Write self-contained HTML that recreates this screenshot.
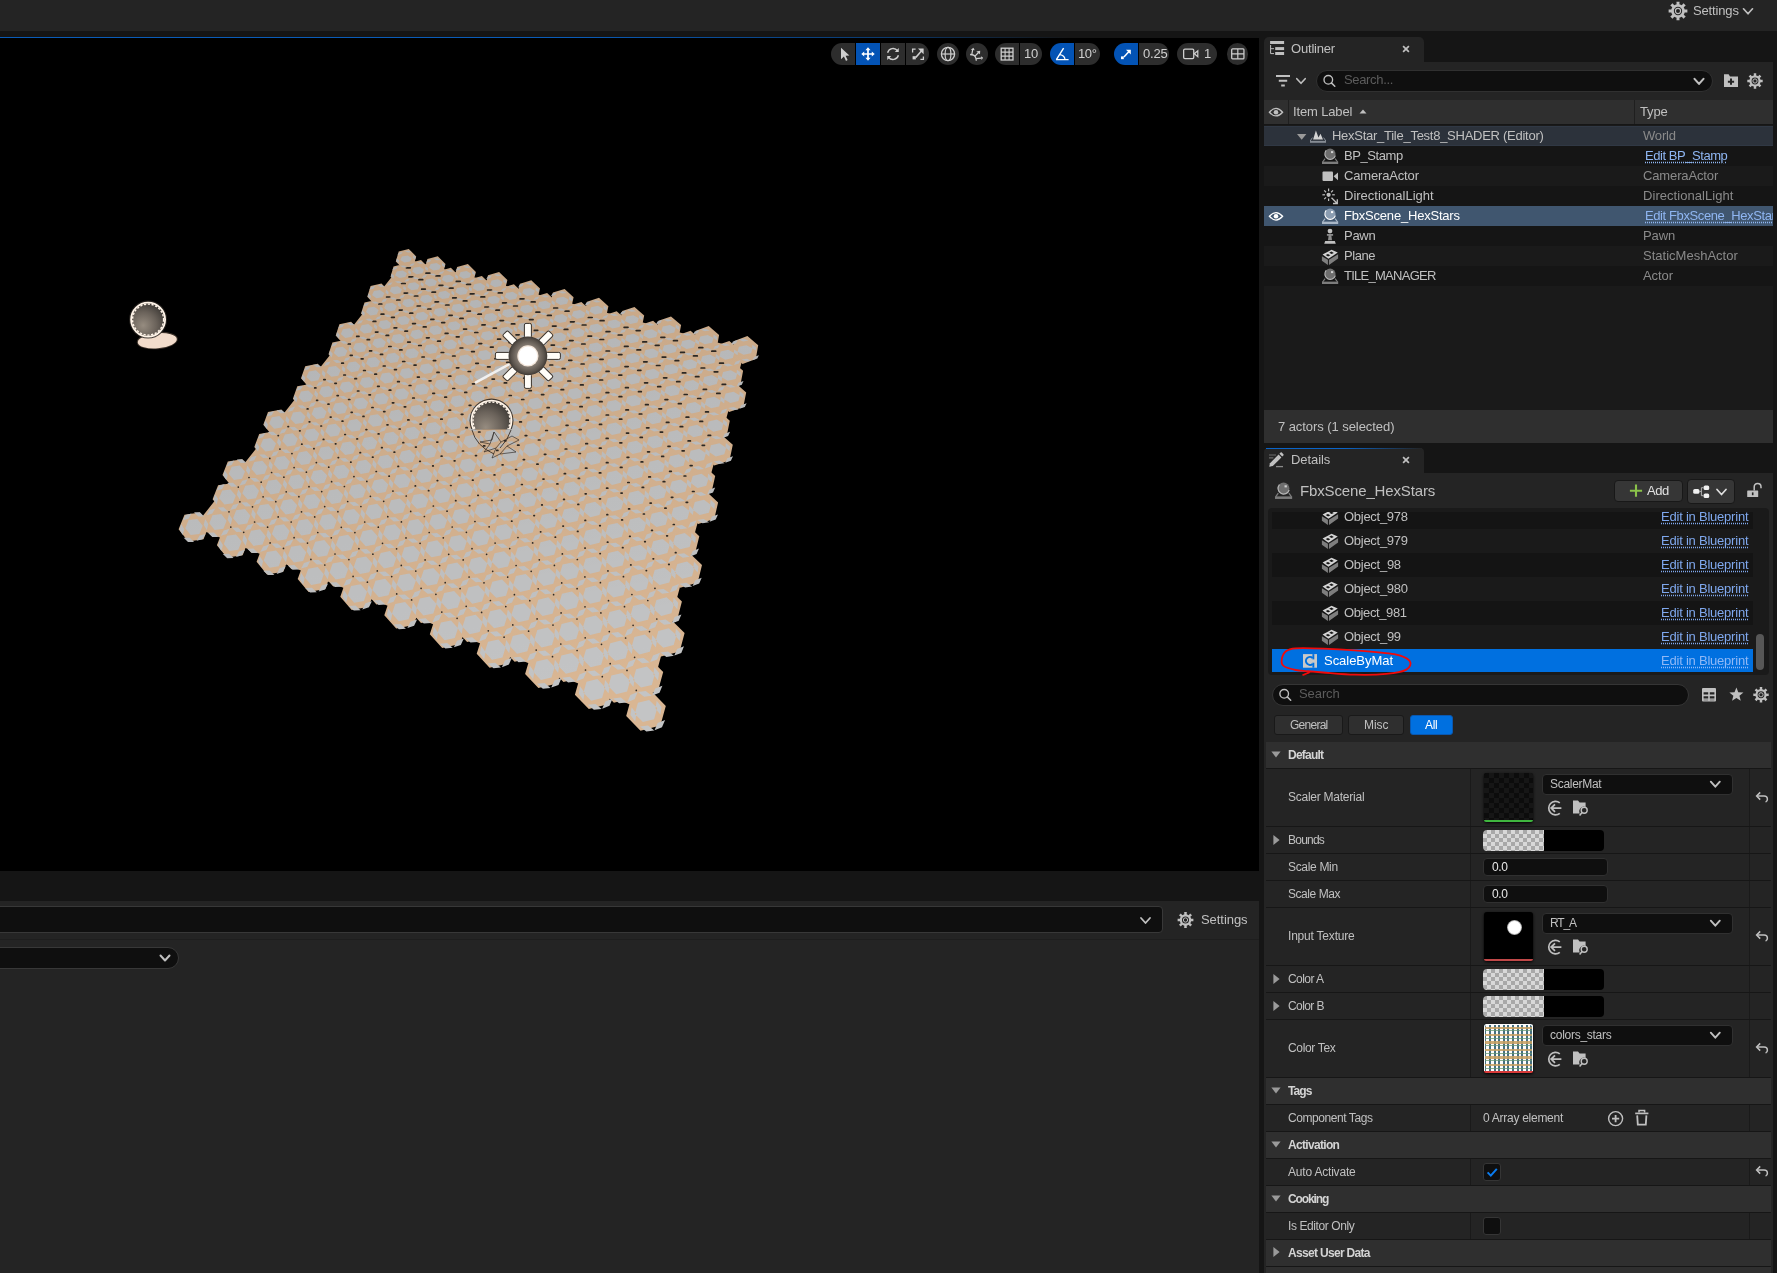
<!DOCTYPE html>
<html><head><meta charset="utf-8"><title>UE</title>
<style>
html,body{margin:0;padding:0;background:#151515;}
body{width:1777px;height:1273px;overflow:hidden;font-family:"Liberation Sans",sans-serif;}
#root{position:relative;width:1777px;height:1273px;overflow:hidden;background:#151515;}
#root div,#root span.t,#root svg{position:absolute;}
#root div{box-sizing:border-box;}
span.t{white-space:pre;will-change:transform;}
.lnk{text-decoration:underline dotted;text-underline-offset:2px;}

</style></head>
<body>
<div id="root">
<div style="left:0px;top:0px;width:1777px;height:31px;background:#242424;"></div>
<div style="left:0px;top:37px;width:1259px;height:1px;background:linear-gradient(90deg,#0a5cb8 0%,#0a5cb8 45%,#0a3a70 70%,#151515 85%);"></div>
<div style="left:0px;top:38px;width:1259px;height:833px;background:#000;"></div>
<div style="left:0px;top:901px;width:1259px;height:372px;background:#242424;"></div>
<div style="left:0px;top:939px;width:1259px;height:1px;background:#1e1e1e;"></div>
<svg style="left:1660px;top:0px;" width="110" height="31" viewBox="0 0 110 31"><path d="M15.38,4.68 L16.60,4.30 L16.44,1.63 L19.56,1.63 L19.40,4.30 L20.62,4.68 L21.74,5.28 L23.52,3.27 L25.73,5.48 L23.72,7.26 L24.32,8.38 L24.70,9.60 L27.37,9.44 L27.37,12.56 L24.70,12.40 L24.32,13.62 L23.72,14.74 L25.73,16.52 L23.52,18.73 L21.74,16.72 L20.62,17.32 L19.40,17.70 L19.56,20.37 L16.44,20.37 L16.60,17.70 L15.38,17.32 L14.26,16.72 L12.48,18.73 L10.27,16.52 L12.28,14.74 L11.68,13.62 L11.30,12.40 L8.63,12.56 L8.63,9.44 L11.30,9.60 L11.68,8.38 L12.28,7.26 L10.27,5.48 L12.48,3.27 L14.26,5.28Z M13.82,11.00 a4.18,4.18 0 1,0 8.36,0 a4.18,4.18 0 1,0 -8.36,0Z" fill="#c0c0c0" fill-rule="evenodd"/><circle cx="18" cy="11" r="2.57" fill="none" stroke="#c0c0c0" stroke-width="1.14"/><path d="M83.5,8.8 L88,13.8 L92.5,8.8" fill="none" stroke="#c0c0c0" stroke-width="1.7" stroke-linecap="round" stroke-linejoin="round"/></svg>
<span class="t" style="left:1692.6px;top:3.0px;font-size:13px;line-height:16px;color:#c0c0c0;letter-spacing:-0.148px;">Settings</span>
<div style="left:0;top:38px;width:1259px;height:833px;overflow:hidden;"><svg style="left:0;top:-38px;" width="1259" height="871" viewBox="0 0 1259 871"><path d="M194,527L232.7,542.8L272.8,559.1L314.4,576L357.4,593.5L401.9,611.6L447.8,630.3L495.2,649.6L544,669.5L594.3,690L646,711L658.2,666.6L669.9,624L681,583.3L691.7,544.4L701.8,507.4L711.5,472.2L720.6,438.9L729.3,407.4L737.4,377.8L745,350L706.2,339.6L668.5,329.5L631.9,319.6L596.4,310.1L561.9,300.9L528.6,291.9L496.3,283.2L465.1,274.9L435,266.8L406,259L389.7,279.6L372.3,301.6L353.8,325L334.2,349.7L313.6,375.8L291.8,403.3L269,432.2L245.1,462.4L220.1,494Z" fill="#d9b693"/><path d="M209.4,524.8l-5.9,14.4-15.3,2.2-9.6,-12.2 5.9,-14.4 15.3,-2.2zM233.3,519.7l-5.7,14.4-15.3,2.3-9.7,-12.2 5.7,-14.4 15.4,-2.3zM248.5,540.3l-5.8,14.9-15.8,2.4-10,-12.4 5.8,-14.9 15.8,-2.4zM242.3,494.7l-5.5,14-14.8,2.2-9.4,-11.7 5.5,-14 14.8,-2.3zM272.6,535.1l-5.7,14.9-15.8,2.5-10.1,-12.4 5.7,-14.9 15.8,-2.5zM289.1,556.4l-5.8,15.4-16.3,2.7-10.4,-12.7 5.8,-15.4 16.2,-2.7zM251.2,470.6l-5.2,13.5-14.4,2.3-9.1,-11.4 5.3,-13.5 14.3,-2.3zM313.3,551l-5.6,15.5-16.2,2.8-10.6,-12.6 5.7,-15.5 16.2,-2.8zM331.1,573l-5.8,16-16.7,3-10.9,-13 5.8,-15.9 16.7,-3zM273.8,465.5l-5.1,13.6-14.4,2.4-9.2,-11.3 5.2,-13.6 14.3,-2.3zM355.5,567.5l-5.6,16-16.7,3.1-11,-12.9 5.6,-15.9 16.7,-3.1zM374.6,590.3l-5.8,16.4-17.1,3.3-11.4,-13.2 5.7,-16.5 17.2,-3.2zM282.1,442.4l-5,13.2-13.9,2.3-8.9,-10.8 4.9,-13.2 13.9,-2.4zM399.1,584.6l-5.6,16.5-17.1,3.4-11.5,-13.1 5.6,-16.5 17.1,-3.4zM419.5,608.1l-5.7,17-17.6,3.5-11.9,-13.4 5.7,-17 17.6,-3.6zM290.2,420.1l-4.8,12.8-13.4,2.3-8.7,-10.5 4.7,-12.8 13.4,-2.3zM444.1,602.3l-5.6,17-17.5,3.7-11.9,-13.3 5.5,-17.1 17.6,-3.7zM465.9,626.5l-5.7,17.5-18,3.9-12.4,-13.7 5.7,-17.5 18,-3.9zM311.4,415.3l-4.6,12.8-13.4,2.4-8.8,-10.4 4.6,-12.8 13.4,-2.4zM490.6,620.5l-5.6,17.6-17.9,4-12.5,-13.6 5.6,-17.6 17.9,-4zM513.7,645.4l-5.6,18.1-18.5,4.2-12.9,-13.9 5.7,-18.1 18.4,-4.2zM318.8,393.9l-4.4,12.5-12.9,2.4-8.6,-10.1 4.4,-12.4 13,-2.4zM538.5,639.3l-5.5,18.1-18.4,4.3-13,-13.8 5.5,-18.1 18.4,-4.3zM563,665l-5.6,18.6-19,4.5-13.3,-14.1 5.6,-18.7 18.9,-4.4zM326.1,373.5l-4.2,12-12.5,2.4-8.4,-9.7 4.2,-12 12.6,-2.4zM587.8,658.7l-5.5,18.6-18.8,4.6-13.4,-14 5.4,-18.6 18.9,-4.6zM613.7,685.1l-5.6,19.2-19.3,4.8-13.9,-14.3 5.5,-19.2 19.4,-4.8zM346.1,368.9l-4.1,12-12.5,2.5-8.4,-9.6 4.1,-12.1 12.5,-2.4zM638.5,678.6l-5.3,19.2-19.3,4.9-14,-14.2 5.4,-19.2 19.3,-4.9zM665.8,705.9l-5.4,19.7-19.9,5.1-14.3,-14.6 5.4,-19.7 19.9,-5.1zM352.7,349.3l-3.9,11.8-12.1,2.4-8.2,-9.2 3.9,-11.8 12.1,-2.4zM663.2,672.1l-5.3,19.1-19.2,5.1-14,-14.1 5.3,-19.2 19.2,-5.1zM359.1,330.6l-3.7,11.4-11.7,2.5-8,-9 3.7,-11.3 11.7,-2.5zM660.8,639.4l-5.1,18.7-18.6,4.9-13.6,-13.6 5,-18.7 18.6,-4.9zM377.9,326.3l-3.6,11.4-11.7,2.5-8.1,-8.8 3.7,-11.4 11.6,-2.5zM684.6,632.9l-4.9,18.6-18.6,5.1-13.6,-13.5 4.8,-18.6 18.6,-5.1zM383.6,308.6l-3.4,11-11.3,2.5-7.9,-8.5 3.5,-11 11.3,-2.6zM681.9,601.6l-4.7,18.1-18,5-13.3,-13.1 4.7,-18.1 18,-5zM389.1,291.6l-3.3,10.7-10.9,2.6-7.6,-8.2 3.3,-10.8 10.9,-2.5zM679.4,571.4l-4.4,17.6-17.4,4.9-13,-12.6 4.4,-17.6 17.5,-4.9zM406.8,287.6l-3.2,10.7-10.9,2.7-7.7,-8.2 3.2,-10.7 10.9,-2.6zM702,565.1l-4.3,17.5-17.4,5.1-13,-12.5 4.3,-17.6 17.3,-5zM411.6,271.6l-3,10.4-10.6,2.6-7.5,-7.8 3,-10.4 10.6,-2.6zM699.3,536.2l-4.2,17-16.8,5-12.7,-12.1 4.1,-17 16.8,-5zM416.2,256.4l-2.9,10.1-10.1,2.6-7.4,-7.5 2.9,-10.1 10.1,-2.6zM428.6,267.8l-2.9,10.4-10.5,2.7-7.6,-7.7 2.9,-10.5 10.5,-2.7zM696.7,508.4l-3.9,16.6-16.3,4.9-12.4,-11.7 3.9,-16.6 16.3,-4.8zM445.5,264l-2.8,10.5-10.5,2.8-7.7,-7.7 2.9,-10.5 10.4,-2.8zM458.8,275.7l-2.8,10.9-10.9,2.9-7.9,-7.9 2.9,-10.9 10.8,-2.9zM718.1,502.4l-3.8,16.6-16.2,5-12.5,-11.6 3.8,-16.6 16.2,-5zM475.9,271.9l-2.8,10.8-10.8,3-8,-7.8 2.8,-10.9 10.8,-3zM490.2,284l-2.9,11.2-11.1,3.1-8.3,-8.1 2.9,-11.1 11.1,-3.2zM715.2,475.9l-3.6,16.1-15.7,4.9-12.1,-11.1 3.6,-16.1 15.7,-4.9zM507.4,280l-2.8,11.2-11,3.3-8.4,-8 2.8,-11.2 11.1,-3.3zM522.6,292.5l-2.8,11.6-11.5,3.4-8.6,-8.3 2.8,-11.5 11.4,-3.4zM712.6,450.5l-3.4,15.7-15.3,4.8-11.8,-10.8 3.4,-15.6 15.3,-4.8zM540,288.5l-2.7,11.5-11.4,3.5-8.7,-8.1 2.7,-11.6 11.4,-3.5zM556.1,301.4l-2.8,11.9-11.7,3.6-9,-8.4 2.8,-11.9 11.7,-3.6zM732.8,444.8l-3.3,15.7-15.2,4.9-11.8,-10.6 3.3,-15.7 15.1,-4.9zM573.6,297.2l-2.6,11.9-11.7,3.7-9.1,-8.3 2.7,-11.9 11.7,-3.7zM590.7,310.5l-2.7,12.3-12.1,3.8-9.3,-8.5 2.7,-12.3 12.1,-3.8zM729.8,420.7l-3.1,15.2-14.7,4.9-11.5,-10.3 3.1,-15.2 14.7,-4.8zM608.4,306.2l-2.6,12.3-12,3.9-9.4,-8.4 2.6,-12.3 12,-3.9zM626.4,319.9l-2.7,12.7-12.4,4.1-9.6,-8.7 2.6,-12.7 12.4,-4zM727,397.7l-2.9,14.7-14.3,4.9-11.2,-10 2.9,-14.7 14.2,-4.8zM644.2,315.5l-2.6,12.7-12.3,4.2-9.7,-8.6 2.6,-12.7 12.3,-4.2zM663.2,329.7l-2.7,13.1-12.6,4.2-10.1,-8.8 2.7,-13.1 12.6,-4.3zM746.2,392.4l-2.9,14.7-14.1,4.9-11.3,-9.8 2.8,-14.7 14.2,-4.9zM681.1,325.1l-2.5,13.1-12.6,4.4-10.1,-8.8 2.5,-13.1 12.6,-4.3zM701,339.7l-2.5,13.5-13,4.5-10.4,-9 2.6,-13.5 12.9,-4.5zM743.1,370.7l-2.7,14.3-13.7,4.8-11.1,-9.5 2.7,-14.3 13.7,-4.8zM719.1,335l-2.4,13.5-13,4.6-10.4,-8.9 2.5,-13.5 12.9,-4.6zM740,350l-2.5,13.9-13.3,4.7-10.7,-9.1 2.5,-13.9 13.3,-4.7zM758.2,345.2l-2.4,13.8-13.2,4.9-10.8,-9.1 2.4,-13.8 13.2,-4.9z" fill="#d9b693"/><path d="M230.8,527.1h0M229,511.8h0M243.7,532.3h0M239.9,501.8h0M238.3,487.1h0M254.6,522h0M252.5,506.8h0M270.1,542.9h0M267.6,527.2h0M283.5,548.4h0M249,477.5h0M263.1,496.8h0M261.2,482.2h0M278.2,516.9h0M275.8,501.7h0M294.1,537.7h0M291.2,522h0M310.9,559.4h0M307.5,543.1h0M324.8,565h0M271.6,472.5h0M269.8,458.4h0M286.2,491.8h0M283.9,477.2h0M301.5,511.8h0M298.9,496.7h0M317.8,532.5h0M314.7,516.9h0M335,554h0M331.3,537.8h0M353.1,576.4h0M348.9,559.6h0M367.4,582.2h0M279.9,449.1h0.1M278.1,435.6h0.3M294.1,467.6h0M291.9,453.6h0.1M309,486.7h0M306.4,472.2h0M324.7,506.6h0M321.7,491.6h0M341.3,527.3h0M337.9,511.7h0M358.9,548.7h0M354.9,532.6h0M377.3,570.9h0M372.9,554.2h0M396.7,593.9h0M391.7,576.6h0M411.6,599.9h0M288,426.6h0.5M301.7,444.2h0.3M299.6,430.8h0.5M316.3,462.6h0.1M313.8,448.7h0.3M331.6,481.7h0M328.7,467.2h0.1M347.7,501.5h0M344.4,486.5h0M364.7,522h0M360.9,506.5h0M382.5,543.3h0M378.3,527.2h0M401.3,565.4h0M396.6,548.8h0M421.1,588.3h0M415.8,571.1h0M441.8,612.1h0M435.9,594.3h0M457.1,618.3h0M309.2,421.8h0.6M307.2,408.9h0.8M323.3,439.4h0.5M320.9,426h0.6M338.2,457.6h0.3M335.4,443.8h0.5M353.9,476.6h0.1M350.7,462.2h0.3M370.4,496.3h0M366.8,481.4h0.1M387.8,516.7h0M383.7,501.3h0M406,537.9h0M401.4,521.9h0M425.1,559.9h0M420.1,543.3h0M445.2,582.7h0M439.6,565.5h0M466.2,606.3h0M460.1,588.6h0M488.3,630.8h0M481.6,612.4h0M504.1,637.2h0M316.6,400.3h1M314.7,387.9h1.2M330.3,417.1h0.8M328,404.2h1M344.8,434.5h0.6M342.1,421.2h0.8M360,452.7h0.5M356.9,438.9h0.6M376.1,471.5h0.3M372.5,457.2h0.5M392.9,491.1h0.1M389,476.2h0.3M410.7,511.4h0M406.2,496h0.1M429.2,532.5h0M424.4,516.5h0M448.7,554.3h0M443.3,537.8h0M469.1,577h0M463.2,559.9h0M490.4,600.5h0M484,582.8h0M512.8,624.9h0M505.8,606.6h0M536.2,650.1h0M528.6,631.2h0M552.5,656.7h0M323.8,379.6h1.4M337.1,395.6h1.2M334.9,383.3h1.4M351.2,412.3h1M348.6,399.5h1.2M366,429.6h0.8M363,416.4h1M381.6,447.7h0.6M378.2,433.9h0.8M398,466.4h0.5M394.1,452.2h0.6M415.2,485.9h0.3M410.9,471.1h0.5M433.3,506h0.1M428.5,490.7h0.3M452.2,527h0M447,511.2h0.1M472,548.7h0M466.4,532.3h0M492.7,571.3h0M486.6,554.3h0M514.4,594.7h0M507.7,577.1h0M537.1,618.9h0M529.8,600.7h0M560.8,644h0M553,625.1h0M585.5,670h0M577.1,650.5h0M602.3,676.7h0M343.8,375h1.6M341.7,363.2h1.7M357.5,391h1.4M354.9,378.7h1.6M371.9,407.5h1.2M369,394.8h1.4M387,424.8h1M383.7,411.6h1.2M402.9,442.7h0.8M399.2,429h1M419.7,461.3h0.6M415.5,447.1h0.8M437.2,480.6h0.5M432.7,465.9h0.6M455.6,500.7h0.3M450.6,485.5h0.5M474.9,521.5h0.1M469.4,505.7h0.3M495.1,543.1h0M489.1,526.8h0.1M516.1,565.5h0M509.7,548.6h0M538.2,588.8h0M531.2,571.3h0M561.1,612.9h0M553.6,594.7h0M585.2,637.8h0M577,619h0M610.2,663.7h0M601.5,644.3h0M636.3,690.4h0M627,670.4h0M350.3,355.3h1.9M348.2,344h2.1M363.6,370.5h1.7M361.2,358.8h1.9M377.6,386.3h1.6M374.8,374.2h1.7M392.4,402.8h1.4M389.2,390.2h1.6M407.8,419.9h1.2M404.3,406.8h1.4M424.1,437.7h1M420.1,424.1h1.2M441.2,456.2h0.8M436.8,442.1h1M459.1,475.4h0.6M454.2,460.8h0.8M477.8,495.3h0.5M472.5,480.2h0.6M497.4,516h0.3M491.6,500.3h0.5M517.9,537.5h0.1M511.6,521.2h0.3M539.3,559.8h0M532.6,542.9h0.1M561.7,582.9h0M554.4,565.4h0M585,606.8h0M577.1,588.7h0M609.3,631.6h0M600.9,612.9h0M634.6,657.3h0M625.6,638h0M356.7,336.4h2.3M369.6,350.9h2.1M367.2,339.7h2.3M383.3,366h1.9M380.5,354.4h2.1M397.6,381.7h1.7M394.5,369.6h1.9M412.7,398h1.6M409.2,385.5h1.7M428.5,415h1.4M424.6,402h1.6M445.1,432.7h1.2M440.8,419.2h1.4M462.5,451h1M457.8,437h1.2M480.7,470.1h0.8M475.5,455.6h1M499.7,489.9h0.6M494.1,474.9h0.8M519.7,510.5h0.5M513.6,494.9h0.6M540.5,531.8h0.3M533.9,515.6h0.5M562.3,553.9h0.1M555.2,537.2h0.3M584.9,576.9h0M577.3,559.5h0.1M608.5,600.7h0M600.4,582.7h0M633.1,625.3h0M624.5,606.7h0M649.5,631.6h0M375.5,332.1h2.5M373.1,321.4h2.7M388.8,346.5h2.3M386.1,335.4h2.5M402.7,361.5h2.1M399.7,349.9h2.3M417.4,377.1h1.9M414,365.1h2.1M432.8,393.3h1.7M429.1,380.8h1.9M449,410.1h1.6M444.8,397.2h1.7M465.9,427.7h1.4M461.3,414.3h1.6M483.6,445.9h1.2M478.6,432h1.4M502.1,464.8h1M496.7,450.4h1.2M521.5,484.5h0.8M515.6,469.5h1M541.7,504.9h0.6M535.4,489.4h0.8M562.9,526.1h0.5M556,510h0.6M584.9,548.1h0.3M577.5,531.4h0.5M607.9,570.9h0.1M600,553.6h0.3M631.9,594.5h0M623.4,576.7h0.1M656.8,619h0M647.8,600.5h0M381.1,314.2h2.8M378.8,304h3M394.1,327.9h2.7M391.5,317.3h2.8M407.7,342.1h2.5M404.8,331.1h2.7M422,357h2.3M418.7,345.5h2.5M437,372.4h2.1M433.4,360.6h2.3M452.8,388.5h1.9M448.7,376.2h2.1M469.2,405.3h1.7M464.8,392.4h1.9M486.5,422.7h1.6M481.6,409.4h1.7M504.5,440.8h1.4M499.2,426.9h1.6M523.3,459.6h1.2M517.6,445.2h1.4M543,479.1h1M536.9,464.2h1.2M563.6,499.4h0.8M556.9,483.9h1M585,520.4h0.6M577.9,504.4h0.8M607.4,542.2h0.5M599.7,525.7h0.6M630.7,564.9h0.3M622.5,547.7h0.5M654.9,588.3h0.1M646.2,570.6h0.3M386.6,297h3.2M399.3,310.1h3M396.7,300h3.2M412.6,323.6h2.8M409.7,313.2h3M426.5,337.8h2.7M423.3,326.9h2.8M441.2,352.5h2.5M437.6,341.2h2.7M456.5,367.8h2.3M452.6,356h2.5M472.5,383.8h2.1M468.2,371.5h2.3M489.3,400.4h1.9M484.6,387.7h2.1M506.9,417.7h1.7M501.8,404.4h1.9M525.2,435.6h1.6M519.7,421.9h1.7M544.4,454.3h1.4M538.4,440h1.6M564.3,473.7h1.2M557.9,458.9h1.4M585.2,493.8h1M578.3,478.4h1.2M606.9,514.7h0.8M599.5,498.8h1M629.6,536.3h0.6M621.7,519.9h0.8M653.1,558.8h0.5M644.7,541.7h0.6M668.7,564.4h0.5M404.2,293.1h3.4M401.6,283.5h3.6M417.2,306h3.2M414.4,296h3.4M430.9,319.4h3M427.7,309h3.2M445.2,333.4h2.8M441.7,322.6h3M460.1,348h2.7M456.3,336.8h2.8M475.8,363.3h2.5M471.6,351.6h2.7M492.1,379.1h2.3M487.6,366.9h2.5M509.2,395.5h2.1M504.3,382.9h2.3M527.1,412.7h1.9M521.7,399.5h2.1M545.7,430.5h1.7M540,416.8h1.9M565.2,449h1.6M559,434.8h1.7M585.5,468.2h1.4M578.8,453.5h1.6M606.6,488.2h1.2M599.4,472.9h1.4M628.6,508.9h1M621,493.1h1.2M651.6,530.4h0.8M643.4,514h1M675.4,552.7h0.6M666.7,535.8h0.8M409,276.9h3.8M406.4,267.8h3.9M421.7,289.2h3.6M418.9,279.7h3.8M435.1,301.9h3.4M431.9,292.1h3.6M449,315.3h3.2M445.6,305h3.4M463.6,329.1h3M459.9,318.4h3.2M478.9,343.6h2.8M474.8,332.5h3M494.9,358.7h2.7M490.4,347.1h2.8M511.6,374.4h2.5M506.7,362.3h2.7M529,390.7h2.3M523.7,378.1h2.5M547.1,407.7h2.1M541.5,394.6h2.3M566.1,425.3h1.9M560,411.8h2.1M585.8,443.7h1.7M579.3,429.6h1.9M606.4,462.7h1.6M599.4,448.2h1.7M627.8,482.5h1.4M620.4,467.4h1.6M650.1,503.1h1.2M642.2,487.4h1.4M673.3,524.5h1M664.9,508.2h1.2M426,273.2h3.9M439.1,285.3h3.8M436,275.9h3.9M452.7,297.9h3.6M449.3,288.1h3.8M467,311.1h3.4M463.3,300.9h3.6M482,324.9h3.2M477.9,314.2h3.4M497.6,339.2h3M493.2,328.1h3.2M513.8,354.1h2.8M509.1,342.6h3M530.8,369.7h2.7M525.7,357.7h2.8M548.5,385.8h2.5M543,373.4h2.7M567,402.7h2.3M561.1,389.7h2.5M586.2,420.2h2.1M579.9,406.7h2.3M606.2,438.4h1.9M599.5,424.4h2.1M627.1,457.3h1.7M619.9,442.8h1.9M648.8,476.9h1.6M641.1,461.9h1.7M671.4,497.3h1.4M663.2,481.7h1.6M686.2,502.3h1.4M456.3,281.4h3.9M470.3,293.9h3.8M466.6,284.3h3.9M484.9,307h3.6M480.9,296.9h3.8M500.1,320.6h3.4M495.8,310.1h3.6M516,334.8h3.2M511.4,323.9h3.4M532.6,349.6h3M527.6,338.2h3.2M549.9,365h2.8M544.5,353.1h3M567.9,381h2.7M562.2,368.7h2.8M586.6,397.7h2.5M580.5,384.9h2.7M606.2,415h2.3M599.6,401.7h2.5M626.5,433.1h2.1M619.5,419.2h2.3M647.6,451.8h1.9M640.2,437.4h2.1M669.6,471.3h1.7M661.7,456.4h1.9M692.5,491.5h1.6M684.1,476h1.7M487.6,290h3.9M502.6,302.9h3.8M498.3,292.9h3.9M518.1,316.4h3.6M513.6,306h3.8M534.3,330.4h3.4M529.5,319.6h3.6M551.2,345.1h3.2M546,333.8h3.4M568.8,360.3h3M563.2,348.6h3.2M587.1,376.2h2.8M581.1,364h3M606.1,392.7h2.7M599.8,380h2.8M625.9,409.9h2.5M619.1,396.7h2.7M646.6,427.8h2.3M639.3,414h2.5M668,446.3h2.1M660.3,432.1h2.3M690.2,465.6h1.9M682.1,450.8h2.1M520.1,298.9h3.9M536,312.2h3.8M531.2,301.9h3.9M552.5,326.1h3.6M547.4,315.4h3.8M569.7,340.6h3.4M564.2,329.4h3.6M587.5,355.7h3.2M581.7,344h3.4M606.1,371.4h3M599.9,359.3h3.2M625.5,387.7h2.8M618.8,375.1h3M645.5,404.7h2.7M638.5,391.7h2.8M666.4,422.4h2.5M658.9,408.8h2.7M688.1,440.9h2.3M680.2,426.7h2.5M702.2,445.3h2.3M553.7,308h3.9M570.5,321.8h3.8M565.1,311.2h3.9M588,336.1h3.6M582.2,325h3.8M606.1,351h3.4M600,339.5h3.6M625,366.6h3.2M618.5,354.6h3.4M644.6,382.8h3M637.7,370.3h3.2M665,399.6h2.8M657.7,386.7h3M686.1,417.2h2.7M678.4,403.7h2.8M708.1,435.4h2.5M699.9,421.4h2.7M588.3,317.5h3.9M606.1,331.7h3.8M600.1,320.7h3.9M624.5,346.4h3.6M618.2,335h3.8M643.7,361.8h3.4M637,349.9h3.6M663.6,377.8h3.2M656.5,365.5h3.4M684.2,394.5h3M676.7,381.7h3.2M705.6,411.9h2.8M697.7,398.5h3M624.1,327.3h3.9M642.8,341.9h3.8M636.2,330.6h3.9M662.2,357.1h3.6M655.3,345.3h3.8M682.4,372.9h3.4M675.1,360.7h3.6M703.3,389.4h3.2M695.5,376.7h3.4M716.8,393.4h3.2M660.9,337.3h3.9M680.6,352.4h3.8M673.5,340.7h3.9M701.1,368h3.6M693.5,355.9h3.8M722.2,384.4h3.4M714.2,371.8h3.6M698.9,347.7h3.9M719.6,363.2h3.8M711.8,351.2h3.9" stroke="#2e2a26" stroke-width="1.7" stroke-linecap="round" fill="none"/><path d="M202.7,525.8l-3.3,8.1-8.7,1.2-5.4,-6.9 3.3,-8.1 8.7,-1.2zM226.6,520.7l-3.2,8-8.7,1.3-5.4,-6.8 3.2,-8 8.7,-1.3zM241.6,541.4l-3.3,8.4-8.9,1.3-5.6,-7 3.3,-8.4 8.9,-1.3zM235.8,495.7l-3,7.6-8.4,1.2-5.3,-6.3 3.1,-7.6 8.4,-1.2zM250.3,515.6l-3.1,7.9-8.6,1.3-5.5,-6.6 3.1,-7.9 8.7,-1.3zM265.7,536.2l-3.2,8.3-8.9,1.4-5.7,-6.9 3.2,-8.3 8.9,-1.4zM282,557.6l-3.3,8.7-9.1,1.5-5.9,-7.2 3.2,-8.7 9.2,-1.5zM245,471.6l-3,7.2-8.1,1.2-5.1,-6 2.9,-7.2 8.1,-1.2zM259,490.7l-3,7.5-8.4,1.2-5.3,-6.2 3,-7.5 8.4,-1.3zM273.9,510.5l-3.1,7.8-8.6,1.4-5.6,-6.5 3.1,-7.9 8.6,-1.3zM289.6,531l-3.1,8.2-8.9,1.5-5.7,-6.8 3.1,-8.2 8.9,-1.5zM306.2,552.3l-3.1,8.6-9.2,1.5-5.9,-7 3.2,-8.6 9.1,-1.6zM323.8,574.3l-3.2,9-9.4,1.7-6.2,-7.3 3.3,-9 9.4,-1.7zM267.5,466.7l-2.8,7.1-8.1,1.2-5.2,-5.9 2.9,-7.1 8.1,-1.2zM281.9,485.6l-2.9,7.4-8.3,1.4-5.4,-6.1 2.9,-7.5 8.4,-1.3zM297.2,505.3l-3,7.8-8.6,1.4-5.6,-6.4 3,-7.7 8.6,-1.4zM313.3,525.7l-3.1,8.2-8.8,1.5-5.8,-6.6 3.1,-8.2 8.8,-1.5zM330.3,546.9l-3.1,8.5-9.1,1.6-6,-6.8 3.1,-8.5 9.1,-1.7zM348.2,568.9l-3.2,8.9-9.3,1.7-6.2,-7.1 3.1,-8.9 9.4,-1.8zM367.1,591.7l-3.2,9.3-9.7,1.8-6.4,-7.4 3.2,-9.3 9.7,-1.8zM276,443.5l-2.8,6.7-7.8,1.2-5.1,-5.5 2.8,-6.7 7.8,-1.2zM289.9,461.7l-2.8,7-8.1,1.3-5.2,-5.8 2.8,-7 8.1,-1.2zM304.7,480.6l-2.9,7.3-8.3,1.4-5.4,-6 2.8,-7.3 8.4,-1.4zM320.3,500.2l-3,7.6-8.5,1.5-5.7,-6.2 3,-7.7 8.6,-1.5zM336.8,520.5l-3,8-8.9,1.6-5.8,-6.5 3,-8 8.8,-1.6zM354.1,541.6l-3,8.4-9.1,1.6-6.1,-6.7 3.1,-8.4 9.1,-1.7zM372.4,563.4l-3.1,8.8-9.4,1.8-6.2,-7 3.1,-8.8 9.3,-1.8zM391.6,586.1l-3.1,9.2-9.7,1.9-6.4,-7.3 3.1,-9.2 9.7,-1.9zM411.8,609.6l-3.2,9.6-9.9,2-6.7,-7.6 3.2,-9.5 9.9,-2zM284.3,421.3l-2.7,6.3-7.5,1.1-4.9,-5.1 2.6,-6.3 7.6,-1.2zM297.8,438.7l-2.7,6.6-7.8,1.2-5.1,-5.4 2.7,-6.6 7.8,-1.2zM312.1,456.7l-2.8,7-8,1.3-5.3,-5.6 2.8,-7 8,-1.3zM327.2,475.5l-2.8,7.3-8.3,1.4-5.5,-5.9 2.8,-7.2 8.3,-1.4zM343.2,495l-2.9,7.6-8.5,1.5-5.7,-6.1 2.9,-7.6 8.5,-1.5zM360,515.2l-2.9,8-8.8,1.6-5.9,-6.4 2.9,-7.9 8.8,-1.6zM377.7,536.2l-3,8.3-9,1.7-6.1,-6.6 3,-8.3 9,-1.7zM396.3,558l-3,8.6-9.3,1.9-6.3,-6.9 3,-8.7 9.3,-1.8zM415.9,580.5l-3.1,9.1-9.6,1.9-6.5,-7.1 3.1,-9.1 9.6,-1.9zM436.5,603.9l-3.2,9.5-9.9,2-6.7,-7.4 3.1,-9.5 9.9,-2zM458,628.2l-3.2,9.8-10.2,2.2-6.9,-7.7 3.2,-9.9 10.1,-2.2zM305.6,416.5l-2.6,6.2-7.6,1.2-4.9,-5 2.5,-6.3 7.6,-1.1zM319.4,433.8l-2.6,6.5-7.8,1.3-5.1,-5.3 2.6,-6.5 7.8,-1.3zM334.1,451.8l-2.7,6.8-8,1.4-5.4,-5.5 2.7,-6.9 8.1,-1.3zM349.6,470.4l-2.8,7.2-8.3,1.4-5.5,-5.7 2.8,-7.1 8.2,-1.5zM365.9,489.8l-2.8,7.5-8.6,1.5-5.7,-5.9 2.8,-7.5 8.5,-1.5zM383,509.9l-2.8,7.9-8.8,1.6-5.9,-6.2 2.8,-7.8 8.8,-1.7zM401.1,530.8l-2.9,8.2-9.1,1.7-6.1,-6.4 2.9,-8.2 9.1,-1.8zM420.1,552.4l-3,8.6-9.3,1.9-6.3,-6.7 2.9,-8.6 9.3,-1.9zM440,574.9l-3,9-9.6,1.9-6.6,-7 3,-8.9 9.6,-2zM460.9,598.2l-3.1,9.3-9.9,2.1-6.7,-7.3 3,-9.3 9.9,-2.1zM482.7,622.3l-3.1,9.8-10.1,2.2-7,-7.6 3.1,-9.7 10.1,-2.3zM505.6,647.3l-3.1,10.2-10.5,2.3-7.2,-7.8 3.2,-10.2 10.4,-2.4zM313.2,395.2l-2.5,5.9-7.3,1.1-4.8,-4.7 2.4,-5.9 7.4,-1.1zM326.6,411.7l-2.5,6.2-7.5,1.2-5,-4.9 2.5,-6.2 7.5,-1.2zM340.9,428.9l-2.6,6.5-7.8,1.3-5.2,-5.2 2.6,-6.4 7.8,-1.3zM355.9,446.8l-2.7,6.7-8,1.4-5.3,-5.3 2.6,-6.8 8,-1.4zM371.7,465.3l-2.7,7.1-8.2,1.5-5.6,-5.6 2.7,-7.1 8.2,-1.4zM388.3,484.6l-2.7,7.4-8.5,1.6-5.8,-5.8 2.8,-7.4 8.5,-1.6zM405.9,504.6l-2.8,7.8-8.8,1.6-6,-6 2.8,-7.8 8.8,-1.7zM424.2,525.4l-2.8,8.1-9,1.8-6.2,-6.4 2.9,-8.1 9,-1.8zM443.6,546.9l-2.9,8.5-9.3,1.9-6.4,-6.6 2.9,-8.5 9.3,-1.9zM463.8,569.2l-2.9,8.9-9.6,2-6.6,-6.9 3,-8.8 9.5,-2zM485,592.4l-3,9.2-9.8,2.1-6.8,-7.1 3,-9.2 9.8,-2.1zM507.2,616.4l-3,9.6-10.1,2.3-7.1,-7.4 3.1,-9.7 10.1,-2.2zM530.4,641.2l-3.1,10.1-10.3,2.4-7.3,-7.7 3.1,-10.1 10.3,-2.4zM554.7,667l-3.2,10.5-10.6,2.5-7.5,-8 3.1,-10.5 10.7,-2.5zM320.6,374.8l-2.3,5.5-7.1,1.1-4.7,-4.5 2.4,-5.5 7,-1.1zM333.7,390.6l-2.4,5.7-7.3,1.2-4.9,-4.6 2.5,-5.8 7.2,-1.2zM347.5,407l-2.4,6.1-7.6,1.2-5,-4.8 2.5,-6.1 7.5,-1.2zM362.1,424.1l-2.5,6.3-7.8,1.4-5.2,-5.1 2.5,-6.3 7.8,-1.4zM377.5,441.8l-2.6,6.7-8,1.4-5.4,-5.2 2.6,-6.7 7.9,-1.4zM393.6,460.3l-2.6,6.9-8.2,1.6-5.6,-5.5 2.6,-7 8.2,-1.5zM410.6,479.4l-2.7,7.3-8.4,1.6-5.8,-5.7 2.6,-7.3 8.5,-1.6zM428.5,499.3l-2.8,7.6-8.7,1.8-6,-6 2.7,-7.6 8.7,-1.7zM447.2,519.9l-2.8,8-9,1.8-6.2,-6.1 2.8,-8 9,-1.9zM466.8,541.3l-2.8,8.4-9.2,1.9-6.5,-6.4 2.8,-8.4 9.3,-1.9zM487.4,563.5l-2.9,8.8-9.5,2-6.6,-6.7 2.8,-8.7 9.5,-2.1zM508.9,586.5l-2.9,9.2-9.8,2.1-6.8,-6.9 2.9,-9.1 9.8,-2.2zM531.4,610.4l-2.9,9.5-10.1,2.3-7.1,-7.2 3,-9.5 10,-2.3zM555,635.1l-3,10-10.4,2.4-7.3,-7.5 3,-10 10.4,-2.4zM579.6,660.7l-3.1,10.4-10.6,2.6-7.6,-7.8 3.1,-10.4 10.6,-2.6zM605.2,687.2l-3.1,10.9-10.9,2.7-7.8,-8.1 3.1,-10.9 10.9,-2.7zM340.6,370.2l-2.3,5.5-7,1.1-4.8,-4.3 2.3,-5.5 7.1,-1.1zM354.1,385.9l-2.4,5.7-7.3,1.2-4.9,-4.5 2.4,-5.7 7.3,-1.2zM368.2,402.2l-2.4,6-7.5,1.3-5.1,-4.7 2.4,-6 7.5,-1.3zM383.2,419.2l-2.5,6.3-7.7,1.3-5.3,-4.9 2.4,-6.3 7.8,-1.3zM398.9,436.8l-2.5,6.6-8,1.5-5.5,-5.2 2.5,-6.5 8,-1.5zM415.4,455.2l-2.6,6.8-8.2,1.6-5.7,-5.4 2.6,-6.8 8.2,-1.6zM432.7,474.2l-2.6,7.2-8.5,1.6-5.8,-5.5 2.6,-7.2 8.4,-1.7zM450.9,493.9l-2.7,7.6-8.7,1.7-6,-5.8 2.6,-7.5 8.7,-1.8zM469.9,514.5l-2.7,7.9-8.9,1.8-6.3,-6 2.7,-7.9 8.9,-1.9zM489.9,535.7l-2.8,8.3-9.2,2-6.5,-6.3 2.8,-8.3 9.2,-2zM510.8,557.8l-2.8,8.6-9.5,2.1-6.7,-6.5 2.8,-8.7 9.5,-2zM532.6,580.7l-2.8,9-9.8,2.2-6.9,-6.8 2.8,-9 9.8,-2.2zM555.4,604.4l-2.9,9.4-10,2.3-7.1,-7 2.9,-9.4 10,-2.4zM579.3,629l-3,9.8-10.3,2.5-7.3,-7.4 2.9,-9.8 10.3,-2.5zM604.2,654.4l-3,10.3-10.6,2.6-7.6,-7.7 3,-10.2 10.6,-2.6zM630.1,680.8l-3,10.7-10.9,2.7-7.8,-7.9 3,-10.7 10.9,-2.7zM657.2,708.1l-3.1,11.1-11.2,2.9-8.1,-8.2 3.1,-11.1 11.2,-2.9zM347.4,350.7l-2.2,5.1-6.8,1.1-4.6,-4 2.2,-5.1 6.8,-1.1zM360.5,365.7l-2.3,5.4-7,1.1-4.8,-4.2 2.3,-5.4 7,-1.1zM374.3,381.3l-2.3,5.6-7.3,1.2-5,-4.4 2.3,-5.6 7.3,-1.2zM388.8,397.5l-2.4,5.9-7.5,1.3-5.1,-4.6 2.3,-5.9 7.5,-1.3zM404,414.3l-2.4,6.2-7.7,1.4-5.3,-4.8 2.4,-6.2 7.7,-1.4zM420.1,431.8l-2.5,6.5-7.9,1.5-5.5,-5 2.4,-6.5 7.9,-1.5zM436.9,450.1l-2.5,6.7-8.2,1.6-5.7,-5.2 2.5,-6.8 8.2,-1.6zM454.5,469l-2.5,7.1-8.4,1.7-5.9,-5.5 2.5,-7.1 8.4,-1.7zM473,488.6l-2.5,7.4-8.7,1.8-6.1,-5.7 2.6,-7.4 8.6,-1.8zM492.4,509l-2.6,7.8-8.9,1.8-6.3,-5.9 2.6,-7.8 8.9,-1.8zM512.7,530.1l-2.7,8.2-9.2,2-6.5,-6.2 2.7,-8.1 9.2,-2zM533.9,552l-2.7,8.6-9.5,2.1-6.7,-6.4 2.7,-8.5 9.5,-2.2zM556.1,574.8l-2.8,8.9-9.7,2.2-7,-6.6 2.8,-8.9 9.7,-2.3zM579.2,598.4l-2.8,9.2-10,2.4-7.2,-6.9 2.8,-9.3 10,-2.3zM603.3,622.8l-2.8,9.7-10.3,2.5-7.4,-7.2 2.9,-9.7 10.2,-2.5zM628.5,648.1l-2.9,10.1-10.5,2.6-7.7,-7.4 2.9,-10.1 10.6,-2.7zM654.8,674.3l-3,10.6-10.8,2.7-7.9,-7.7 3,-10.6 10.8,-2.7zM354,332.1l-2.1,4.7-6.6,1.1-4.5,-3.8 2.1,-4.8 6.6,-1zM366.7,346.3l-2.1,5.1-6.8,1.1-4.7,-4 2.2,-5 6.8,-1.1zM380.1,361.2l-2.1,5.3-7.1,1.1-4.8,-4.1 2.2,-5.2 7,-1.2zM394.3,376.7l-2.3,5.5-7.2,1.3-5,-4.3 2.2,-5.6 7.3,-1.2zM409.1,392.7l-2.3,5.9-7.4,1.3-5.2,-4.5 2.3,-5.8 7.4,-1.3zM424.7,409.5l-2.3,6.1-7.7,1.4-5.4,-4.7 2.3,-6.1 7.7,-1.4zM441.1,426.9l-2.4,6.4-7.9,1.5-5.6,-4.9 2.4,-6.4 7.9,-1.5zM458.2,444.9l-2.4,6.7-8.2,1.6-5.7,-5 2.4,-6.8 8.2,-1.6zM476.2,463.7l-2.5,7-8.4,1.7-5.9,-5.3 2.4,-7 8.4,-1.7zM495,483.2l-2.5,7.4-8.6,1.8-6.2,-5.6 2.5,-7.3 8.7,-1.8zM514.7,503.5l-2.5,7.6-8.9,2-6.4,-5.8 2.6,-7.7 8.9,-1.9zM535.3,524.5l-2.6,8-9.2,2-6.5,-6 2.6,-8 9.1,-2zM556.8,546.3l-2.6,8.4-9.4,2.1-6.8,-6.3 2.6,-8.3 9.4,-2.2zM579.3,568.9l-2.7,8.7-9.7,2.3-7,-6.5 2.7,-8.8 9.7,-2.2zM602.7,592.3l-2.7,9.1-10,2.4-7.2,-6.7 2.7,-9.2 10,-2.4zM627.1,616.6l-2.7,9.5-10.3,2.6-7.4,-7.1 2.8,-9.5 10.2,-2.6zM652.6,641.7l-2.8,10-10.5,2.7-7.7,-7.3 2.8,-10 10.5,-2.7zM372.8,327.8l-2,4.7-6.6,1.1-4.6,-3.7 2.1,-4.7 6.6,-1.1zM385.9,341.9l-2.1,5-6.8,1.1-4.7,-3.8 2.1,-4.9 6.8,-1.2zM399.6,356.7l-2.1,5.2-7,1.2-4.9,-4 2.2,-5.2 7,-1.2zM414.1,372l-2.2,5.5-7.2,1.3-5.1,-4.2 2.2,-5.5 7.2,-1.2zM429.3,388l-2.3,5.7-7.4,1.4-5.2,-4.4 2.2,-5.7 7.4,-1.4zM445.2,404.6l-2.3,6-7.6,1.5-5.5,-4.6 2.3,-6 7.7,-1.5zM461.9,421.9l-2.3,6.3-7.9,1.5-5.6,-4.7 2.3,-6.4 7.9,-1.5zM479.3,439.8l-2.3,6.6-8.1,1.7-5.8,-5 2.3,-6.6 8.2,-1.7zM497.6,458.5l-2.4,6.9-8.3,1.7-6,-5.2 2.4,-6.9 8.4,-1.7zM516.8,477.8l-2.5,7.3-8.6,1.8-6.2,-5.4 2.5,-7.2 8.6,-1.9zM536.8,497.9l-2.5,7.6-8.9,2-6.4,-5.7 2.5,-7.6 8.9,-1.9zM557.7,518.8l-2.6,7.9-9.1,2.1-6.6,-5.9 2.6,-7.9 9.1,-2.1zM579.5,540.5l-2.6,8.2-9.4,2.2-6.8,-6.1 2.6,-8.3 9.4,-2.2zM602.2,562.9l-2.6,8.6-9.6,2.3-7,-6.3 2.6,-8.7 9.6,-2.3zM626,586.2l-2.7,9-9.9,2.4-7.2,-6.6 2.6,-9 9.9,-2.4zM650.7,610.3l-2.7,9.4-10.2,2.6-7.4,-6.9 2.7,-9.4 10.1,-2.6zM676.5,635.3l-2.8,9.8-10.4,2.7-7.7,-7.1 2.7,-9.8 10.5,-2.7zM378.7,310.1l-2,4.4-6.3,1-4.4,-3.4 1.9,-4.4 6.4,-1zM391.4,323.6l-1.9,4.6-6.6,1.1-4.6,-3.6 2,-4.6 6.6,-1.1zM404.9,337.6l-2.1,4.9-6.7,1.1-4.8,-3.7 2,-4.9 6.8,-1.1zM418.9,352.2l-2,5.1-7,1.3-4.9,-3.9 2,-5.2 7,-1.2zM433.7,367.4l-2.1,5.4-7.2,1.3-5.1,-4.1 2.1,-5.3 7.2,-1.3zM449.2,383.3l-2.1,5.6-7.4,1.4-5.3,-4.2 2.1,-5.7 7.5,-1.4zM465.5,399.8l-2.2,5.9-7.7,1.5-5.4,-4.5 2.2,-5.9 7.6,-1.5zM482.5,416.9l-2.3,6.2-7.8,1.6-5.7,-4.7 2.3,-6.2 7.8,-1.6zM500.3,434.7l-2.3,6.5-8.1,1.7-5.8,-4.9 2.2,-6.5 8.2,-1.7zM518.9,453.2l-2.3,6.8-8.4,1.8-6,-5.1 2.3,-6.8 8.4,-1.8zM538.3,472.4l-2.3,7.2-8.6,1.8-6.2,-5.2 2.3,-7.2 8.6,-1.8zM558.6,492.4l-2.4,7.5-8.8,1.9-6.4,-5.5 2.4,-7.4 8.8,-2zM579.8,513.1l-2.4,7.8-9.1,2.1-6.6,-5.7 2.4,-7.8 9.1,-2.1zM601.9,534.6l-2.4,8.2-9.4,2.2-6.8,-6 2.5,-8.2 9.3,-2.2zM625,556.9l-2.5,8.5-9.6,2.4-7.1,-6.3 2.5,-8.5 9.6,-2.3zM649,580l-2.6,8.9-9.8,2.5-7.3,-6.5 2.6,-8.9 9.8,-2.4zM674,604l-2.6,9.3-10.1,2.6-7.5,-6.7 2.6,-9.3 10.1,-2.6zM384.4,293.2l-1.9,4.1-6.1,1-4.3,-3.2 1.8,-4.1 6.1,-1zM396.8,306l-1.9,4.3-6.3,1.1-4.5,-3.3 1.9,-4.4 6.4,-1zM409.9,319.3l-1.9,4.6-6.5,1.1-4.7,-3.5 2,-4.5 6.5,-1.1zM423.7,333.3l-2,4.8-6.7,1.1-4.8,-3.6 1.9,-4.8 6.8,-1.2zM438.1,347.8l-2,5-7,1.3-4.9,-3.8 2,-5.1 6.9,-1.2zM453.2,362.9l-2,5.3-7.2,1.3-5.2,-4 2.1,-5.3 7.2,-1.3zM469,378.6l-2.1,5.5-7.4,1.4-5.3,-4.1 2.1,-5.6 7.4,-1.4zM485.6,394.9l-2.1,5.8-7.7,1.5-5.4,-4.3 2.1,-5.8 7.6,-1.5zM502.9,411.9l-2.2,6.1-7.8,1.6-5.7,-4.5 2.2,-6.1 7.8,-1.6zM521,429.6l-2.2,6.4-8.1,1.7-5.8,-4.8 2.2,-6.4 8.1,-1.7zM539.9,447.9l-2.2,6.8-8.3,1.7-6.1,-4.9 2.3,-6.7 8.3,-1.8zM559.7,467l-2.3,7.1-8.6,1.8-6.2,-5.1 2.3,-7 8.5,-1.9zM580.3,486.8l-2.3,7.4-8.8,2-6.5,-5.4 2.3,-7.3 8.8,-2zM601.8,507.4l-2.4,7.7-9,2.1-6.7,-5.6 2.4,-7.7 9,-2.1zM624.2,528.8l-2.4,8-9.3,2.2-6.9,-5.8 2.4,-8.1 9.3,-2.2zM647.5,550.9l-2.4,8.4-9.6,2.3-7.1,-6 2.5,-8.4 9.5,-2.4zM671.8,573.9l-2.5,8.7-9.8,2.5-7.3,-6.3 2.5,-8.8 9.8,-2.5zM402,289.2l-1.8,4.1-6.1,1-4.4,-3.1 1.8,-4.1 6.2,-0.9zM414.8,301.9l-1.8,4.3-6.3,1-4.5,-3.2 1.8,-4.2 6.3,-1.1zM428.3,315.2l-1.9,4.4-6.5,1.2-4.7,-3.4 1.9,-4.5 6.5,-1.1zM442.3,328.9l-1.9,4.8-6.7,1.2-4.8,-3.6 1.9,-4.7 6.7,-1.2zM457.1,343.3l-2,5-6.9,1.3-5,-3.7 1.9,-5 7,-1.3zM472.5,358.3l-2,5.2-7.1,1.4-5.2,-3.9 2,-5.2 7.1,-1.4zM488.6,373.9l-2,5.4-7.4,1.5-5.3,-4.1 2,-5.5 7.4,-1.4zM505.5,390.1l-2,5.7-7.6,1.5-5.6,-4.2 2.1,-5.7 7.6,-1.6zM523.2,406.9l-2.2,6.1-7.8,1.6-5.7,-4.5 2.1,-6 7.8,-1.6zM541.6,424.5l-2.2,6.3-8,1.7-5.9,-4.6 2.1,-6.4 8.1,-1.7zM560.8,442.7l-2.2,6.6-8.3,1.8-6.1,-4.8 2.2,-6.6 8.3,-1.8zM580.8,461.6l-2.2,6.9-8.5,1.9-6.3,-5 2.2,-6.9 8.5,-1.9zM601.7,481.3l-2.2,7.2-8.8,2-6.5,-5.2 2.3,-7.3 8.7,-2zM623.5,501.7l-2.3,7.6-9,2.1-6.7,-5.5 2.3,-7.6 9,-2.1zM646.2,522.9l-2.3,7.9-9.3,2.2-6.9,-5.7 2.3,-7.9 9.3,-2.2zM669.8,544.8l-2.4,8.3-9.5,2.4-7.1,-5.9 2.4,-8.3 9.5,-2.4zM694.4,567.6l-2.4,8.7-9.8,2.5-7.4,-6.2 2.5,-8.6 9.8,-2.5zM407,273.3l-1.7,3.8-5.9,0.9-4.3,-2.8 1.7,-3.8 6,-1zM419.5,285.3l-1.7,4-6.1,1-4.4,-3 1.7,-4 6.1,-1zM432.7,297.9l-1.8,4.2-6.3,1.1-4.6,-3.2 1.8,-4.2 6.3,-1zM446.4,311l-1.8,4.4-6.5,1.2-4.7,-3.3 1.8,-4.4 6.5,-1.2zM460.8,324.7l-1.8,4.6-6.7,1.2-4.9,-3.4 1.8,-4.7 6.8,-1.2zM475.9,338.9l-1.9,4.9-6.9,1.3-5.1,-3.6 1.9,-4.9 6.9,-1.3zM491.6,353.7l-1.9,5.2-7.1,1.3-5.2,-3.7 1.9,-5.2 7.1,-1.3zM508.1,369.2l-2,5.4-7.3,1.4-5.4,-3.9 2,-5.4 7.3,-1.5zM525.3,385.2l-2,5.7-7.6,1.5-5.6,-4.1 2,-5.7 7.6,-1.5zM543.2,402l-2,5.9-7.8,1.6-5.8,-4.3 2.1,-5.9 7.8,-1.7zM561.9,419.3l-2.1,6.3-8,1.7-5.9,-4.5 2.1,-6.2 8,-1.8zM581.4,437.4l-2.1,6.5-8.2,1.8-6.2,-4.7 2.2,-6.5 8.2,-1.8zM601.8,456.2l-2.2,6.8-8.5,1.9-6.3,-4.9 2.2,-6.8 8.5,-1.9zM623,475.7l-2.2,7.1-8.8,2.1-6.5,-5.2 2.2,-7.1 8.7,-2zM645,495.9l-2.2,7.5-9,2.1-6.7,-5.3 2.2,-7.4 9,-2.2zM668,517l-2.3,7.8-9.2,2.2-6.9,-5.5 2.2,-7.8 9.3,-2.3zM691.9,538.8l-2.3,8.1-9.5,2.4-7.2,-5.8 2.4,-8.1 9.4,-2.4zM411.7,258.1l-1.6,3.5-5.7,0.9-4.1,-2.6 1.6,-3.5 5.7,-0.9zM424,269.5l-1.6,3.7-5.9,1-4.3,-2.8 1.6,-3.7 5.9,-0.9zM436.9,281.4l-1.7,4-6.1,1-4.4,-2.9 1.7,-3.9 6.1,-1.1zM450.4,293.9l-1.8,4.1-6.3,1.1-4.5,-3 1.7,-4.2 6.3,-1.1zM464.4,306.9l-1.7,4.3-6.5,1.2-4.8,-3.2 1.8,-4.4 6.5,-1.1zM479.2,320.4l-1.8,4.6-6.7,1.2-4.9,-3.3 1.8,-4.6 6.7,-1.2zM494.5,334.5l-1.8,4.8-6.9,1.3-5.1,-3.5 1.9,-4.8 6.9,-1.3zM510.6,349.2l-1.9,5.1-7.1,1.3-5.2,-3.6 1.8,-5.1 7.1,-1.4zM527.4,364.5l-1.9,5.3-7.4,1.5-5.4,-3.9 1.9,-5.3 7.3,-1.4zM544.8,380.4l-1.9,5.6-7.5,1.5-5.6,-4 1.9,-5.5 7.5,-1.6zM563.1,397l-2,5.8-7.8,1.7-5.7,-4.2 1.9,-5.9 7.8,-1.6zM582.1,414.2l-2,6.1-8,1.8-6,-4.4 2,-6.1 8,-1.8zM601.9,432.1l-2.1,6.5-8.2,1.8-6.1,-4.6 2,-6.4 8.2,-1.8zM622.5,450.8l-2.1,6.7-8.4,1.9-6.4,-4.8 2.1,-6.7 8.5,-1.9zM644,470.1l-2.1,7-8.7,2.1-6.6,-5 2.1,-7 8.7,-2.1zM666.4,490.2l-2.2,7.3-8.9,2.2-6.8,-5.2 2.1,-7.3 9,-2.2zM689.6,511l-2.2,7.7-9.2,2.3-7,-5.4 2.2,-7.7 9.2,-2.3zM440.9,265.8l-1.6,3.7-5.9,0.9-4.3,-2.6 1.6,-3.7 5.9,-1zM454.1,277.6l-1.6,3.9-6.1,1-4.5,-2.8 1.7,-3.9 6,-1zM467.9,289.9l-1.7,4.1-6.2,1.1-4.7,-3 1.7,-4 6.3,-1.1zM482.3,302.8l-1.7,4.2-6.5,1.2-4.8,-3.1 1.7,-4.3 6.5,-1.1zM497.3,316.2l-1.7,4.5-6.7,1.2-4.9,-3.2 1.7,-4.5 6.7,-1.3zM513,330.1l-1.7,4.8-6.9,1.3-5.1,-3.4 1.7,-4.8 6.9,-1.3zM529.4,344.7l-1.8,5-7.1,1.4-5.3,-3.6 1.8,-5 7.1,-1.4zM546.5,359.8l-1.9,5.3-7.3,1.4-5.4,-3.7 1.8,-5.2 7.3,-1.5zM564.2,375.6l-1.8,5.5-7.5,1.6-5.7,-4 1.9,-5.4 7.5,-1.6zM582.8,392l-1.9,5.8-7.8,1.6-5.8,-4.1 1.9,-5.7 7.8,-1.7zM602.1,409.1l-2,6-7.9,1.8-6,-4.3 1.9,-6 8,-1.8zM622.2,426.9l-2,6.3-8.2,1.8-6.2,-4.4 2,-6.3 8.2,-1.9zM643.1,445.3l-2,6.6-8.5,2-6.4,-4.7 2.1,-6.6 8.4,-1.9zM664.8,464.5l-2,6.9-8.7,2.1-6.6,-4.9 2.1,-6.9 8.6,-2zM687.5,484.4l-2.1,7.3-8.9,2.1-6.8,-5 2.1,-7.3 8.9,-2.1zM711,505.1l-2.1,7.6-9.2,2.3-7,-5.3 2.1,-7.6 9.2,-2.3zM471.2,273.8l-1.6,3.8-6,1.1-4.6,-2.8 1.6,-3.8 6.1,-1zM485.3,286l-1.6,4-6.3,1.1-4.6,-2.9 1.6,-4 6.2,-1.1zM500,298.7l-1.6,4.2-6.5,1.2-4.8,-3 1.6,-4.2 6.5,-1.2zM515.4,312l-1.7,4.4-6.7,1.2-5,-3.1 1.7,-4.4 6.7,-1.3zM531.4,325.8l-1.8,4.6-6.8,1.4-5.2,-3.3 1.7,-4.7 6.9,-1.3zM548,340.2l-1.7,4.9-7.1,1.4-5.3,-3.5 1.7,-4.9 7.1,-1.4zM565.4,355.2l-1.8,5.1-7.3,1.5-5.5,-3.6 1.8,-5.1 7.3,-1.5zM583.5,370.8l-1.8,5.4-7.5,1.6-5.7,-3.8 1.8,-5.4 7.5,-1.6zM602.3,387.1l-1.9,5.6-7.7,1.7-5.8,-4 1.8,-5.6 7.7,-1.7zM621.9,404l-1.9,5.9-7.9,1.8-6.1,-4.2 1.9,-5.9 7.9,-1.7zM642.3,421.6l-2,6.2-8.1,1.9-6.2,-4.4 1.9,-6.2 8.1,-1.8zM663.4,439.9l-1.9,6.5-8.4,2-6.4,-4.6 1.9,-6.5 8.4,-1.9zM685.5,458.9l-2,6.8-8.6,2.1-6.7,-4.8 2,-6.8 8.6,-2zM708.4,478.7l-2.1,7.1-8.8,2.1-6.8,-4.9 2,-7.1 8.8,-2.2zM502.6,282.1l-1.6,3.9-6.2,1.2-4.7,-2.8 1.5,-3.9 6.3,-1.2zM517.6,294.7l-1.6,4.1-6.4,1.2-4.9,-2.9 1.6,-4.1 6.4,-1.2zM533.2,307.8l-1.6,4.3-6.6,1.3-5,-3.1 1.6,-4.3 6.6,-1.3zM549.5,321.5l-1.6,4.5-6.9,1.4-5.1,-3.2 1.6,-4.6 6.8,-1.3zM566.5,335.7l-1.7,4.8-7,1.5-5.4,-3.4 1.7,-4.8 7,-1.4zM584.2,350.6l-1.8,5-7.2,1.5-5.5,-3.5 1.7,-5 7.2,-1.5zM602.5,366.1l-1.7,5.2-7.5,1.6-5.7,-3.7 1.8,-5.3 7.4,-1.5zM621.6,382.2l-1.8,5.5-7.6,1.7-5.9,-3.9 1.8,-5.5 7.6,-1.7zM641.5,398.9l-1.8,5.8-7.9,1.8-6.1,-4 1.8,-5.9 7.9,-1.7zM662.2,416.4l-1.9,6-8.1,1.9-6.3,-4.2 1.9,-6.1 8.1,-1.9zM683.6,434.5l-1.9,6.4-8.3,1.9-6.5,-4.4 1.9,-6.4 8.4,-1.9zM705.9,453.3l-1.9,6.7-8.6,2.1-6.6,-4.6 1.9,-6.7 8.6,-2.1zM535,290.7l-1.5,4-6.4,1.3-4.9,-2.9 1.5,-4 6.4,-1.2zM551,303.7l-1.6,4.2-6.6,1.3-5.1,-3 1.6,-4.2 6.6,-1.3zM567.5,317.2l-1.5,4.5-6.9,1.3-5.2,-3.1 1.6,-4.5 6.8,-1.3zM584.8,331.3l-1.6,4.7-7,1.4-5.4,-3.2 1.6,-4.7 7,-1.5zM602.8,346l-1.7,4.9-7.2,1.6-5.6,-3.5 1.7,-4.9 7.2,-1.5zM621.4,361.3l-1.7,5.2-7.4,1.6-5.7,-3.6 1.6,-5.2 7.5,-1.6zM640.8,377.3l-1.7,5.4-7.7,1.7-5.9,-3.8 1.7,-5.4 7.7,-1.7zM661,393.8l-1.8,5.8-7.9,1.7-6.1,-3.9 1.8,-5.7 7.8,-1.8zM681.9,411.1l-1.8,6-8.1,1.9-6.3,-4.1 1.8,-6 8.1,-1.9zM703.6,429.1l-1.8,6.2-8.3,2-6.5,-4.3 1.8,-6.3 8.3,-1.9zM726.2,447.7l-1.9,6.6-8.5,2.1-6.7,-4.5 1.8,-6.6 8.6,-2.1zM568.5,299.6l-1.5,4.2-6.6,1.2-5,-2.9 1.5,-4.1 6.5,-1.3zM585.4,313l-1.5,4.3-6.8,1.4-5.3,-3 1.6,-4.4 6.8,-1.4zM603,326.9l-1.6,4.6-7,1.5-5.4,-3.2 1.6,-4.7 6.9,-1.4zM621.2,341.4l-1.6,4.9-7.2,1.5-5.6,-3.3 1.6,-4.9 7.2,-1.5zM640.1,356.6l-1.6,5.1-7.4,1.6-5.8,-3.5 1.7,-5.1 7.4,-1.6zM659.8,372.4l-1.7,5.3-7.6,1.7-5.9,-3.7 1.6,-5.3 7.7,-1.7zM680.2,388.8l-1.7,5.6-7.8,1.8-6.1,-3.8 1.7,-5.7 7.8,-1.7zM701.4,405.9l-1.7,5.8-8,1.9-6.4,-4 1.8,-5.9 8,-1.8zM723.4,423.6l-1.7,6.2-8.3,2-6.5,-4.2 1.7,-6.2 8.3,-1.9zM603.1,308.7l-1.4,4.4-6.8,1.3-5.3,-2.9 1.5,-4.3 6.8,-1.4zM621,322.5l-1.5,4.6-7,1.4-5.4,-3.1 1.5,-4.5 6.9,-1.5zM639.5,336.9l-1.5,4.8-7.2,1.5-5.6,-3.2 1.5,-4.8 7.2,-1.5zM658.7,351.9l-1.6,5-7.3,1.6-5.8,-3.4 1.5,-5 7.4,-1.6zM678.7,367.5l-1.6,5.2-7.6,1.7-6,-3.5 1.6,-5.3 7.6,-1.7zM699.3,383.7l-1.6,5.5-7.8,1.8-6.2,-3.7 1.7,-5.5 7.8,-1.8zM720.8,400.6l-1.7,5.8-8,1.9-6.3,-3.9 1.6,-5.8 8,-1.8zM638.8,318.2l-1.4,4.4-6.9,1.5-5.5,-3 1.4,-4.5 7,-1.4zM657.6,332.4l-1.4,4.7-7.2,1.5-5.6,-3.1 1.4,-4.7 7.2,-1.5zM677.1,347.2l-1.5,4.9-7.3,1.6-5.9,-3.3 1.6,-4.9 7.3,-1.6zM697.3,362.6l-1.5,5.2-7.6,1.7-6,-3.5 1.6,-5.1 7.5,-1.7zM718.3,378.7l-1.6,5.4-7.7,1.8-6.2,-3.6 1.5,-5.4 7.8,-1.8zM740,395.4l-1.6,5.7-8,1.9-6.4,-3.8 1.6,-5.6 8,-1.9zM675.6,327.9l-1.4,4.6-7.1,1.5-5.7,-3 1.4,-4.6 7.1,-1.5zM695.4,342.6l-1.5,4.8-7.3,1.6-5.8,-3.2 1.4,-4.8 7.3,-1.6zM715.9,357.8l-1.5,5.1-7.5,1.7-6.1,-3.4 1.5,-5 7.5,-1.7zM737.1,373.7l-1.5,5.3-7.8,1.8-6.2,-3.5 1.5,-5.3 7.7,-1.8zM713.5,338l-1.4,4.7-7.3,1.6-5.9,-3.1 1.4,-4.7 7.3,-1.6zM734.2,353.1l-1.4,4.9-7.5,1.7-6,-3.3 1.4,-4.9 7.5,-1.7zM752.5,348.3l-1.4,4.9-7.5,1.6-6.1,-3.1 1.4,-4.9 7.5,-1.6zM206.8,529.9l1.5,-5.8-3.1,-5.1-1.5,5.8zM182.7,535l1.6,-5.8-3.1,-5.2-1.6,5.8zM196.6,540.8l5.9,-1.6 3,-5.3-5.9,1.6zM182.8,520.2l5.8,-1.5 2.9,-5.2-5.8,1.5zM183.7,537.8l4.3,4.3 6.1,-0.1-4.3,-4.3zM194,512.3l4.2,4.2 5.9,-0.1-4.2,-4.2zM230.7,524.8l1.5,-5.7-3.2,-5-1.4,5.7zM220.8,535.7l5.9,-1.6 2.9,-5.3-5.9,1.6zM206.6,515.2l5.7,-1.6 2.9,-5.1-5.7,1.6zM207.9,532.7l4.4,4.3 6.1,-0.1-4.4,-4.3zM217.7,507.4l4.2,4 5.9,-0.1-4.2,-4.1zM245.7,545.8l1.5,-6-3.3,-5.2-1.5,6zM221.4,551l1.5,-6-3.2,-5.3-1.5,6zM235.9,557.1l6,-1.8 3,-5.5-6,1.7zM222.8,553.9l4.5,4.4 6.3,-0.2-4.6,-4.4zM232,527.7l4.4,4.2 6.1,-0.2-4.4,-4.2zM239.9,499.5l1.4,-5.4-3,-4.7-1.5,5.4zM216.6,504.6l1.5,-5.5-3.1,-4.8-1.4,5.4zM230.2,510.1l5.7,-1.5 2.8,-5.1-5.7,1.6zM216.5,490.4l5.6,-1.5 2.7,-4.8-5.5,1.5zM227.3,482.9l4.1,3.8 5.7,-0.1-4.1,-3.8zM254.4,519.6l1.4,-5.6-3.2,-4.9-1.4,5.6zM244.8,530.6l5.8,-1.6 2.9,-5.3-5.8,1.6zM241.1,502.4l4.3,4 5.9,-0.2-4.3,-4zM269.7,540.5l1.5,-5.9-3.3,-5.1-1.5,5.9zM260.2,551.9l6.1,-1.8 2.9,-5.5-6,1.8zM247.2,548.8l4.5,4.3 6.3,-0.2-4.5,-4.3zM255.8,522.7l4.4,4.1 6.1,-0.3-4.4,-4.1zM286,562.2l1.4,-6.2-3.4,-5.3-1.4,6.2zM261.5,567.5l1.6,-6.2-3.4,-5.4-1.5,6.2zM276.6,573.9l6.2,-1.8 3,-5.8-6.2,1.9zM263.3,570.7l4.7,4.4 6.4,-0.2-4.7,-4.5zM271.4,543.6l4.5,4.3 6.3,-0.3-4.6,-4.2zM249,475.1l1.4,-5.1-3,-4.4-1.4,5.1zM226.3,480.1l1.4,-5.2-3,-4.5-1.4,5.2zM239.5,485.4l5.6,-1.5 2.7,-4.7-5.5,1.5zM226.3,466.5l5.3,-1.4 2.7,-4.6-5.4,1.4zM236.8,459.4l3.9,3.5 5.6,-0.1-4,-3.6zM263,494.4l1.4,-5.3-3.1,-4.6-1.4,5.3zM253.6,505.1l5.7,-1.6 2.8,-5-5.7,1.6zM250.1,478.1l4.2,3.7 5.7,-0.2-4.1,-3.7zM277.9,514.5l1.3,-5.6-3.2,-4.8-1.4,5.5zM268.6,525.5l5.8,-1.7 2.8,-5.2-5.8,1.7zM264.3,497.5l4.3,3.8 5.9,-0.2-4.3,-3.9zM293.6,535.3l1.4,-5.9-3.4,-5-1.4,5.8zM284.4,546.7l6,-1.8 2.9,-5.5-6.1,1.8zM279.4,517.6l4.4,4 6.1,-0.3-4.4,-4zM310.2,556.9l1.4,-6.1-3.5,-5.3-1.4,6.1zM301.1,568.6l6.2,-1.9 2.9,-5.7-6.2,1.9zM287.8,565.4l4.8,4.4 6.4,-0.3-4.7,-4.4zM295.3,538.5l4.6,4.2 6.3,-0.3-4.6,-4.2zM327.7,579.2l1.5,-6.3-3.6,-5.5-1.5,6.4zM303.2,584.7l1.4,-6.4-3.5,-5.6-1.5,6.4zM318.7,591.4l6.4,-2 3,-6-6.4,2zM305.2,588l4.9,4.6 6.7,-0.4-4.9,-4.5zM312.2,560.2l4.7,4.3 6.5,-0.3-4.8,-4.4zM271.5,470.1l1.3,-5-3,-4.4-1.3,5.1zM262.4,480.4l5.4,-1.5 2.7,-4.7-5.5,1.5zM248.7,461.6l5.4,-1.4 2.6,-4.5-5.4,1.4zM259,454.6l4.1,3.4 5.5,-0.2-4,-3.4zM285.9,489.3l1.3,-5.2-3.1,-4.6-1.3,5.3zM276.8,500l5.7,-1.6 2.7,-4.9-5.7,1.6zM272.8,473.2l4.2,3.6 5.7,-0.3-4.2,-3.6zM301.1,509.3l1.4,-5.5-3.3,-4.8-1.3,5.6zM292.1,520.3l5.8,-1.7 2.8,-5.1-5.8,1.7zM287.4,492.5l4.3,3.7 5.9,-0.2-4.3,-3.8zM317.2,530l1.4,-5.8-3.4,-4.9-1.4,5.8zM308.3,541.4l6,-1.8 2.8,-5.4-6,1.8zM302.8,512.5l4.5,3.9 6.1,-0.3-4.5,-3.9zM334.2,551.5l1.4,-6-3.5,-5.2-1.4,6zM325.4,563.3l6.1,-1.9 2.9,-5.7-6.1,1.9zM319.1,533.3l4.6,4.1 6.3,-0.4-4.6,-4zM352.1,573.8l1.4,-6.3-3.7,-5.4-1.3,6.3zM343.4,586l6.3,-2.1 3,-5.9-6.4,2zM330,582.6l4.9,4.5 6.6,-0.3-4.9,-4.5zM336.3,554.9l4.8,4.2 6.4,-0.4-4.7,-4.2zM370.9,596.9l1.4,-6.6-3.7,-5.6-1.4,6.6zM346.2,602.4l1.5,-6.6-3.8,-5.6-1.4,6.6zM362.3,609.4l6.6,-2.1 3,-6.1-6.5,2.1zM348.7,606l5.1,4.6 6.8,-0.4-5.1,-4.7zM354.4,577.3l5,4.4 6.6,-0.5-4.9,-4.4zM280,446.7l1.2,-4.7-2.9,-4.1-1.3,4.7zM258,451.6l1.3,-4.8-2.9,-4.2-1.3,4.8zM271,456.7l5.3,-1.4 2.5,-4.5-5.3,1.5zM257.8,438.7l5.1,-1.4 2.5,-4.2-5.1,1.3zM267.8,431.9l3.9,3.3 5.4,-0.2-3.9,-3.3zM293.9,465.1l1.2,-4.9-3,-4.3-1.3,5zM285,475.5l5.4,-1.6 2.7,-4.6-5.5,1.5zM281.2,449.7l4,3.4 5.5,-0.2-4,-3.4zM308.6,484.3l1.3,-5.2-3.2,-4.5-1.2,5.2zM299.8,494.9l5.6,-1.6 2.7,-4.9-5.6,1.6zM295.3,468.2l4.2,3.6 5.7,-0.3-4.2,-3.5zM324.2,504.1l1.3,-5.4-3.3,-4.7-1.3,5.4zM315.4,515.2l5.8,-1.8 2.8,-5.1-5.8,1.7zM310.2,487.5l4.4,3.6 5.8,-0.3-4.3,-3.7zM340.6,524.7l1.3,-5.7-3.4,-4.8-1.3,5.7zM332,536.1l5.9,-1.8 2.8,-5.4-5.9,1.9zM326,507.4l4.5,3.8 6.1,-0.3-4.5,-3.8zM358,546.1l1.3,-6-3.6,-5-1.3,5.9zM349.4,557.9l6.2,-1.9 2.8,-5.6-6.1,1.9zM342.7,528.1l4.6,4 6.3,-0.4-4.7,-4zM376.2,568.2l1.4,-6.2-3.7,-5.2-1.3,6.2zM367.8,580.5l6.3,-2.1 2.9,-5.8-6.3,2zM360.2,549.6l4.8,4.1 6.5,-0.4-4.8,-4.2zM395.4,591.2l1.4,-6.5-3.9,-5.4-1.3,6.4zM387.1,603.9l6.5,-2.2 3,-6.1-6.5,2.1zM373.5,600.5l5.1,4.5 6.9,-0.4-5.1,-4.6zM378.7,571.9l5,4.3 6.6,-0.5-5,-4.3zM415.6,615l1.3,-6.7-3.9,-5.7-1.4,6.8zM390.8,620.7l1.4,-6.8-3.9,-5.7-1.5,6.8zM407.4,628.1l6.7,-2.3 3,-6.3-6.7,2.2zM393.6,624.5l5.3,4.7 7,-0.5-5.3,-4.7zM398.1,594.9l5.2,4.5 6.8,-0.5-5.1,-4.5zM288.2,424.2l1.2,-4.5-2.9,-3.8-1.1,4.5zM266.8,429l1.2,-4.5-2.8,-3.9-1.2,4.5zM279.5,433.9l5.1,-1.4 2.5,-4.2-5.2,1.4zM266.7,416.6l5,-1.3 2.4,-4-5,1.3zM276.5,410.2l3.8,3 5.1,-0.2-3.8,-3zM301.7,441.8l1.2,-4.7-2.9,-4-1.2,4.7zM293,451.8l5.3,-1.4 2.5,-4.4-5.3,1.4zM289.4,427.2l3.9,3.2 5.4,-0.2-4,-3.2zM316,460.1l1.2,-4.9-3.1,-4.2-1.2,4.9zM307.4,470.5l5.4,-1.6 2.6,-4.6-5.4,1.6zM303.1,444.9l4,3.3 5.6,-0.2-4.1,-3.4zM331.1,479.1l1.2,-5.1-3.2,-4.4-1.2,5.2zM322.6,489.9l5.6,-1.7 2.6,-4.8-5.6,1.6zM317.5,463.3l4.3,3.5 5.7,-0.3-4.3,-3.5zM347.1,498.9l1.2,-5.4-3.3,-4.5-1.3,5.3zM338.6,510l5.8,-1.8 2.6,-5.1-5.7,1.8zM332.8,482.4l4.4,3.6 5.9,-0.3-4.4,-3.6zM363.9,519.4l1.2,-5.6-3.5,-4.8-1.2,5.6zM355.5,530.8l5.9,-1.8 2.8,-5.3-6,1.8zM349,502.3l4.5,3.7 6.1,-0.4-4.6,-3.7zM381.5,540.6l1.3,-5.8-3.6,-5-1.2,5.9zM373.2,552.5l6.2,-2 2.8,-5.5-6.1,1.9zM366,522.9l4.7,3.9 6.2,-0.5-4.7,-3.9zM400.1,562.7l1.3,-6.2-3.7,-5.1-1.3,6.1zM392,574.9l6.3,-2 2.8,-5.8-6.3,2zM383.9,544.2l4.8,4.1 6.5,-0.5-4.9,-4zM419.7,585.5l1.2,-6.4-3.8,-5.3-1.3,6.4zM411.6,598.2l6.5,-2.1 2.9,-6.1-6.4,2.2zM402.7,566.4l5,4.2 6.6,-0.5-5,-4.2zM440.2,609.3l1.3,-6.7-4,-5.6-1.3,6.7zM432.3,622.4l6.6,-2.3 3,-6.4-6.6,2.3zM418.5,618.9l5.3,4.6 7.1,-0.6-5.3,-4.6zM422.5,589.4l5.2,4.4 6.8,-0.6-5.2,-4.4zM461.7,633.8l1.3,-7-4.2,-5.8-1.3,7zM436.7,639.7l1.4,-7-4.1,-5.9-1.3,7zM453.9,647.3l6.9,-2.4 3,-6.5-6.8,2.4zM439.9,643.7l5.5,4.8 7.3,-0.7-5.5,-4.7zM443.2,613.2l5.4,4.5 7,-0.6-5.4,-4.5zM309.5,419.4l1.1,-4.4-2.9,-3.8-1.1,4.4zM301,429.1l5.1,-1.4 2.4,-4.2-5.1,1.4zM287.8,411.9l5,-1.3 2.3,-4-4.9,1.3zM297.4,405.5l3.9,3 5.2,-0.2-3.9,-3zM323.3,436.9l1.2,-4.6-3,-3.9-1.2,4.6zM314.9,446.9l5.3,-1.5 2.4,-4.3-5.2,1.5zM310.7,422.5l4,3.1 5.4,-0.3-4,-3.1zM338,455.1l1.1,-4.8-3.1,-4.1-1.2,4.8zM329.6,465.5l5.4,-1.6 2.6,-4.6-5.5,1.6zM324.8,440.1l4.1,3.2 5.5,-0.3-4.1,-3.2zM353.4,474l1.2,-5-3.2,-4.3-1.2,5zM345.1,484.7l5.6,-1.6 2.6,-4.8-5.6,1.7zM339.6,458.4l4.3,3.4 5.7,-0.4-4.3,-3.3zM369.7,493.7l1.2,-5.3-3.4,-4.5-1.2,5.3zM361.5,504.7l5.7,-1.7 2.7,-5-5.8,1.7zM355.3,477.4l4.4,3.5 5.8,-0.4-4.4,-3.5zM386.8,514l1.3,-5.5-3.5,-4.7-1.2,5.6zM378.7,525.5l6,-1.9 2.7,-5.2-6,1.9zM371.8,497.1l4.5,3.7 6.1,-0.4-4.6,-3.7zM404.9,535.2l1.2,-5.8-3.6,-4.9-1.2,5.8zM396.9,547l6.1,-1.9 2.7,-5.5-6.1,2zM389.1,517.6l4.7,3.8 6.2,-0.4-4.7,-3.8zM423.8,557.1l1.2,-6.1-3.7,-5-1.2,6.1zM415.9,569.4l6.3,-2.1 2.8,-5.7-6.3,2zM407.4,538.9l4.8,3.9 6.4,-0.5-4.8,-3.9zM443.7,579.8l1.2,-6.3-3.9,-5.2-1.2,6.3zM435.9,592.5l6.5,-2.1 2.8,-6-6.4,2.1zM426.5,560.9l5,4.1 6.6,-0.5-5,-4.1zM464.5,603.4l1.3,-6.6-4.1,-5.4-1.2,6.6zM456.9,616.6l6.6,-2.3 3,-6.3-6.7,2.3zM446.6,583.8l5.2,4.3 6.8,-0.7-5.2,-4.2zM486.3,627.9l1.3,-6.9-4.2,-5.7-1.2,6.9zM478.9,641.4l6.8,-2.4 3,-6.5-6.8,2.4zM465,637.9l5.5,4.7 7.2,-0.7-5.5,-4.7zM467.7,607.5l5.4,4.4 7,-0.6-5.4,-4.5zM509.2,653.2l1.2,-7.2-4.2,-5.9-1.3,7.2zM484.2,659.2l1.3,-7.2-4.3,-6-1.3,7.2zM501.9,667.2l7,-2.6 3,-6.8-7,2.6zM487.8,663.5l5.7,4.8 7.4,-0.7-5.7,-4.8zM489.8,632l5.5,4.6 7.2,-0.7-5.5,-4.6zM317,397.9l1.1,-4.2-2.8,-3.5-1.1,4.1zM296.4,402.6l1.1,-4.2-2.8,-3.6-1.1,4.2zM308.8,407.2l4.9,-1.3 2.3,-4-4.9,1.4zM296,390.8l4.8,-1.3 2.3,-3.7-4.8,1.2zM305.4,384.7l3.7,2.8 5,-0.2-3.7,-2.8zM330.5,414.6l1.1,-4.3-2.9,-3.7-1.1,4.3zM322.3,424.3l5.1,-1.4 2.3,-4.1-5.1,1.4zM318.3,400.9l3.8,2.9 5.2,-0.3-3.9,-2.9zM344.7,432l1.1,-4.5-3,-3.9-1.1,4.6zM336.5,442l5.3,-1.5 2.4,-4.3-5.2,1.5zM331.9,417.8l4,3 5.3,-0.3-4,-3.1zM359.7,450.1l1.1,-4.8-3.1,-4-1.1,4.8zM351.6,460.5l5.4,-1.6 2.5,-4.5-5.4,1.5zM346.3,435.3l4.1,3.1 5.5,-0.3-4.1,-3.2zM375.5,468.9l1.1,-5-3.2,-4.2-1.2,5zM367.5,479.6l5.6,-1.7 2.5,-4.7-5.6,1.7zM361.5,453.5l4.3,3.3 5.6,-0.4-4.2,-3.3zM392.1,488.4l1.2,-5.2-3.4,-4.4-1.2,5.2zM384.2,499.5l5.7,-1.8 2.6,-4.9-5.7,1.8zM377.5,472.4l4.4,3.4 5.9,-0.4-4.5,-3.5zM409.6,508.7l1.2,-5.5-3.5,-4.6-1.2,5.5zM401.8,520.2l5.9,-1.9 2.6,-5.2-5.9,1.9zM394.3,492l4.6,3.5 6,-0.4-4.5,-3.6zM428,529.7l1.2,-5.7-3.7,-4.8-1.2,5.7zM420.3,541.6l6,-2 2.7,-5.4-6,1.9zM412,512.4l4.7,3.7 6.3,-0.5-4.8,-3.8zM447.3,551.5l1.1,-6-3.7,-4.9-1.2,5.9zM439.6,563.8l6.3,-2.1 2.8,-5.7-6.3,2.1zM430.6,533.5l4.9,3.8 6.4,-0.5-4.9,-3.9zM467.5,574.1l1.1,-6.2-3.9,-5.2-1.2,6.3zM460,586.8l6.4,-2.2 2.8,-5.9-6.4,2.2zM450.1,555.4l5,4 6.6,-0.6-5,-4zM488.6,597.6l1.2,-6.6-4,-5.3-1.2,6.5zM481.3,610.7l6.6,-2.3 2.9,-6.2-6.6,2.3zM470.5,578.1l5.2,4.2 6.8,-0.6-5.2,-4.2zM510.8,621.9l1.2,-6.8-4.2,-5.6-1.2,6.8zM503.6,635.5l6.8,-2.5 2.9,-6.5-6.8,2.5zM491.9,601.7l5.4,4.3 7,-0.7-5.4,-4.3zM533.9,647l1.2,-7.1-4.3,-5.8-1.2,7.1zM526.9,661.1l7,-2.6 3,-6.7-7,2.5zM512.9,657.5l5.7,4.7 7.4,-0.7-5.7,-4.8zM514.3,626.1l5.6,4.5 7.2,-0.7-5.6,-4.5zM558.1,673.1l1.3,-7.4-4.5,-6-1.2,7.4zM533.1,679.3l1.2,-7.4-4.4,-6.1-1.3,7.4zM551.3,687.6l7.2,-2.7 3,-7-7.1,2.7zM537,683.8l5.9,4.9 7.6,-0.8-5.8,-4.9zM537.8,651.5l5.7,4.6 7.4,-0.8-5.8,-4.7zM324.5,377.2l1,-3.9-2.8,-3.3-1,3.9zM304.3,381.8l1.1,-4-2.7,-3.4-1.1,4zM316.4,386.2l4.8,-1.3 2.2,-3.7-4.8,1.3zM304,370.5l4.6,-1.2 2.2,-3.5-4.6,1.2zM313.1,364.7l3.6,2.6 4.9,-0.2-3.6,-2.6zM337.6,393.2l1,-4.1-2.9,-3.5-1,4.1zM329.5,402.5l5,-1.3 2.2,-3.9-4.9,1.3zM325.6,380.2l3.8,2.7 5,-0.3-3.7,-2.7zM351.4,409.8l1,-4.3-3,-3.6-1,4.3zM343.4,419.5l5.1,-1.5 2.3,-4-5.1,1.4zM338.9,396.3l3.9,2.8 5.2,-0.3-3.9,-2.8zM365.9,427.1l1.1,-4.5-3.1,-3.8-1.1,4.5zM358,437.1l5.2,-1.5 2.4,-4.3-5.2,1.6zM352.9,413l4,3 5.3,-0.4-4,-2.9zM381.3,445.1l1,-4.7-3.2,-4-1,4.7zM373.4,455.4l5.4,-1.6 2.4,-4.4-5.3,1.6zM367.6,430.4l4.2,3.1 5.5,-0.4-4.2,-3zM397.4,463.8l1.1,-5-3.3,-4.1-1.1,4.9zM389.6,474.5l5.6,-1.7 2.5,-4.7-5.6,1.7zM383.2,448.5l4.3,3.2 5.6,-0.4-4.3,-3.2zM414.4,483.1l1.1,-5.1-3.5,-4.3-1.1,5.2zM406.7,494.3l5.7,-1.8 2.6,-4.9-5.8,1.8zM399.5,467.3l4.4,3.3 5.9,-0.4-4.5,-3.4zM432.2,503.3l1.1,-5.4-3.6,-4.5-1.1,5.4zM424.6,514.8l5.9,-1.9 2.6,-5.1-5.9,1.9zM416.7,486.8l4.6,3.5 6,-0.5-4.6,-3.5zM450.9,524.2l1.1,-5.7-3.7,-4.6-1.1,5.6zM443.4,536.1l6.1,-2 2.6,-5.4-6,2zM434.7,507.1l4.8,3.6 6.2,-0.6-4.8,-3.6zM470.5,545.8l1.1,-5.8-3.8,-4.9-1.1,5.9zM463.1,558.2l6.3,-2.1 2.7,-5.6-6.2,2.1zM453.6,528.1l4.9,3.7 6.4,-0.6-4.9,-3.7zM491,568.3l1.1,-6.1-3.9,-5.1-1.1,6.2zM483.8,581.1l6.4,-2.2 2.8,-5.9-6.4,2.2zM473.4,549.9l5.1,3.9 6.6,-0.7-5.1,-3.9zM512.5,591.6l1.1,-6.4-4,-5.2-1.2,6.4zM505.4,604.8l6.6,-2.3 2.8,-6.1-6.5,2.3zM494.2,572.5l5.2,4 6.8,-0.6-5.2,-4.1zM535,615.8l1.1,-6.7-4.2,-5.5-1.2,6.7zM528.1,629.4l6.7,-2.4 2.9,-6.4-6.7,2.4zM515.9,595.9l5.4,4.2 7,-0.7-5.4,-4.2zM558.4,640.8l1.2,-6.9-4.4,-5.7-1.1,7zM551.7,654.9l6.9,-2.5 3,-6.7-6.9,2.6zM538.6,620.2l5.6,4.4 7.2,-0.8-5.6,-4.4zM583,666.8l1.1,-7.3-4.5,-5.9-1.2,7.3zM576.4,681.3l7.1,-2.7 3,-6.9-7.1,2.7zM562.2,677.7l5.9,4.8 7.6,-0.9-5.9,-4.8zM562.4,645.4l5.7,4.5 7.4,-0.8-5.8,-4.6zM608.5,693.6l1.2,-7.6-4.6,-6.1-1.2,7.6zM583.4,700.1l1.2,-7.7-4.6,-6.2-1.2,7.6zM602.2,708.7l7.3,-2.9 3.1,-7.2-7.3,2.8zM587.8,704.8l6.1,5 7.8,-0.9-6.1,-5zM587.2,671.4l5.9,4.8 7.6,-0.9-6,-4.8zM344.4,372.6l1,-3.8-2.8,-3.2-0.9,3.8zM336.6,381.6l4.8,-1.3 2.2,-3.6-4.8,1.3zM323.9,366l4.6,-1.2 2.1,-3.4-4.6,1.2zM332.9,360.3l3.6,2.6 4.9,-0.3-3.7,-2.5zM357.9,388.5l1,-4-2.9,-3.4-1,4zM350.1,397.8l4.9,-1.3 2.3,-3.9-5,1.4zM345.7,375.7l3.8,2.6 5,-0.3-3.7,-2.6zM372,405l1,-4.2-3,-3.5-1,4.2zM364.3,414.7l5.1,-1.5 2.3,-4-5.1,1.5zM359.3,391.7l4,2.7 5.1,-0.3-3.9,-2.8zM386.9,422.2l1.1,-4.4-3.2,-3.7-1,4.4zM379.3,432.2l5.2,-1.5 2.3,-4.2-5.2,1.5zM373.7,408.3l4,2.9 5.4,-0.4-4.1,-2.9zM402.6,440.1l1.1,-4.7-3.3,-3.8-1,4.6zM395,450.4l5.4,-1.6 2.4,-4.4-5.4,1.6zM388.8,425.6l4.2,3 5.5,-0.4-4.2,-3zM419.1,458.6l1,-4.9-3.3,-4-1,4.9zM411.6,469.3l5.5,-1.7 2.5,-4.6-5.6,1.7zM404.6,443.6l4.4,3.1 5.6,-0.5-4.3,-3.1zM436.4,477.9l1.1,-5.1-3.5,-4.2-1.1,5.1zM429,489l5.7,-1.8 2.5,-4.9-5.7,1.8zM421.3,462.2l4.5,3.3 5.8,-0.5-4.5,-3.3zM454.6,497.9l1,-5.3-3.6,-4.4-1,5.3zM447.2,509.4l5.9,-1.9 2.5,-5.1-5.8,1.9zM438.8,481.6l4.6,3.4 6.1,-0.5-4.7,-3.4zM473.6,518.6l1,-5.5-3.7,-4.6-1,5.6zM466.4,530.6l6,-2 2.6,-5.3-6,2zM457.2,501.7l4.8,3.6 6.1,-0.6-4.7,-3.5zM493.5,540.2l1.1,-5.8-3.9,-4.8-1.1,5.8zM486.4,552.5l6.2,-2.1 2.7,-5.5-6.2,2.1zM476.4,522.6l4.9,3.7 6.4,-0.6-4.9,-3.7zM514.3,562.5l1.1,-6-4,-5-1,6.1zM507.4,575.3l6.4,-2.2 2.7,-5.8-6.4,2.2zM496.6,544.3l5.1,3.8 6.5,-0.7-5.1,-3.8zM536.1,585.7l1.1,-6.3-4.1,-5.2-1.1,6.4zM529.3,598.9l6.6,-2.3 2.8,-6.1-6.6,2.3zM517.6,566.8l5.3,3.9 6.7,-0.7-5.2,-4zM558.9,609.7l1.1,-6.6-4.2,-5.3-1.1,6.6zM552.3,623.4l6.7,-2.5 2.9,-6.3-6.8,2.5zM539.7,590.1l5.4,4.1 6.9,-0.8-5.4,-4.1zM582.7,634.6l1.1,-6.9-4.4,-5.6-1.1,6.9zM576.2,648.7l6.9,-2.6 3,-6.6-7,2.6zM562.7,614.2l5.6,4.3 7.1,-0.8-5.6,-4.3zM607.5,660.4l1.1,-7.2-4.5,-5.8-1.1,7.2zM601.2,675l7.1,-2.7 3,-6.9-7.1,2.7zM586.7,639.2l5.8,4.5 7.4,-0.9-5.8,-4.4zM633.4,687.1l1.1,-7.5-4.7,-6-1.1,7.5zM627.3,702.2l7.3,-2.9 3,-7.2-7.2,2.9zM613,698.4l6.1,4.9 7.8,-0.9-6.1,-4.9zM611.8,665.2l6,4.6 7.5,-1-5.9,-4.6zM660.4,714.7l1.1,-7.8-4.8,-6.2-1.2,7.8zM635.2,721.4l1.2,-7.9-4.8,-6.3-1.2,7.8zM654.5,730.3l7.5,-3 3.1,-7.4-7.5,3zM640,726.4l6.3,5 8,-1-6.3,-5zM638,692l6.1,4.8 7.8,-1-6.2,-4.8zM351.2,352.9l0.9,-3.6-2.7,-3-0.9,3.6zM331.7,357.4l1,-3.7-2.7,-3.1-1,3.7zM343.6,361.6l4.6,-1.3 2.1,-3.4-4.6,1.2zM331.2,346.7l4.4,-1.1 2.1,-3.3-4.5,1.1zM339.9,341.3l3.5,2.4 4.7,-0.3-3.5,-2.4zM364.3,368.1l0.9,-3.8-2.8,-3.2-1,3.8zM356.7,377l4.7,-1.3 2.2,-3.5-4.8,1.2zM352.4,356l3.7,2.4 4.9,-0.3-3.7,-2.5zM378,383.8l1,-3.9-3,-3.3-0.9,3.9zM370.5,393.1l4.9,-1.3 2.2,-3.8-4.9,1.4zM365.7,371.2l3.8,2.6 5,-0.4-3.8,-2.5zM392.5,400.2l1,-4.1-3.1,-3.5-0.9,4.2zM385.1,409.9l5,-1.5 2.2,-3.9-5,1.4zM379.6,387.1l4,2.7 5.1,-0.4-3.9,-2.7zM407.8,417.3l0.9,-4.4-3.1,-3.6-1,4.4zM400.4,427.3l5.2,-1.5 2.3,-4.2-5.2,1.5zM394.3,403.6l4.1,2.8 5.3,-0.4-4.1,-2.8zM423.8,435l1,-4.5-3.3,-3.8-1,4.6zM416.5,445.4l5.3,-1.6 2.4,-4.4-5.4,1.6zM409.7,420.8l4.2,2.9 5.5,-0.5-4.2,-2.9zM440.6,453.4l1,-4.7-3.4,-4-1,4.8zM433.3,464.2l5.6,-1.7 2.4,-4.6-5.6,1.7zM425.9,438.6l4.4,3 5.6,-0.4-4.3,-3.1zM458.2,472.6l1,-5-3.5,-4.1-1,5zM451.1,483.7l5.6,-1.8 2.5,-4.8-5.7,1.8zM442.9,457.1l4.5,3.2 5.8,-0.5-4.5,-3.2zM476.7,492.5l1,-5.3-3.6,-4.3-1,5.3zM469.6,504l5.9,-1.9 2.5,-5-5.8,1.9zM460.7,476.4l4.7,3.3 6,-0.6-4.7,-3.3zM496,513.1l1.1,-5.5-3.8,-4.5-1,5.5zM489.1,525l6,-2 2.6,-5.2-6,2zM479.4,496.4l4.8,3.4 6.2,-0.6-4.8,-3.4zM516.3,534.5l1,-5.7-3.9,-4.7-1,5.7zM509.5,546.8l6.1,-2.1 2.7,-5.5-6.2,2.2zM499,517.1l5,3.6 6.3,-0.6-5,-3.6zM537.4,556.7l1.1,-6-4,-4.8-1.1,6zM530.8,569.5l6.3,-2.3 2.7,-5.7-6.4,2.2zM519.5,538.7l5.1,3.7 6.5,-0.7-5.1,-3.7zM559.5,579.7l1.1,-6.2-4.2,-5.1-1,6.3zM553,592.9l6.5,-2.3 2.8,-6-6.5,2.4zM540.8,561l5.3,3.9 6.8,-0.8-5.3,-3.8zM582.6,603.6l1.1,-6.5-4.3,-5.3-1.1,6.5zM576.3,617.3l6.7,-2.5 2.8,-6.3-6.7,2.5zM563.2,584.2l5.4,4 7,-0.8-5.5,-4zM606.7,628.3l1.1,-6.8-4.5,-5.4-1,6.8zM600.5,642.5l6.9,-2.6 2.9,-6.5-6.9,2.5zM586.5,608.2l5.6,4.2 7.2,-0.9-5.7,-4.2zM631.8,654l1.1,-7.1-4.6,-5.7-1,7.1zM625.8,668.6l7.1,-2.8 2.9,-6.8-7.1,2.8zM610.9,633.1l5.8,4.3 7.3,-0.9-5.8,-4.4zM658,680.5l1.1,-7.4-4.7,-5.9-1.1,7.4zM652.2,695.6l7.3,-2.9 2.9,-7-7.2,2.8zM636.2,658.8l6,4.5 7.5,-0.9-5.9,-4.5zM357.7,334.1l0.9,-3.4-2.7,-2.8-0.8,3.3zM338.8,338.4l0.9,-3.5-2.6,-2.8-0.9,3.4zM350.3,342.4l4.5,-1.2 2,-3.2-4.5,1.2zM338.2,328.2l4.4,-1.1 1.9,-3-4.3,1.1zM346.7,323.1l3.5,2.2 4.5,-0.3-3.4,-2.2zM370.5,348.5l0.8,-3.5-2.7,-3-0.9,3.5zM363.1,357.1l4.6,-1.2 2.1,-3.4-4.6,1.2zM359,337l3.5,2.3 4.7,-0.3-3.5,-2.3zM383.9,363.5l0.9,-3.7-2.9,-3.1-0.9,3.7zM376.6,372.5l4.7,-1.3 2.1,-3.6-4.7,1.3zM371.9,351.6l3.7,2.4 4.8,-0.4-3.7,-2.4zM398,379.2l0.9,-3.9-3,-3.3-0.9,3.9zM390.7,388.5l4.9,-1.4 2.2,-3.7-4.9,1.3zM385.4,366.7l3.9,2.5 5,-0.3-3.9,-2.5zM412.8,395.5l0.9,-4.1-3,-3.4-0.9,4.1zM405.6,405.1l5,-1.5 2.2,-3.9-5,1.5zM399.7,382.5l4,2.6 5.1,-0.4-3.9,-2.6zM428.4,412.4l0.9,-4.3-3.2,-3.5-0.9,4.3zM421.3,422.4l5.1,-1.6 2.3,-4.1-5.2,1.6zM414.7,398.9l4.1,2.7 5.3,-0.4-4.1,-2.8zM444.8,430l0.9,-4.5-3.3,-3.7-0.9,4.5zM437.7,440.3l5.3,-1.6 2.3,-4.3-5.3,1.6zM430.5,415.9l4.2,2.9 5.5,-0.5-4.3,-2.9zM461.9,448.3l0.9,-4.7-3.4,-3.9-0.9,4.7zM454.9,459l5.5,-1.7 2.3,-4.5-5.4,1.7zM447,433.6l4.4,3 5.6,-0.5-4.4,-3zM479.8,467.3l1,-4.9-3.5,-4.1-1,5zM472.9,478.4l5.7,-1.8 2.4,-4.7-5.6,1.8zM464.3,452l4.6,3.1 5.8,-0.5-4.6,-3.1zM498.6,487l1,-5.1-3.7,-4.2-0.9,5.1zM491.8,498.5l5.8,-1.9 2.5,-4.9-5.8,1.9zM482.5,471.2l4.7,3.2 5.9,-0.6-4.6,-3.2zM518.3,507.5l1,-5.4-3.8,-4.4-1,5.4zM511.6,519.4l6,-2 2.5,-5.2-6,2.1zM501.5,491l4.8,3.4 6.2,-0.6-4.9,-3.4zM538.8,528.8l1,-5.7-3.9,-4.5-1,5.6zM532.3,541.1l6.1,-2.1 2.6,-5.4-6.1,2.1zM521.4,511.7l4.9,3.4 6.4,-0.6-5,-3.5zM560.3,550.8l1,-5.9-4.1,-4.7-0.9,5.9zM553.9,563.6l6.3,-2.2 2.6,-5.7-6.3,2.3zM542.1,533l5.2,3.7 6.5,-0.8-5.1,-3.6zM582.7,573.7l1,-6.1-4.2,-5-1,6.2zM576.5,586.9l6.4,-2.3 2.7,-5.9-6.5,2.3zM563.8,555.2l5.3,3.8 6.7,-0.8-5.3,-3.7zM606.1,597.4l1,-6.4-4.3,-5.1-1,6.4zM600,611.1l6.7,-2.5 2.7,-6.1-6.6,2.4zM586.5,578.3l5.4,3.9 7,-0.9-5.5,-3.9zM630.5,622l1,-6.7-4.5,-5.3-1,6.7zM624.6,636.2l6.8,-2.6 2.8,-6.5-6.8,2.6zM610.1,602.1l5.6,4.1 7.1,-0.9-5.6,-4.1zM655.9,647.5l1,-7-4.6,-5.6-1,7zM650.2,662.1l7,-2.7 2.9,-6.7-7.1,2.7zM634.7,626.8l5.9,4.3 7.3,-1-5.9,-4.2zM376.5,329.8l0.8,-3.3-2.7,-2.8-0.8,3.3zM369.4,338.1l4.4,-1.2 2,-3.2-4.5,1.2zM356.9,324l4.3,-1.1 1.9,-3-4.3,1.1zM365.3,319l3.5,2.1 4.5,-0.3-3.5,-2.2zM389.6,344.1l0.8,-3.5-2.8,-2.9-0.8,3.5zM382.5,352.7l4.6,-1.2 2,-3.4-4.6,1.3zM377.9,332.8l3.6,2.2 4.6,-0.3-3.6,-2.2zM403.3,359l0.9,-3.7-2.9,-3-0.9,3.7zM396.3,367.9l4.7,-1.3 2,-3.5-4.7,1.3zM391.1,347.2l3.7,2.4 4.9,-0.4-3.8,-2.3zM417.8,374.5l0.8,-3.8-3,-3.2-0.8,3.9zM410.8,383.8l4.8,-1.4 2.1,-3.7-4.8,1.4zM405,362.3l3.9,2.4 5,-0.4-3.9,-2.4zM433,390.7l0.8,-4.1-3.1,-3.3-0.9,4.1zM426,400.3l5,-1.5 2.2,-3.8-5.1,1.4zM419.6,377.9l4,2.5 5.2,-0.4-4,-2.5zM448.9,407.5l0.8,-4.2-3.2,-3.5-0.9,4.2zM442,417.5l5.1,-1.6 2.2,-4-5.1,1.5zM435,394.2l4.1,2.6 5.3,-0.5-4.1,-2.6zM465.5,425l0.9,-4.5-3.3,-3.6-0.9,4.5zM458.7,435.3l5.3,-1.6 2.3,-4.3-5.3,1.6zM451,411.1l4.3,2.7 5.5,-0.5-4.3,-2.7zM483,443.1l0.9,-4.6-3.5,-3.8-0.9,4.6zM476.2,453.8l5.5,-1.7 2.3,-4.5-5.4,1.8zM467.9,428.7l4.4,2.9 5.6,-0.6-4.4,-2.9zM501.3,462l0.9,-4.9-3.6,-3.9-0.9,4.8zM494.6,473.1l5.6,-1.8 2.4,-4.7-5.6,1.8zM485.5,446.9l4.6,3.1 5.8,-0.6-4.6,-3zM520.4,481.6l0.9,-5.1-3.7,-4.1-0.9,5.1zM513.8,493.1l5.8,-1.9 2.4,-4.9-5.8,1.9zM504,465.9l4.7,3.2 6,-0.7-4.7,-3.1zM540.3,501.9l1,-5.3-3.9,-4.3-0.9,5.3zM533.9,513.8l6,-2 2.4,-5.1-5.9,2zM523.3,485.7l4.9,3.2 6.1,-0.6-4.8,-3.3zM561.2,523l0.9,-5.5-3.9,-4.5-1,5.6zM554.9,535.4l6.1,-2.2 2.5,-5.3-6.1,2.1zM543.5,506.1l5,3.4 6.3,-0.7-5,-3.4zM583,544.9l0.9,-5.8-4.1,-4.6-0.9,5.8zM576.8,557.7l6.3,-2.2 2.6,-5.6-6.3,2.2zM564.6,527.4l5.1,3.5 6.6,-0.7-5.2,-3.6zM605.7,567.7l0.9,-6.1-4.2,-4.8-0.9,6zM599.7,580.9l6.4,-2.4 2.7,-5.8-6.5,2.4zM586.6,549.4l5.3,3.7 6.7,-0.8-5.3,-3.7zM629.3,591.2l1,-6.3-4.4,-5-0.9,6.3zM623.5,604.9l6.6,-2.5 2.7,-6.1-6.6,2.5zM609.5,572.3l5.5,3.8 6.9,-0.8-5.5,-3.9zM654,615.6l1,-6.6-4.5,-5.2-1,6.6zM648.4,629.8l6.8,-2.6 2.7,-6.4-6.8,2.6zM633.5,596l5.6,4 7.1,-0.9-5.7,-4zM679.7,640.9l1,-6.8-4.7,-5.5-0.9,6.9zM674.3,655.6l7,-2.7 2.7,-6.7-6.9,2.8zM660.4,652.5l6,4.4 7.5,-1.1-6,-4.4zM658.4,620.6l5.8,4.1 7.3,-1-5.8,-4.1zM382.3,311.9l0.8,-3.1-2.6,-2.6-0.8,3.1zM364.1,316l0.8,-3.1-2.6,-2.7-0.8,3.2zM375.4,319.8l4.3,-1.1 1.9,-2.9-4.3,1.1zM363.3,306.5l4.1,-1.1 1.9,-2.8-4.2,1zM371.4,301.7l3.4,2 4.4,-0.4-3.4,-1.9zM395.1,325.5l0.8,-3.3-2.7,-2.6-0.8,3.2zM388.2,333.8l4.4,-1.2 2,-3.1-4.4,1.1zM383.7,314.9l3.5,2 4.5,-0.3-3.5,-2.1zM408.5,339.7l0.8,-3.4-2.8,-2.8-0.8,3.4zM401.7,348.3l4.5,-1.3 2,-3.2-4.6,1.2zM396.6,328.6l3.6,2.2 4.7,-0.4-3.6,-2.2zM422.6,354.5l0.8,-3.6-2.9,-3-0.8,3.7zM415.8,363.4l4.7,-1.3 2,-3.5-4.7,1.3zM410.2,342.9l3.7,2.3 4.8,-0.4-3.7,-2.3zM437.4,369.9l0.8,-3.8-3,-3.1-0.8,3.8zM430.6,379.1l4.9,-1.4 2,-3.6-4.8,1.4zM424.4,357.8l3.9,2.4 5,-0.5-3.9,-2.3zM452.9,385.9l0.8,-4-3.1,-3.2-0.8,4zM446.2,395.5l5,-1.5 2.1,-3.8-5,1.5zM439.4,373.3l4,2.5 5.1,-0.5-4,-2.5zM469.1,402.6l0.9,-4.2-3.3,-3.3-0.8,4.1zM462.5,412.5l5.1,-1.5 2.2,-4-5.2,1.5zM455,389.4l4.2,2.6 5.3,-0.5-4.2,-2.6zM486.1,419.9l0.9,-4.3-3.4,-3.6-0.8,4.4zM479.5,430.2l5.3,-1.6 2.2,-4.2-5.2,1.6zM471.4,406.2l4.3,2.7 5.5,-0.5-4.3,-2.7zM503.9,437.9l0.8,-4.5-3.4,-3.7-0.9,4.6zM497.4,448.6l5.4,-1.7 2.3,-4.4-5.4,1.7zM488.6,423.7l4.4,2.8 5.6,-0.6-4.4,-2.8zM522.5,456.7l0.8,-4.8-3.6,-3.9-0.8,4.8zM516.1,467.8l5.6,-1.9 2.3,-4.6-5.6,1.9zM506.6,441.8l4.5,3 5.8,-0.6-4.6,-3zM541.9,476.1l0.9,-5-3.8,-4-0.8,5zM535.6,487.6l5.8,-1.9 2.3,-4.8-5.7,1.9zM525.3,460.7l4.8,3 5.9,-0.6-4.7,-3.1zM562.2,496.3l0.8,-5.2-3.8,-4.2-0.9,5.2zM556,508.2l5.9,-2 2.4,-5.1-5.9,2.1zM545,480.3l4.8,3.1 6.2,-0.6-4.9,-3.2zM583.3,517.3l0.9,-5.5-4,-4.4-0.9,5.5zM577.3,529.6l6.1,-2.1 2.4,-5.3-6,2.1zM565.4,500.6l5.1,3.3 6.3,-0.7-5,-3.4zM605.4,539l0.9,-5.7-4.1,-4.5-0.9,5.7zM599.5,551.8l6.2,-2.3 2.6,-5.5-6.3,2.3zM586.8,521.7l5.2,3.4 6.5,-0.7-5.2,-3.5zM628.4,561.6l0.9,-6-4.3,-4.7-0.9,6zM622.7,574.8l6.4,-2.4 2.6,-5.7-6.5,2.4zM609.1,543.6l5.4,3.6 6.6,-0.9-5.3,-3.6zM652.4,585l0.8,-6.3-4.3,-4.9-0.9,6.3zM646.8,598.7l6.6,-2.5 2.6,-6-6.6,2.5zM632.4,566.3l5.5,3.7 6.8,-0.9-5.5,-3.7zM677.3,609.2l0.9,-6.5-4.5,-5.1-0.9,6.5zM671.9,623.4l6.8,-2.6 2.7,-6.3-6.8,2.6zM656.6,589.8l5.6,3.9 7.1,-0.9-5.7,-3.9zM388,294.8l0.7,-2.9-2.6,-2.4-0.7,2.9zM370.2,298.8l0.8,-2.9-2.6,-2.5-0.7,3zM381.3,302.4l4.1,-1 1.8,-2.8-4.1,1zM369.4,289.7l4,-1 1.8,-2.6-4,1zM377.3,285.2l3.3,1.8 4.2,-0.3-3.3,-1.8zM400.5,307.8l0.7,-3.1-2.7,-2.5-0.7,3.1zM393.8,315.7l4.3,-1.1 1.8,-3-4.3,1.2zM389.3,297.7l3.4,1.9 4.4,-0.3-3.4,-1.9zM413.6,321.3l0.7,-3.2-2.7,-2.7-0.8,3.3zM406.9,329.5l4.4,-1.2 1.9,-3.1-4.4,1.2zM401.9,310.8l3.6,2 4.5,-0.4-3.5,-2zM427.3,335.3l0.8,-3.3-2.9,-2.8-0.7,3.4zM420.7,343.9l4.5,-1.3 2,-3.2-4.6,1.2zM415.2,324.4l3.6,2.1 4.7,-0.4-3.6,-2.1zM441.7,350l0.8,-3.5-2.9,-2.9-0.8,3.5zM435.2,358.9l4.6,-1.3 2,-3.5-4.7,1.4zM429.1,338.6l3.8,2.2 4.8,-0.4-3.8,-2.2zM456.9,365.3l0.7,-3.8-3,-3-0.8,3.8zM450.3,374.5l4.8,-1.4 2.1,-3.6-4.9,1.4zM443.7,353.3l3.9,2.3 4.9,-0.4-3.9,-2.3zM472.7,381.2l0.7,-4-3.1,-3.1-0.8,3.9zM466.2,390.7l5,-1.5 2,-3.7-4.9,1.5zM458.9,368.7l4.1,2.4 5.1,-0.4-4.1,-2.5zM489.2,397.7l0.8,-4.1-3.3,-3.3-0.8,4.1zM482.8,407.6l5.1,-1.5 2.1,-4-5.1,1.6zM474.9,384.7l4.2,2.5 5.3,-0.5-4.2,-2.5zM506.5,414.9l0.8,-4.3-3.4,-3.4-0.8,4.2zM500.2,425.2l5.2,-1.7 2.2,-4.1-5.2,1.7zM491.6,401.4l4.3,2.6 5.5,-0.5-4.3,-2.7zM524.6,432.8l0.8,-4.5-3.5,-3.6-0.8,4.5zM518.4,443.4l5.4,-1.7 2.2,-4.3-5.4,1.7zM509.1,418.7l4.5,2.7 5.6,-0.5-4.5,-2.8zM543.5,451.3l0.8,-4.7-3.6,-3.7-0.8,4.7zM537.4,462.4l5.5,-1.8 2.3,-4.6-5.6,1.9zM527.4,436.7l4.6,2.9 5.7,-0.7-4.5,-2.8zM563.2,470.6l0.8,-4.9-3.7,-3.9-0.8,4.9zM557.2,482.1l5.7,-1.9 2.3,-4.8-5.7,2zM546.5,455.4l4.7,3 5.9,-0.7-4.7,-3zM583.8,490.7l0.8,-5.2-3.9,-4.1-0.8,5.2zM577.9,502.6l5.9,-2.1 2.3,-4.9-5.9,2zM566.4,474.8l4.9,3.2 6.1,-0.8-4.9,-3.1zM605.2,511.5l0.9,-5.4-4,-4.3-0.9,5.4zM599.5,523.8l6,-2.1 2.4,-5.2-6,2.1zM587.2,495l5,3.3 6.3,-0.8-5,-3.2zM627.6,533.1l0.8,-5.7-4.1,-4.4-0.8,5.6zM622,545.8l6.2,-2.2 2.5,-5.4-6.3,2.2zM608.8,516l5.2,3.3 6.5,-0.8-5.2,-3.3zM650.9,555.5l0.8,-5.9-4.2,-4.6-0.9,5.9zM645.4,568.7l6.4,-2.4 2.5,-5.6-6.4,2.3zM631.4,537.7l5.4,3.5 6.6,-0.9-5.3,-3.5zM675.1,578.7l0.9,-6.1-4.4,-4.8-0.9,6.1zM669.8,592.4l6.6,-2.5 2.6,-5.9-6.6,2.5zM655,560.3l5.5,3.6 6.8,-0.9-5.5,-3.7zM405.6,290.8l0.7,-2.8-2.6,-2.3-0.7,2.8zM399.2,298.4l4.1,-1 1.8,-2.8-4.2,1.1zM386.9,285.8l4,-1 1.8,-2.6-4,1zM394.7,281.4l3.3,1.8 4.3,-0.4-3.3,-1.7zM418.4,303.7l0.7,-3-2.7,-2.5-0.7,3zM412,311.6l4.3,-1.2 1.8,-2.9-4.3,1.2zM407.1,293.8l3.4,1.9 4.4,-0.4-3.4,-1.9zM431.9,317.1l0.7,-3.2-2.8,-2.6-0.7,3.2zM425.5,325.2l4.3,-1.1 1.9,-3.1-4.4,1.2zM420,306.7l3.6,2 4.5,-0.4-3.6,-2zM446,331l0.7,-3.3-2.9,-2.7-0.7,3.3zM439.6,339.5l4.5,-1.2 1.9,-3.2-4.5,1.2zM433.6,320.2l3.7,2.1 4.6,-0.4-3.6,-2.1zM460.7,345.5l0.7,-3.5-3,-2.8-0.7,3.5zM454.4,354.4l4.6,-1.4 2,-3.3-4.7,1.3zM447.8,334.3l3.8,2.1 4.8,-0.4-3.8,-2.2zM476.1,360.7l0.8,-3.7-3.1,-2.9-0.8,3.6zM469.8,369.8l4.8,-1.4 2,-3.5-4.8,1.4zM462.7,348.9l4,2.2 4.9,-0.4-3.9,-2.3zM492.3,376.4l0.7,-3.8-3.2,-3.1-0.7,3.8zM486,386l5,-1.5 2,-3.7-4.9,1.4zM478.3,364.2l4.1,2.3 5.1,-0.5-4.1,-2.3zM509.1,392.8l0.8,-4-3.3,-3.2-0.8,4zM503,402.7l5,-1.6 2.1,-3.8-5.1,1.5zM494.6,380l4.2,2.5 5.3,-0.6-4.2,-2.4zM526.7,409.8l0.8,-4.2-3.4,-3.3-0.8,4.2zM520.6,420.1l5.3,-1.6 2.1,-4.1-5.2,1.7zM511.6,396.5l4.4,2.6 5.4,-0.6-4.3,-2.5zM545.1,427.6l0.8,-4.4-3.6,-3.6-0.7,4.5zM539.1,438.2l5.4,-1.7 2.2,-4.3-5.4,1.8zM529.4,413.7l4.5,2.7 5.6,-0.6-4.5,-2.7zM564.3,446l0.8,-4.6-3.7,-3.7-0.7,4.6zM558.4,457.1l5.6,-1.9 2.2,-4.4-5.6,1.8zM548,431.6l4.6,2.8 5.8,-0.7-4.6,-2.8zM584.3,465.1l0.8,-4.8-3.8,-3.8-0.7,4.8zM578.5,476.6l5.7,-1.9 2.3,-4.7-5.7,1.9zM567.4,450.1l4.8,2.9 5.9,-0.7-4.8,-2.9zM605.2,485l0.8,-5-3.9,-4-0.8,5zM599.5,496.9l5.9,-2 2.3,-4.9-5.8,2zM587.6,469.4l4.9,3 6.1,-0.7-4.9,-3zM626.9,505.7l0.8,-5.3-4,-4.2-0.8,5.3zM621.4,518l6,-2.2 2.4,-5.1-6,2.2zM608.7,489.5l5.1,3.1 6.2,-0.8-5,-3.1zM649.6,527.1l0.8,-5.5-4.2,-4.4-0.8,5.6zM644.2,539.9l6.2,-2.3 2.4,-5.3-6.2,2.2zM630.7,510.2l5.2,3.3 6.4,-0.8-5.2,-3.3zM673.2,549.3l0.7,-5.7-4.3,-4.6-0.7,5.8zM667.9,562.5l6.4,-2.3 2.5,-5.6-6.4,2.3zM653.5,531.8l5.4,3.4 6.6,-0.9-5.3,-3.4zM697.7,572.4l0.8,-6-4.5,-4.7-0.8,6zM692.6,586.1l6.6,-2.5 2.5,-5.9-6.5,2.5zM679.4,583.7l5.7,3.7 7.1,-1-5.7,-3.7zM677.3,554.2l5.6,3.5 6.8,-0.9-5.6,-3.5zM410.5,274.7l0.7,-2.6-2.5,-2.2-0.7,2.7zM393.4,278.5l0.7,-2.7-2.5,-2.2-0.7,2.7zM404.3,282l4,-1 1.7,-2.6-4,1zM392.4,270l3.8,-0.9 1.6,-2.4-3.8,0.9zM399.9,265.8l3.2,1.7 4.1,-0.3-3.2,-1.7zM423.1,286.9l0.7,-2.8-2.7,-2.2-0.6,2.8zM416.9,294.5l4.1,-1.1 1.7,-2.7-4.1,1.1zM412,277.6l3.3,1.7 4.3,-0.3-3.4,-1.7zM436.3,299.6l0.6,-2.9-2.7,-2.4-0.7,3zM430,307.5l4.3,-1.2 1.8,-2.8-4.3,1.1zM424.7,289.9l3.4,1.8 4.4,-0.4-3.4,-1.8zM450,312.9l0.7,-3.1-2.8,-2.5-0.7,3.1zM443.8,321l4.4,-1.2 1.8,-3-4.4,1.2zM438,302.7l3.5,1.9 4.5,-0.4-3.5,-1.9zM464.4,326.7l0.7,-3.3-2.9,-2.6-0.7,3.3zM458.3,335.2l4.5,-1.3 1.8,-3.1-4.5,1.2zM451.9,316.1l3.7,1.9 4.6,-0.4-3.7,-2zM479.5,341.1l0.7,-3.5-3.1,-2.7-0.6,3.4zM473.4,349.9l4.6,-1.3 1.9,-3.4-4.6,1.4zM466.4,330l3.8,2.1 4.8,-0.5-3.8,-2.1zM495.2,356.1l0.7,-3.6-3.1,-2.9-0.7,3.6zM489.2,365.2l4.7,-1.4 2,-3.5-4.8,1.4zM481.6,344.5l4,2.2 4.9,-0.5-3.9,-2.2zM511.7,371.7l0.7,-3.8-3.3,-3-0.7,3.8zM505.7,381.2l4.9,-1.5 2,-3.7-4.9,1.5zM497.5,359.6l4.1,2.3 5.1,-0.5-4.1,-2.3zM528.8,387.9l0.7,-3.9-3.3,-3.2-0.7,4zM522.9,397.8l5.1,-1.6 2,-3.8-5,1.6zM514.1,375.3l4.3,2.4 5.2,-0.5-4.2,-2.4zM546.8,404.8l0.7,-4.1-3.5,-3.3-0.7,4.1zM540.9,415.1l5.2,-1.7 2.1,-4-5.2,1.7zM531.5,391.7l4.3,2.5 5.4,-0.6-4.3,-2.5zM565.5,422.4l0.7,-4.4-3.6,-3.4-0.7,4.4zM559.7,433l5.4,-1.7 2.1,-4.2-5.4,1.7zM549.6,408.7l4.5,2.6 5.5,-0.6-4.4,-2.6zM584.9,440.7l0.8,-4.6-3.7,-3.6-0.7,4.6zM579.3,451.7l5.5,-1.8 2.2,-4.4-5.5,1.8zM568.5,426.5l4.6,2.7 5.7,-0.7-4.6,-2.7zM605.3,459.6l0.7,-4.7-3.8,-3.7-0.8,4.7zM599.7,471.1l5.7,-1.9 2.2,-4.7-5.7,2zM588.1,444.9l4.8,2.8 5.9,-0.7-4.8,-2.9zM626.4,479.4l0.7,-5-3.9,-3.9-0.7,5zM621,491.2l5.8,-2 2.3,-4.8-5.8,2zM608.6,464l5,2.9 6.1,-0.7-5,-3zM648.4,499.9l0.8,-5.3-4.1,-4-0.7,5.2zM643.2,512.1l5.9,-2.1 2.4,-5-6,2.1zM630,483.9l5.1,3 6.2,-0.8-5,-3.1zM671.4,521.1l0.7,-5.4-4.2,-4.3-0.7,5.5zM666.2,533.9l6.2,-2.3 2.4,-5.3-6.2,2.3zM652.3,504.5l5.2,3.2 6.4,-0.9-5.2,-3.2zM695.2,543.2l0.7,-5.7-4.3,-4.4-0.7,5.7zM690.2,556.4l6.4,-2.4 2.4,-5.5-6.3,2.4zM675.4,525.9l5.4,3.3 6.6,-0.9-5.4,-3.3zM415.2,259.5l0.6,-2.5-2.4,-2-0.6,2.5zM398.6,263.1l0.6,-2.5-2.4,-2.1-0.7,2.5zM409.3,266.3l3.8,-0.9 1.6,-2.4-3.8,1zM397.5,255l3.7,-0.9 1.6,-2.2-3.7,0.9zM404.8,251.1l3.2,1.5 3.9,-0.3-3.1,-1.5zM427.6,271l0.6,-2.6-2.6,-2.1-0.6,2.6zM421.6,278.2l3.9,-1 1.7,-2.6-4,1.1zM416.7,262.2l3.2,1.6 4.1,-0.3-3.2,-1.6zM440.4,283l0.7,-2.7-2.7,-2.2-0.6,2.7zM434.5,290.5l4.1,-1.1 1.6,-2.6-4.1,1.1zM429.1,273.9l3.4,1.6 4.2,-0.3-3.3,-1.7zM453.9,295.6l0.6,-2.9-2.7,-2.3-0.6,2.9zM447.9,303.4l4.3,-1.1 1.7,-2.8-4.2,1.1zM442.1,286l3.5,1.8 4.4,-0.4-3.5,-1.8zM468,308.7l0.6,-3-2.8,-2.5-0.6,3.1zM462.1,316.8l4.3,-1.2 1.8,-2.9-4.4,1.2zM455.8,298.7l3.5,1.8 4.6,-0.4-3.6,-1.8zM482.7,322.4l0.7,-3.2-3,-2.6-0.6,3.2zM476.8,330.8l4.5,-1.2 1.8,-3.1-4.5,1.2zM470,311.9l3.7,2 4.6,-0.5-3.7,-1.9zM498.1,336.6l0.7,-3.3-3.1,-2.7-0.6,3.4zM492.2,345.4l4.7,-1.3 1.8,-3.3-4.6,1.4zM484.8,325.7l3.9,2 4.8,-0.4-3.9,-2zM514.2,351.5l0.6,-3.5-3.1,-2.8-0.7,3.5zM508.3,360.6l4.8,-1.4 1.9,-3.4-4.8,1.4zM500.4,340.1l3.9,2.1 5,-0.5-4,-2.1zM530.9,367l0.7,-3.8-3.3,-2.9-0.6,3.7zM525.2,376.4l4.9,-1.5 1.9,-3.6-4.9,1.5zM516.6,355.1l4.1,2.2 5.1,-0.6-4.1,-2.2zM548.4,383l0.7,-3.8-3.4,-3.1-0.7,3.9zM542.7,392.9l5,-1.6 2,-3.8-5,1.6zM533.5,370.7l4.2,2.3 5.3,-0.6-4.3,-2.3zM566.6,399.8l0.7,-4.1-3.5,-3.2-0.7,4.1zM561,410l5.2,-1.6 2,-4-5.2,1.7zM551.1,386.9l4.4,2.4 5.4,-0.6-4.4,-2.4zM585.6,417.2l0.7,-4.3-3.6,-3.3-0.7,4.3zM580.1,427.8l5.3,-1.7 2.1,-4.2-5.3,1.8zM569.5,403.8l4.5,2.5 5.6,-0.7-4.5,-2.5zM605.4,435.3l0.7,-4.4-3.8,-3.5-0.6,4.4zM600,446.3l5.5,-1.8 2.1,-4.3-5.5,1.8zM588.7,421.3l4.7,2.7 5.7,-0.7-4.7,-2.7zM626,454.1l0.7,-4.6-3.9,-3.7-0.7,4.7zM620.7,465.6l5.6,-2 2.2,-4.5-5.6,1.9zM608.7,439.6l4.8,2.7 5.9,-0.7-4.8,-2.8zM647.4,473.7l0.7,-4.9-4,-3.8-0.6,4.9zM642.2,485.5l5.8,-2 2.3,-4.7-5.8,2zM629.5,458.5l4.9,2.9 6.1,-0.8-5,-2.8zM669.7,494l0.7,-5.1-4.1,-4-0.7,5.2zM664.7,506.3l5.9,-2.1 2.3,-5-5.9,2.1zM651.1,478.3l5.1,2.9 6.3,-0.8-5.1,-3zM692.9,515.1l0.7,-5.4-4.2,-4.1-0.7,5.4zM688,527.8l6.2,-2.2 2.3,-5.2-6.1,2.2zM673.6,498.7l5.3,3.1 6.4,-0.9-5.3,-3.1zM444.4,267.3l0.6,-2.6-2.6,-2.1-0.6,2.6zM438.7,274.4l3.9,-1 1.6,-2.5-3.9,1zM426,262.7l3.9,-0.9 1.5,-2.4-3.8,0.9zM433.4,258.6l3.2,1.6 4.1,-0.3-3.2,-1.6zM457.6,279.2l0.6,-2.7-2.7,-2.2-0.5,2.7zM451.9,286.6l4.1,-1.1 1.6,-2.6-4.1,1.1zM446.1,270.2l3.4,1.6 4.2,-0.4-3.3,-1.6zM471.4,291.6l0.6,-2.8-2.8,-2.3-0.5,2.9zM465.7,299.4l4.2,-1.2 1.7,-2.7-4.2,1.1zM459.5,282.2l3.5,1.7 4.3,-0.4-3.5,-1.7zM485.9,304.6l0.5,-3-2.8,-2.4-0.6,3zM480.1,312.7l4.4,-1.2 1.7,-2.9-4.3,1.2zM473.4,294.7l3.6,1.8 4.5,-0.4-3.6,-1.8zM500.9,318.1l0.6,-3.1-3,-2.5-0.6,3.1zM495.2,326.5l4.5,-1.2 1.7,-3.1-4.4,1.3zM487.9,307.8l3.8,1.9 4.6,-0.5-3.7,-1.8zM516.6,332.2l0.6,-3.3-3.1,-2.6-0.6,3.3zM510.9,341l4.6,-1.4 1.8,-3.2-4.6,1.4zM503.1,321.5l3.9,2 4.8,-0.5-3.9,-2zM532.9,346.9l0.6,-3.4-3.1,-2.8-0.6,3.5zM527.3,356l4.8,-1.4 1.8,-3.4-4.7,1.4zM519,335.7l3.9,2.1 5,-0.6-4,-2zM550,362.2l0.6,-3.6-3.3,-2.8-0.6,3.6zM544.5,371.7l4.8,-1.5 1.9,-3.5-4.8,1.4zM535.5,350.6l4.1,2.1 5.1,-0.6-4.2,-2.1zM567.8,378.2l0.6,-3.8-3.4,-3-0.6,3.8zM562.3,388l5,-1.6 2,-3.7-5,1.6zM552.7,366l4.2,2.2 5.3,-0.6-4.3,-2.2zM586.3,394.8l0.6,-4-3.5,-3.1-0.6,4zM580.9,405l5.2,-1.7 2,-3.9-5.2,1.7zM570.6,382.1l4.4,2.3 5.4,-0.6-4.4,-2.4zM605.6,412l0.6,-4.2-3.6,-3.2-0.7,4.2zM600.3,422.6l5.3,-1.7 2,-4.1-5.3,1.7zM589.3,398.8l4.5,2.4 5.6,-0.6-4.5,-2.5zM625.6,430l0.7,-4.4-3.8,-3.4-0.6,4.4zM620.5,441l5.4,-1.9 2.1,-4.2-5.5,1.8zM608.8,416.2l4.6,2.6 5.8,-0.8-4.7,-2.5zM646.5,448.6l0.6,-4.6-3.8,-3.5-0.7,4.6zM641.4,460l5.7,-1.9 2.1,-4.5-5.6,2zM629,434.3l4.8,2.7 5.9,-0.8-4.8,-2.7zM668.2,468l0.7,-4.8-4,-3.7-0.7,4.8zM663.3,479.8l5.8,-2 2.1,-4.7-5.7,2.1zM650.1,453.1l5,2.8 6,-0.8-5,-2.8zM690.8,488.2l0.6,-5.1-4.1,-3.8-0.6,5zM686,500.4l5.9,-2.1 2.3,-4.9-6,2.1zM672,472.6l5.1,2.9 6.3,-0.8-5.2,-2.9zM714.3,509.1l0.6,-5.3-4.2,-4-0.7,5.2zM709.6,521.8l6.1,-2.3 2.3,-5.1-6.1,2.2zM697.1,520l5.4,3.2 6.6,-1-5.5,-3.2zM694.8,492.9l5.3,3 6.4,-0.9-5.3,-3zM474.7,275.4l0.5,-2.7-2.7,-2.1-0.5,2.7zM469.2,282.7l4,-1 1.6,-2.6-4,1.1zM455.6,270.7l4,-1 1.5,-2.5-3.9,1zM463,266.5l3.4,1.6 4.2,-0.4-3.4,-1.6zM488.8,287.7l0.6,-2.8-2.8,-2.2-0.6,2.8zM483.3,295.4l4.2,-1.2 1.6,-2.7-4.1,1.2zM476.6,278.4l3.6,1.7 4.3,-0.5-3.5,-1.6zM503.5,300.5l0.6,-2.9-2.9,-2.3-0.6,2.9zM498,308.5l4.4,-1.2 1.7,-2.8-4.4,1.2zM490.9,290.8l3.6,1.7 4.5,-0.4-3.6,-1.7zM518.9,313.9l0.5,-3.1-3,-2.4-0.5,3.1zM513.4,322.2l4.5,-1.2 1.7,-3-4.4,1.2zM505.7,303.8l3.8,1.8 4.6,-0.5-3.7,-1.8zM534.9,327.9l0.5,-3.3-3.1,-2.5-0.5,3.2zM529.5,336.5l4.5,-1.3 1.8,-3.2-4.6,1.4zM521.2,317.3l3.9,1.9 4.8,-0.5-3.9,-1.9zM551.6,342.4l0.5,-3.4-3.2,-2.6-0.6,3.4zM546.2,351.4l4.7,-1.4 1.8,-3.3-4.7,1.4zM537.4,331.4l4,2 4.9,-0.6-4,-2zM568.9,357.6l0.6,-3.6-3.3,-2.8-0.6,3.6zM563.6,367l4.9,-1.5 1.8,-3.5-4.8,1.5zM554.2,346.1l4.1,2 5.1,-0.5-4.1,-2.1zM587,373.3l0.5,-3.7-3.4,-2.9-0.6,3.7zM581.7,383.1l5,-1.6 1.9,-3.6-4.9,1.6zM571.7,361.3l4.3,2.2 5.2,-0.6-4.3,-2.2zM605.8,389.8l0.6,-4-3.6,-3-0.6,3.9zM600.6,399.9l5.2,-1.6 1.9,-3.9-5.1,1.7zM589.9,377.3l4.4,2.2 5.4,-0.6-4.4,-2.3zM625.3,406.9l0.6,-4.1-3.6,-3.2-0.6,4.1zM620.3,417.4l5.3,-1.7 2,-4-5.3,1.7zM608.9,393.8l4.6,2.4 5.5,-0.7-4.6,-2.4zM645.7,424.7l0.6,-4.4-3.8,-3.3-0.6,4.3zM640.7,435.6l5.5,-1.8 2,-4.2-5.4,1.8zM628.7,411.1l4.7,2.5 5.6,-0.8-4.6,-2.5zM666.8,443.1l0.6,-4.5-3.9,-3.4-0.5,4.5zM662,454.5l5.6,-1.9 2.1,-4.4-5.6,1.9zM649.2,429l4.8,2.6 5.9,-0.8-4.8,-2.6zM688.8,462.4l0.6,-4.8-4,-3.6-0.6,4.7zM684.1,474.1l5.8,-2 2.1,-4.6-5.7,2zM670.6,447.6l4.9,2.7 6.1,-0.8-5,-2.7zM711.7,482.3l0.6,-4.9-4.2,-3.8-0.6,4.9zM707.1,494.5l5.9,-2.1 2.2,-4.8-5.9,2.1zM692.7,467l5.2,2.8 6.2,-0.9-5.2,-2.8zM506.1,283.8l0.5,-2.8-2.9,-2.1-0.5,2.7zM500.8,291.4l4.1,-1.1 1.6,-2.7-4.1,1.1zM486.3,278.9l4.1,-1 1.5,-2.6-4,1.1zM493.7,274.6l3.5,1.7 4.4,-0.5-3.6,-1.6zM521.1,296.4l0.5,-2.8-2.9,-2.3-0.5,2.9zM515.8,304.4l4.3,-1.2 1.7,-2.8-4.3,1.2zM508.2,286.9l3.7,1.7 4.5,-0.5-3.7,-1.6zM536.7,309.7l0.6,-3-3.1,-2.4-0.5,3zM531.5,318l4.4,-1.3 1.7,-2.9-4.4,1.2zM523.4,299.7l3.8,1.8 4.6,-0.5-3.8,-1.7zM553,323.5l0.6,-3.2-3.2,-2.4-0.5,3.1zM547.8,332.1l4.6,-1.3 1.7,-3.1-4.5,1.3zM539.2,313.1l3.9,1.9 4.8,-0.6-3.9,-1.8zM570,337.9l0.5,-3.3-3.2,-2.6-0.5,3.3zM564.9,346.9l4.7,-1.4 1.7,-3.3-4.7,1.4zM555.6,327.1l4.1,1.9 4.9,-0.6-4.1,-1.9zM587.7,352.9l0.5,-3.5-3.4,-2.7-0.5,3.5zM582.6,362.2l4.8,-1.4 1.8,-3.5-4.8,1.5zM572.8,341.6l4.1,2 5.1,-0.6-4.2,-2zM606,368.5l0.5,-3.7-3.4,-2.8-0.5,3.7zM601,378.2l5,-1.5 1.8,-3.6-4.9,1.5zM590.6,356.7l4.2,2.1 5.3,-0.6-4.3,-2.1zM625.1,384.8l0.5,-3.9-3.5,-2.9-0.6,3.8zM620.2,394.9l5.1,-1.7 1.9,-3.7-5.1,1.6zM609.1,372.5l4.4,2.2 5.4,-0.7-4.5,-2.2zM644.9,401.7l0.6,-4-3.7,-3.1-0.5,4zM640.1,412.2l5.3,-1.7 1.9,-4-5.2,1.8zM628.3,388.9l4.6,2.3 5.5,-0.7-4.5,-2.3zM665.6,419.3l0.5,-4.2-3.8,-3.2-0.5,4.2zM660.9,430.2l5.4,-1.8 2,-4.1-5.4,1.8zM648.4,406l4.7,2.4 5.6,-0.8-4.7,-2.4zM687,437.6l0.5,-4.4-3.9,-3.4-0.5,4.5zM682.4,449l5.6,-2 2,-4.3-5.6,1.9zM669.2,423.7l4.8,2.5 5.9,-0.8-4.9,-2.5zM709.3,456.7l0.5,-4.7-4,-3.5-0.6,4.6zM704.8,468.4l5.7,-2 2.1,-4.5-5.7,2zM690.8,442.2l5,2.6 6,-0.8-5,-2.7zM538.5,292.4l0.5,-2.8-3,-2.2-0.5,2.9zM533.4,300.3l4.3,-1.2 1.6,-2.7-4.2,1.2zM518.1,287.5l4.1,-1.2 1.6,-2.6-4.2,1.1zM525.5,283.1l3.6,1.6 4.5,-0.5-3.7,-1.6zM554.5,305.5l0.4,-2.9-3,-2.3-0.5,2.9zM549.4,313.8l4.4,-1.3 1.7,-2.9-4.4,1.3zM540.9,295.8l3.8,1.6 4.6,-0.5-3.8,-1.7zM571,319.2l0.5,-3.1-3.1,-2.4-0.5,3.1zM566.1,327.8l4.5,-1.4 1.7,-3-4.5,1.3zM557,309l3.9,1.7 4.8,-0.5-3.9,-1.8zM588.3,333.4l0.5,-3.3-3.3,-2.5-0.5,3.3zM583.4,342.3l4.6,-1.4 1.8,-3.2-4.7,1.4zM573.8,322.8l4,1.8 4.9,-0.6-4.1,-1.8zM606.2,348.3l0.5,-3.5-3.3,-2.6-0.5,3.4zM601.4,357.6l4.8,-1.5 1.8,-3.4-4.8,1.5zM591.2,337.1l4.1,2 5.1,-0.6-4.2,-2zM624.9,363.7l0.5,-3.6-3.5,-2.7-0.5,3.6zM620.1,373.4l4.9,-1.6 1.9,-3.5-5,1.6zM609.3,352.1l4.3,2.1 5.1,-0.7-4.3,-2zM644.3,379.8l0.4,-3.8-3.6,-2.8-0.4,3.7zM639.6,389.9l5,-1.7 1.9,-3.7-5.1,1.7zM628.1,367.7l4.4,2.1 5.3,-0.6-4.4,-2.2zM664.4,396.6l0.5,-4-3.7,-3-0.5,4zM659.8,407l5.2,-1.7 1.9,-3.9-5.2,1.7zM647.6,384l4.6,2.2 5.5,-0.7-4.6,-2.3zM685.3,414l0.5,-4.1-3.9,-3.2-0.4,4.2zM680.8,424.9l5.4,-1.9 1.9,-4-5.4,1.8zM667.9,400.9l4.7,2.3 5.7,-0.8-4.7,-2.3zM707,432.2l0.5,-4.4-4,-3.3-0.5,4.4zM702.6,443.4l5.5,-1.9 2,-4.3-5.5,1.9zM689,418.4l4.9,2.5 5.8,-0.8-4.9,-2.5zM729.5,451l0.5,-4.6-4.1,-3.4-0.5,4.6zM725.3,462.7l5.6,-2 2.1,-4.5-5.7,2zM713.3,461.4l5.1,2.7 6.2,-0.9-5.2,-2.7zM710.9,436.7l5,2.6 6,-0.9-5,-2.5zM572,301.4l0.4,-2.9-3,-2.3-0.5,3zM567.2,309.6l4.4,-1.3 1.6,-2.8-4.4,1.2zM550.9,296.3l4.3,-1.2 1.6,-2.7-4.3,1.2zM558.3,291.8l3.8,1.7 4.6,-0.6-3.8,-1.6zM588.9,314.9l0.4,-3.1-3.2,-2.3-0.4,3.1zM584.1,323.4l4.6,-1.3 1.6,-3-4.5,1.3zM574.7,304.9l3.9,1.7 4.8,-0.6-4,-1.7zM606.4,329l0.5,-3.2-3.3,-2.5-0.4,3.2zM601.7,337.8l4.7,-1.4 1.7,-3.1-4.7,1.4zM591.7,318.5l4.1,1.8 4.9,-0.6-4.1,-1.8zM624.7,343.7l0.4,-3.4-3.4,-2.6-0.4,3.4zM620,352.9l4.8,-1.5 1.7,-3.3-4.7,1.5zM609.4,332.7l4.2,1.9 5,-0.6-4.2,-1.9zM643.6,358.9l0.4,-3.5-3.5,-2.7-0.4,3.6zM639,368.6l4.9,-1.6 1.8,-3.5-4.9,1.6zM627.8,347.5l4.3,2 5.2,-0.7-4.3,-1.9zM663.2,374.9l0.5,-3.7-3.6,-2.8-0.5,3.7zM658.8,384.9l5,-1.7 1.8,-3.6-5,1.6zM646.9,363l4.4,2 5.4,-0.7-4.5,-2zM683.6,391.5l0.5,-3.9-3.7,-3-0.5,3.9zM679.3,401.8l5.2,-1.7 1.8,-3.8-5.2,1.7zM666.7,379l4.6,2.2 5.5,-0.7-4.6,-2.2zM704.8,408.7l0.5,-4.1-3.9,-3-0.4,4zM700.5,419.5l5.4,-1.8 1.9,-4-5.4,1.8zM687.3,395.8l4.7,2.2 5.6,-0.8-4.7,-2.2zM726.8,426.7l0.4,-4.3-4,-3.2-0.4,4.3zM722.6,437.9l5.5,-1.9 2,-4.2-5.5,1.9zM708.6,413.2l4.9,2.3 5.8,-0.8-4.9,-2.4zM606.6,310.7l0.4,-3.1-3.2,-2.2-0.4,3zM602.1,319.1l4.5,-1.3 1.6,-3-4.5,1.4zM584.8,305.4l4.4,-1.2 1.6,-2.9-4.4,1.3zM592.2,300.8l4,1.7 4.7,-0.6-4,-1.7zM624.4,324.6l0.4,-3.2-3.3,-2.4-0.4,3.2zM619.9,333.4l4.7,-1.4 1.6,-3.1-4.6,1.4zM609.5,314.3l4.1,1.7 4.9,-0.6-4.1,-1.7zM642.9,339.1l0.4,-3.3-3.4,-2.5-0.4,3.3zM638.5,348.2l4.8,-1.4 1.7,-3.3-4.8,1.5zM627.5,328.3l4.2,1.8 5,-0.6-4.2,-1.8zM662.1,354.2l0.4,-3.5-3.5,-2.6-0.4,3.5zM657.8,363.7l4.9,-1.5 1.7,-3.4-4.9,1.5zM646.2,343l4.3,1.9 5.2,-0.7-4.4,-1.9zM682.1,369.9l0.4,-3.6-3.7,-2.7-0.4,3.6zM677.8,379.9l5,-1.7 1.8,-3.5-5,1.6zM665.5,358.2l4.5,2 5.3,-0.7-4.5,-2zM702.7,386.4l0.4,-3.9-3.7,-2.8-0.4,3.8zM698.6,396.7l5.1,-1.7 1.9,-3.8-5.2,1.7zM685.6,374.1l4.6,2.1 5.5,-0.7-4.6,-2.1zM724.2,403.4l0.4,-4-3.9,-3-0.4,4zM720.1,414.2l5.3,-1.8 1.9,-4-5.3,1.8zM706.5,390.7l4.7,2.2 5.6,-0.8-4.7,-2.2zM642.3,320.2l0.4,-3.1-3.4,-2.3-0.4,3.1zM638,328.9l4.6,-1.4 1.6,-3-4.6,1.4zM619.8,314.8l4.5,-1.3 1.6,-2.9-4.5,1.3zM627.2,310.1l4.1,1.7 4.9,-0.6-4.1,-1.8zM661.1,334.5l0.3,-3.2-3.4,-2.4-0.4,3.2zM656.9,343.6l4.7,-1.4 1.6,-3.2-4.7,1.4zM645.5,324l4.2,1.7 5,-0.6-4.2,-1.8zM680.5,349.5l0.4,-3.4-3.5,-2.6-0.4,3.4zM676.4,359l4.9,-1.6 1.7,-3.3-4.9,1.5zM664.4,338.4l4.4,1.9 5.1,-0.7-4.4,-1.8zM700.7,365l0.4,-3.5-3.7,-2.7-0.3,3.6zM696.7,374.9l5,-1.6 1.7,-3.5-5,1.6zM684,353.5l4.5,2 5.3,-0.7-4.5,-2zM721.7,381.3l0.3,-3.8-3.8,-2.8-0.3,3.8zM717.7,391.5l5.2,-1.7 1.7,-3.7-5.1,1.7zM704.4,369.3l4.6,2 5.5,-0.8-4.7,-2zM743.3,398.2l0.4,-4-3.9,-2.9-0.4,3.9zM739.5,408.8l5.3,-1.8 1.8,-3.8-5.3,1.8zM728.1,407.9l4.9,2.3 5.7,-0.8-4.9,-2.3zM725.5,385.6l4.8,2.2 5.5,-0.9-4.7,-2.1zM679.1,330l0.3,-3.2-3.5,-2.3-0.3,3.2zM675,339l4.8,-1.4 1.6,-3.1-4.7,1.4zM655.9,324.5l4.6,-1.4 1.6,-3-4.6,1.4zM663.3,319.6l4.2,1.8 5,-0.7-4.2,-1.7zM698.8,344.8l0.3,-3.3-3.6,-2.5-0.3,3.3zM694.9,354.2l4.8,-1.5 1.7,-3.3-4.9,1.5zM682.5,333.9l4.4,1.8 5.1,-0.7-4.4,-1.7zM719.2,360.2l0.4,-3.5-3.7,-2.6-0.3,3.5zM715.4,370l5,-1.6 1.7,-3.5-5,1.6zM702.4,348.9l4.5,1.8 5.3,-0.7-4.5,-1.9zM740.4,376.2l0.3,-3.7-3.8,-2.7-0.3,3.7zM736.7,386.4l5.1,-1.7 1.7,-3.6-5.1,1.7zM723,364.4l4.6,2 5.5,-0.8-4.7,-2zM716.9,340.2l0.3,-3.3-3.6,-2.5-0.3,3.3zM713.2,349.5l4.8,-1.6 1.6,-3.2-4.8,1.5zM693.1,334.5l4.7,-1.4 1.6,-3.1-4.7,1.4zM700.4,329.5l4.4,1.7 5.1,-0.7-4.4,-1.7zM737.6,355.3l0.3,-3.4-3.7,-2.5-0.3,3.4zM734,365.1l4.9,-1.6 1.7,-3.4-5,1.6zM720.6,344.2l4.5,1.8 5.3,-0.7-4.6,-1.8zM755.8,350.6l0.3,-3.4-3.8,-2.5-0.2,3.4zM752.4,360.2l4.9,-1.6 1.6,-3.3-4.9,1.6zM731.3,344.8l4.8,-1.5 1.6,-3.2-4.8,1.5zM741.5,359.6l4.6,1.9 5.4,-0.8-4.6,-1.9zM738.6,339.6l4.6,1.8 5.2,-0.8-4.5,-1.8z" fill="#c3c4c5"/></svg><div style="left:150px;top:200px;width:650px;height:500px;background:linear-gradient(170deg,rgba(0,0,0,.10) 0%,rgba(0,0,0,0) 85%);"></div></div>
<svg style="left:100px;top:280px;" width="120" height="90" viewBox="0 0 120 90"><ellipse cx="57.3" cy="60.6" rx="20.6" ry="8.6" fill="#3a3028" transform="rotate(-5 57.3 60.6)"/><ellipse cx="57.3" cy="60.8" rx="19.6" ry="7.6" fill="#f2dccb" transform="rotate(-5 57.3 60.8)"/><defs><radialGradient id="g48" cx="0.35" cy="0.68" r="0.75"><stop offset="0" stop-color="#968c80"/><stop offset="0.55" stop-color="#6a625a"/><stop offset="1" stop-color="#3c3834"/></radialGradient></defs><circle cx="48.1" cy="39.6" r="19.0" fill="#2a2622" opacity="0.85"/><circle cx="48.1" cy="39.6" r="16.2" fill="url(#g48)"/><circle cx="48.1" cy="39.6" r="17.0" fill="none" stroke="#fff4e8" stroke-width="1.8"/><circle cx="48.1" cy="39.6" r="15.499999999999998" fill="none" stroke="#fff4e8" stroke-width="1.4" stroke-dasharray="2.2 1.6"/></svg>
<svg style="left:450px;top:380px;" width="100" height="100" viewBox="0 0 100 100"><defs><radialGradient id="g41" cx="0.35" cy="0.68" r="0.75"><stop offset="0" stop-color="#968c80"/><stop offset="0.55" stop-color="#6a625a"/><stop offset="1" stop-color="#3c3834"/></radialGradient></defs><clipPath id="cg41"><rect x="17.1" y="16.200000000000003" width="48.8" height="33.0"/></clipPath><g clip-path="url(#cg41)"><circle cx="41.5" cy="40.6" r="22.0" fill="#2a2622" opacity="0.85"/><circle cx="41.5" cy="40.6" r="19.2" fill="url(#g41)"/><circle cx="41.5" cy="40.6" r="20.0" fill="none" stroke="#fff4e8" stroke-width="1.8"/><circle cx="41.5" cy="40.6" r="18.5" fill="none" stroke="#fff4e8" stroke-width="1.4" stroke-dasharray="2.2 1.6"/></g><path d="M22,50 Q26,66 44,74 M61,50 Q58,60 50,68" fill="none" stroke="#3a3028" stroke-width="0.9"/><path d="M44,52 L51,62 L62,56 L69,60 L57,66 L66,72 L50,74 L42,78 L46,68 L34,72 L40,64 L30,62 L42,60Z M44,52 L40,64 M51,62 L46,68 M57,66 L50,74" fill="none" stroke="#2a2420" stroke-width="0.8" opacity="0.8"/></svg>
<svg style="left:460px;top:300px;" width="140" height="110" viewBox="0 0 140 110"><defs><radialGradient id="sg" cx="0.5" cy="0.5" r="0.5"><stop offset="0.5" stop-color="#8a8076"/><stop offset="0.85" stop-color="#5a534c"/><stop offset="1" stop-color="#3e3934"/></radialGradient></defs><path d="M48.50000000000001,64.7 L15.900000000000006,82.3" stroke="#f4f4f4" stroke-width="2.6" stroke-linecap="round" opacity="0.95"/><rect x="64.4" y="23.4" width="7" height="14.5" rx="1.6" fill="#fffdf8" stroke="#3a332c" stroke-width="1" transform="rotate(0 67.9 55.9)"/><rect x="64.4" y="23.4" width="7" height="14.5" rx="1.6" fill="#fffdf8" stroke="#3a332c" stroke-width="1" transform="rotate(45 67.9 55.9)"/><rect x="64.4" y="23.4" width="7" height="14.5" rx="1.6" fill="#fffdf8" stroke="#3a332c" stroke-width="1" transform="rotate(90 67.9 55.9)"/><rect x="64.4" y="23.4" width="7" height="14.5" rx="1.6" fill="#fffdf8" stroke="#3a332c" stroke-width="1" transform="rotate(135 67.9 55.9)"/><rect x="64.4" y="23.4" width="7" height="14.5" rx="1.6" fill="#fffdf8" stroke="#3a332c" stroke-width="1" transform="rotate(180 67.9 55.9)"/><rect x="64.4" y="23.4" width="7" height="14.5" rx="1.6" fill="#fffdf8" stroke="#3a332c" stroke-width="1" transform="rotate(225 67.9 55.9)"/><rect x="64.4" y="23.4" width="7" height="14.5" rx="1.6" fill="#fffdf8" stroke="#3a332c" stroke-width="1" transform="rotate(270 67.9 55.9)"/><rect x="64.4" y="23.4" width="7" height="14.5" rx="1.6" fill="#fffdf8" stroke="#3a332c" stroke-width="1" transform="rotate(315 67.9 55.9)"/><circle cx="67.9" cy="55.9" r="19.4" fill="url(#sg)"/><circle cx="67.9" cy="55.9" r="10.6" fill="#f3e6da"/><circle cx="67.9" cy="55.9" r="9.4" fill="#ffffff"/></svg>
<div style="left:831px;top:43px;width:24px;height:22px;background:#2d2d2d;border-radius:11px 0 0 11px;"></div>
<div style="left:856px;top:43px;width:24px;height:22px;background:#0353b5;border-radius:0;"></div>
<div style="left:881px;top:43px;width:24px;height:22px;background:#2d2d2d;border-radius:0;"></div>
<div style="left:906px;top:43px;width:23px;height:22px;background:#2d2d2d;border-radius:0 11px 11px 0;"></div>
<div style="left:937px;top:43px;width:21.5px;height:22px;background:#2d2d2d;border-radius:11px;"></div>
<div style="left:966px;top:43px;width:21.5px;height:22px;background:#2d2d2d;border-radius:11px;"></div>
<div style="left:995px;top:43px;width:24px;height:22px;background:#2d2d2d;border-radius:11px 0 0 11px;"></div>
<div style="left:1020px;top:43px;width:22px;height:22px;background:#2d2d2d;border-radius:0 11px 11px 0;"></div>
<div style="left:1050px;top:43px;width:24px;height:22px;background:#0353b5;border-radius:11px 0 0 11px;"></div>
<div style="left:1075px;top:43px;width:25px;height:22px;background:#2d2d2d;border-radius:0 11px 11px 0;"></div>
<div style="left:1114px;top:43px;width:24px;height:22px;background:#0353b5;border-radius:11px 0 0 11px;"></div>
<div style="left:1139px;top:43px;width:30px;height:22px;background:#2d2d2d;border-radius:0 11px 11px 0;"></div>
<div style="left:1177px;top:43px;width:40px;height:22px;background:#2d2d2d;border-radius:11px;"></div>
<div style="left:1227px;top:43px;width:21px;height:22px;background:#2d2d2d;border-radius:11px;"></div>
<svg style="left:834px;top:44px;" width="20" height="20" viewBox="0 0 20 20"><path d="M7,3.8 L7,15.2 L9.9,12.4 L12,16.9 L13.6,16.1 L11.6,11.8 L15.4,11.6Z" fill="#d0d0d0"/></svg>
<svg style="left:858px;top:44px;" width="20" height="20" viewBox="0 0 20 20"><path transform="translate(10 10) scale(0.86) translate(-10 -10)" d="M10,2.2 L13,5.6 H11 V9 H14.4 V7 L17.8,10 L14.4,13 V11 H11 V14.4 H13 L10,17.8 L7,14.4 H9 V11 H5.6 V13 L2.2,10 L5.6,7 V9 H9 V5.6 H7Z" fill="#ffffff"/></svg>
<svg style="left:883px;top:44px;" width="20" height="20" viewBox="0 0 20 20"><g transform="translate(10 10) scale(0.9) translate(-10 -10)"><path d="M4,8.6 A6.2,6.2 0 0,1 15,6.4 M16,11.4 A6.2,6.2 0 0,1 5,13.6" fill="none" stroke="#d0d0d0" stroke-width="1.5"/><path d="M16.4,3.4 V7.8 H12Z M3.6,16.6 V12.2 H8Z" fill="#d0d0d0"/></g></svg>
<svg style="left:907.5px;top:44px;" width="20" height="20" viewBox="0 0 20 20"><path d="M7.8,13.6 L13.8,6.6" stroke="#d0d0d0" stroke-width="1.6"/><path d="M10,4.6 H15.6 V10.2Z" fill="#d0d0d0"/><rect x="4.6" y="12.2" width="3.2" height="3.2" fill="#d0d0d0"/><path d="M4.6,8.6 V5.2 H7.6 M12.4,15.4 H15.4 V12.4" fill="none" stroke="#d0d0d0" stroke-width="1.3"/></svg>
<svg style="left:938px;top:44px;" width="20" height="20" viewBox="0 0 20 20"><circle cx="10" cy="10" r="6.6" fill="none" stroke="#d0d0d0" stroke-width="1.3"/><ellipse cx="10" cy="10" rx="2.9" ry="6.6" fill="none" stroke="#d0d0d0" stroke-width="1.2"/><path d="M3.4,10 H16.6" stroke="#d0d0d0" stroke-width="1.2"/></svg>
<svg style="left:967px;top:44px;" width="20" height="20" viewBox="0 0 20 20"><path d="M3.1,10.5 Q7.4,11 8,12.4 Q9.2,14 9.3,16.7" fill="none" stroke="#d0d0d0" stroke-width="1.3"/><path d="M4.9,10.2 L5.7,5.4 M8,12.2 L12,8 M9.1,14.7 L14.3,14.2" fill="none" stroke="#d0d0d0" stroke-width="1.2"/><path d="M3.8,5.7 L6.4,3.7 L7.7,6.3Z M9.3,7.6 L13.2,6.8 L13,10.3Z M13.9,12.3 L16.1,13.8 L14.6,16Z" fill="#d0d0d0"/></svg>
<svg style="left:997px;top:44px;" width="20" height="20" viewBox="0 0 20 20"><rect x="4.2" y="4.2" width="11.8" height="11.8" fill="none" stroke="#d0d0d0" stroke-width="1.3"/><path d="M8.1,4.2 V16 M12.1,4.2 V16 M4.2,8.1 H16 M4.2,12.1 H16" stroke="#d0d0d0" stroke-width="1.1"/></svg>
<span class="t" style="left:1024.4px;top:46.0px;font-size:13px;line-height:16px;color:#d0d0d0;letter-spacing:-0.134px;">10</span>
<svg style="left:1052px;top:44px;" width="20" height="20" viewBox="0 0 20 20"><path d="M4.4,15.6 L11.6,4.2 M4,15.6 H16.6" fill="none" stroke="#ffffff" stroke-width="1.4"/><path d="M8,10.6 Q12.6,11.4 13,15.4" fill="none" stroke="#ffffff" stroke-width="1.2"/></svg>
<span class="t" style="left:1078.4px;top:46.0px;font-size:13px;line-height:16px;color:#d0d0d0;letter-spacing:-0.357px;">10°</span>
<svg style="left:1116px;top:44px;" width="20" height="20" viewBox="0 0 20 20"><g transform="translate(10 10) scale(0.86) translate(-10 -10)"><path d="M7.6,13.4 L14,6.6" stroke="#ffffff" stroke-width="1.8"/><path d="M10,5 H15.6 V10.6Z" fill="#ffffff"/><rect x="4.2" y="12.8" width="3.2" height="3.2" fill="#ffffff"/></g></svg>
<span class="t" style="left:1142.5px;top:46.0px;font-size:13px;line-height:16px;color:#d0d0d0;letter-spacing:-0.178px;">0.25</span>
<svg style="left:1181px;top:44px;" width="22" height="20" viewBox="0 0 22 20"><g transform="translate(10 10) scale(0.92) translate(-10 -10)"><rect x="2" y="4.6" width="11" height="10.4" rx="1.4" fill="none" stroke="#d0d0d0" stroke-width="1.4"/><path d="M13.6,9.8 L17.4,6.6 V13 Z" fill="none" stroke="#d0d0d0" stroke-width="1.3"/></g></svg>
<span class="t" style="left:1203.6px;top:46.0px;font-size:13px;line-height:16px;color:#d0d0d0;letter-spacing:-1.200px;">1</span>
<svg style="left:1228px;top:44px;" width="20" height="20" viewBox="0 0 20 20"><g transform="translate(10 10) scale(0.9) translate(-10 -10)"><rect x="3" y="4.4" width="13.6" height="11" rx="1" fill="none" stroke="#d0d0d0" stroke-width="1.4"/><path d="M9.8,4.4 V15.4 M3,9.9 H16.6" stroke="#d0d0d0" stroke-width="1.3"/></g></svg>
<div style="left:-10px;top:906px;width:1173px;height:27px;background:#0f0f0f;border:1px solid #383838;border-radius:4px;"></div>
<svg style="left:1135px;top:910px;" width="20" height="20" viewBox="0 0 20 20"><path d="M6.0,8.0 L10.5,13.0 L15.0,8.0" fill="none" stroke="#c0c0c0" stroke-width="1.8" stroke-linecap="round" stroke-linejoin="round"/></svg>
<svg style="left:1174px;top:908px;" width="24" height="24" viewBox="0 0 24 24"><path d="M9.30,6.68 L10.32,6.36 L10.19,4.11 L12.81,4.11 L12.68,6.36 L13.70,6.68 L14.65,7.18 L16.15,5.49 L18.01,7.35 L16.32,8.85 L16.82,9.80 L17.14,10.82 L19.39,10.69 L19.39,13.31 L17.14,13.18 L16.82,14.20 L16.32,15.15 L18.01,16.65 L16.15,18.51 L14.65,16.82 L13.70,17.32 L12.68,17.64 L12.81,19.89 L10.19,19.89 L10.32,17.64 L9.30,17.32 L8.35,16.82 L6.85,18.51 L4.99,16.65 L6.68,15.15 L6.18,14.20 L5.86,13.18 L3.61,13.31 L3.61,10.69 L5.86,10.82 L6.18,9.80 L6.68,8.85 L4.99,7.35 L6.85,5.49 L8.35,7.18Z M7.98,12.00 a3.52,3.52 0 1,0 7.04,0 a3.52,3.52 0 1,0 -7.04,0Z" fill="#c0c0c0" fill-rule="evenodd"/><circle cx="11.5" cy="12" r="2.16" fill="none" stroke="#c0c0c0" stroke-width="0.96"/></svg>
<span class="t" style="left:1201px;top:912.0px;font-size:13px;line-height:16px;color:#c0c0c0;letter-spacing:-0.061px;">Settings</span>
<div style="left:-20px;top:947px;width:199px;height:22px;background:#0f0f0f;border:1px solid #383838;border-radius:11px;"></div>
<svg style="left:155px;top:948px;" width="20" height="20" viewBox="0 0 20 20"><path d="M5.5,7.5 L10,12.5 L14.5,7.5" fill="none" stroke="#c0c0c0" stroke-width="2" stroke-linecap="round" stroke-linejoin="round"/></svg>
<div style="left:1264px;top:37px;width:160px;height:25px;background:#242424;border-radius:5px 5px 0 0;"></div>
<div style="left:1264px;top:62px;width:509px;height:38px;background:#242424;"></div>
<svg style="left:1268px;top:40px;" width="18" height="16" viewBox="0 0 18 16"><rect x="2.1" y="1" width="14" height="3" fill="#c0c0c0"/><rect x="7.2" y="7.1" width="8.9" height="3" fill="#c0c0c0"/><rect x="7.2" y="12" width="8.9" height="3" fill="#c0c0c0"/><path d="M2.6,5 V13.6 H6 M2.6,8.7 H6" fill="none" stroke="#c0c0c0" stroke-width="1"/></svg>
<span class="t" style="left:1291px;top:40.5px;font-size:13px;line-height:16px;color:#c0c0c0;letter-spacing:-0.191px;">Outliner</span>
<svg style="left:1398px;top:41px;" width="16" height="16" viewBox="0 0 16 16"><path d="M5.1,5.1 L10.9,10.9 M10.9,5.1 L5.1,10.9" stroke="#c0c0c0" stroke-width="1.7" fill="none"/></svg>
<svg style="left:1272px;top:70px;" width="40" height="20" viewBox="0 0 40 20"><path d="M4,6 H18 M6.8,10.7 H15.2 M9.2,15.6 H12.8" stroke="#c0c0c0" stroke-width="2" fill="none"/><path d="M24.8,8.7 L29,13.3 L33.2,8.7" fill="none" stroke="#c0c0c0" stroke-width="1.6" stroke-linecap="round" stroke-linejoin="round"/></svg>
<div style="left:1316px;top:70px;width:397px;height:22px;background:#0f0f0f;border:1px solid #303030;border-radius:11px;"></div>
<svg style="left:1319px;top:71px;" width="20" height="20" viewBox="0 0 20 20"><circle cx="9.3" cy="8.8" r="4.3" fill="none" stroke="#c0c0c0" stroke-width="1.35"/><path d="M12.396,11.896 L15.796000000000001,15.296000000000001" stroke="#c0c0c0" stroke-width="1.5" stroke-linecap="round"/></svg>
<span class="t" style="left:1343.5px;top:71.8px;font-size:13px;line-height:16px;color:#5c5c5c;letter-spacing:-0.337px;">Search...</span>
<svg style="left:1688px;top:71px;" width="20" height="20" viewBox="0 0 20 20"><path d="M6.5,7.9 L11,12.9 L15.5,7.9" fill="none" stroke="#c0c0c0" stroke-width="2.1" stroke-linecap="round" stroke-linejoin="round"/></svg>
<svg style="left:1721px;top:70px;" width="20" height="20" viewBox="0 0 20 20"><path d="M3,4.2 H7.6 L9,6.4 H17 V17 H3 Z" fill="#c0c0c0"/><path d="M10,8.6 V14.8 M6.9,11.7 H13.1" stroke="#242424" stroke-width="2"/></svg>
<svg style="left:1744px;top:70px;" width="22" height="22" viewBox="0 0 22 22"><path d="M8.85,5.81 L9.85,5.50 L9.72,3.31 L12.28,3.31 L12.15,5.50 L13.15,5.81 L14.07,6.30 L15.54,4.65 L17.35,6.46 L15.70,7.93 L16.19,8.85 L16.50,9.85 L18.69,9.72 L18.69,12.28 L16.50,12.15 L16.19,13.15 L15.70,14.07 L17.35,15.54 L15.54,17.35 L14.07,15.70 L13.15,16.19 L12.15,16.50 L12.28,18.69 L9.72,18.69 L9.85,16.50 L8.85,16.19 L7.93,15.70 L6.46,17.35 L4.65,15.54 L6.30,14.07 L5.81,13.15 L5.50,12.15 L3.31,12.28 L3.31,9.72 L5.50,9.85 L5.81,8.85 L6.30,7.93 L4.65,6.46 L6.46,4.65 L7.93,6.30Z M7.57,11.00 a3.43,3.43 0 1,0 6.86,0 a3.43,3.43 0 1,0 -6.86,0Z" fill="#c0c0c0" fill-rule="evenodd"/><circle cx="11" cy="11" r="2.11" fill="none" stroke="#c0c0c0" stroke-width="0.94"/></svg>
<div style="left:1264px;top:100px;width:509px;height:25px;background:#2f2f2f;"></div>
<div style="left:1264px;top:124px;width:509px;height:2px;background:#161616;"></div>
<div style="left:1288px;top:100px;width:1px;height:24px;background:#1f1f1f;"></div>
<div style="left:1634px;top:100px;width:1px;height:24px;background:#1f1f1f;"></div>
<svg style="left:1266px;top:102px;" width="20" height="20" viewBox="0 0 20 20"><path d="M3.4000000000000004,10.2 Q10,2.6999999999999993 16.6,10.2 Q10,17.7 3.4000000000000004,10.2Z" fill="none" stroke="#c0c0c0" stroke-width="1.3"/><circle cx="10" cy="10.2" r="2.3" fill="#c0c0c0"/></svg>
<span class="t" style="left:1293.2px;top:104.0px;font-size:13px;line-height:16px;color:#c0c0c0;letter-spacing:-0.140px;">Item Label</span>
<svg style="left:1356px;top:104.4px;" width="14" height="14" viewBox="0 0 14 14"><path d="M3.5,9.5 L7,5.5 L10.5,9.5Z" fill="#c0c0c0"/></svg>
<span class="t" style="left:1639.7px;top:104.0px;font-size:13px;line-height:16px;color:#c0c0c0;letter-spacing:-0.147px;">Type</span>
<div style="left:1264px;top:125px;width:509px;height:285px;background:#1a1a1a;"></div>
<div style="left:1264px;top:126px;width:509px;height:20px;background:#2c323b;border-top:1px solid #303844;border-bottom:1px solid #303844;"></div>
<svg style="left:1294px;top:128px;" width="16" height="16" viewBox="0 0 16 16"><path d="M3,6 H12.4 L7.7,11.8Z" fill="#9a9a9a"/></svg>
<svg style="left:1309px;top:128px;" width="18" height="17" viewBox="0 0 18 17"><rect x="1" y="12.85" width="16" height="1.95" fill="#868c94"/><path d="M1.2,13 L3.4,9.6 M16.8,13 L14.6,9.6" stroke="#868c94" stroke-width="1"/><path d="M4.1,11.5 L6.9,2.4 L9.5,9.55 L11.5,5.8 L14,11.5Z" fill="#d2d2d2"/></svg>
<span class="t" style="left:1332.2px;top:128.3px;font-size:13px;line-height:16px;color:#c0c0c0;letter-spacing:-0.267px;">HexStar_Tile_Test8_SHADER (Editor)</span>
<span class="t" style="left:1643.2px;top:128.3px;font-size:13px;line-height:16px;color:#8a8a8a;letter-spacing:-0.164px;">World</span>
<div style="left:1264px;top:146px;width:509px;height:20px;background:#151515;"></div>
<svg style="left:1322px;top:148px;" width="18" height="18" viewBox="0 0 18 18"><circle cx="8.1" cy="6.05" r="5.5" fill="#6e6e6e"/><path d="M4.2,2.4 A5.4,5.4 0 1,0 13.4,7.6" fill="none" stroke="#b8b8b8" stroke-width="1.1"/><rect x="9" y="3.1" width="2.2" height="2" fill="#d0d0d0"/><path d="M3.1,10.6 L0.6,14 M13.1,10.6 L15.6,14" fill="none" stroke="#7c7c7c" stroke-width="1.2"/><rect x="0" y="13.6" width="16.2" height="2.4" fill="#7c7c7c"/></svg>
<span class="t" style="left:1344.4px;top:148.3px;font-size:13px;line-height:16px;color:#c0c0c0;letter-spacing:-0.420px;">BP_Stamp</span>
<span class="t" style="left:1644.7px;top:148.3px;font-size:13px;line-height:16px;color:#8fb6f2;text-decoration:underline dotted #8fb6f2;text-underline-offset:2px;letter-spacing:-0.443px;">Edit BP_Stamp</span>
<svg style="left:1322px;top:168px;" width="18" height="18" viewBox="0 0 18 18"><rect x="0.5" y="3.5" width="10.5" height="9.5" rx="1" fill="#c0c0c0"/><path d="M11.6,8.2 L16,4.4 V12.2Z" fill="#c0c0c0"/></svg>
<span class="t" style="left:1344.4px;top:168.3px;font-size:13px;line-height:16px;color:#c0c0c0;letter-spacing:-0.162px;">CameraActor</span>
<span class="t" style="left:1643.2px;top:168.3px;font-size:13px;line-height:16px;color:#8a8a8a;letter-spacing:-0.134px;">CameraActor</span>
<div style="left:1264px;top:186px;width:509px;height:20px;background:#151515;"></div>
<svg style="left:1322px;top:188px;" width="18" height="18" viewBox="0 0 18 18"><circle cx="6.6" cy="6.8" r="2.1" fill="#c0c0c0"/><path d="M10.20,6.80 L12.80,6.80" stroke="#c0c0c0" stroke-width="1.2"/><path d="M6.60,10.40 L6.60,13.00" stroke="#c0c0c0" stroke-width="1.2"/><path d="M4.05,9.35 L2.22,11.18" stroke="#c0c0c0" stroke-width="1.2"/><path d="M3.00,6.80 L0.40,6.80" stroke="#c0c0c0" stroke-width="1.2"/><path d="M4.05,4.25 L2.22,2.42" stroke="#c0c0c0" stroke-width="1.2"/><path d="M6.60,3.20 L6.60,0.60" stroke="#c0c0c0" stroke-width="1.2"/><path d="M9.15,4.25 L10.98,2.42" stroke="#c0c0c0" stroke-width="1.2"/><path d="M9.5,9.7 L14.5,14.7 M15.3,11.2 V15.5 H11" stroke="#c0c0c0" stroke-width="1.3" fill="none"/></svg>
<span class="t" style="left:1344.4px;top:188.3px;font-size:13px;line-height:16px;color:#c0c0c0;letter-spacing:-0.001px;">DirectionalLight</span>
<span class="t" style="left:1643.2px;top:188.3px;font-size:13px;line-height:16px;color:#8a8a8a;letter-spacing:0.056px;">DirectionalLight</span>
<div style="left:1264px;top:206px;width:509px;height:20px;background:#40566f;"></div>
<svg style="left:1322px;top:208px;" width="18" height="18" viewBox="0 0 18 18"><circle cx="8.1" cy="6.05" r="5.5" fill="#8b9db2"/><path d="M4.2,2.4 A5.4,5.4 0 1,0 13.4,7.6" fill="none" stroke="#ffffff" stroke-width="1.1"/><rect x="9" y="3.1" width="2.2" height="2" fill="#ffffff"/><path d="M3.1,10.6 L0.6,14 M13.1,10.6 L15.6,14" fill="none" stroke="#a9b7c7" stroke-width="1.2"/><rect x="0" y="13.6" width="16.2" height="2.4" fill="#a9b7c7"/></svg>
<span class="t" style="left:1344.4px;top:208.3px;font-size:13px;line-height:16px;color:#ffffff;letter-spacing:-0.202px;">FbxScene_HexStars</span>
<span class="t" style="left:1644.7px;top:208.3px;font-size:13px;line-height:16px;color:#8fb6f2;text-decoration:underline dotted #8fb6f2;text-underline-offset:2px;letter-spacing:-0.397px;">Edit FbxScene_HexStars</span>
<svg style="left:1266px;top:206px;" width="20" height="20" viewBox="0 0 20 20"><path d="M3.4000000000000004,10.3 Q10,2.8000000000000007 16.6,10.3 Q10,17.8 3.4000000000000004,10.3Z" fill="none" stroke="#ffffff" stroke-width="1.3"/><circle cx="10" cy="10.3" r="2.3" fill="#ffffff"/></svg>
<div style="left:1264px;top:226px;width:509px;height:20px;background:#151515;"></div>
<svg style="left:1322px;top:228px;" width="18" height="18" viewBox="0 0 18 18"><circle cx="8" cy="3.1" r="2.4" fill="#c0c0c0"/><path d="M4.9,6 H11.1 V7.8 H9.4 L10,12.2 H6 L6.6,7.8 H4.9Z" fill="#8c8c8c"/><path d="M3.2,12.9 H12.8 L13.8,15.8 H2.2Z" fill="#c0c0c0"/></svg>
<span class="t" style="left:1344.4px;top:228.3px;font-size:13px;line-height:16px;color:#c0c0c0;letter-spacing:-0.283px;">Pawn</span>
<span class="t" style="left:1643.2px;top:228.3px;font-size:13px;line-height:16px;color:#8a8a8a;letter-spacing:-0.133px;">Pawn</span>
<svg style="left:1321px;top:248px;" width="18" height="18" viewBox="0 0 18 18"><path d="M1.57,6.47 L10.55,1.8 L16.77,4.57 L7.44,10.79Z" fill="#d4d4d4"/><path d="M4.68,7.08L6.92,5.92L9.32,7.32L7.08,8.48ZM8.18,4.68L10.42,3.52L12.82,4.92L10.58,6.08Z" fill="#1a1a1a"/><path d="M0.88,8.2 L6.92,11.65 V17 L0.88,12.7Z M7.96,11.65 L17.1,6.3 V10.44 L7.96,17Z" fill="#7e7e7e"/></svg>
<span class="t" style="left:1344.4px;top:248.3px;font-size:13px;line-height:16px;color:#c0c0c0;letter-spacing:-0.430px;">Plane</span>
<span class="t" style="left:1643.2px;top:248.3px;font-size:13px;line-height:16px;color:#8a8a8a;letter-spacing:0.010px;">StaticMeshActor</span>
<div style="left:1264px;top:266px;width:509px;height:20px;background:#151515;"></div>
<svg style="left:1322px;top:268px;" width="18" height="18" viewBox="0 0 18 18"><circle cx="8.1" cy="6.05" r="5.5" fill="#6e6e6e"/><path d="M4.2,2.4 A5.4,5.4 0 1,0 13.4,7.6" fill="none" stroke="#b8b8b8" stroke-width="1.1"/><rect x="9" y="3.1" width="2.2" height="2" fill="#d0d0d0"/><path d="M3.1,10.6 L0.6,14 M13.1,10.6 L15.6,14" fill="none" stroke="#7c7c7c" stroke-width="1.2"/><rect x="0" y="13.6" width="16.2" height="2.4" fill="#7c7c7c"/></svg>
<span class="t" style="left:1344.4px;top:268.3px;font-size:13px;line-height:16px;color:#c0c0c0;letter-spacing:-0.735px;">TILE_MANAGER</span>
<span class="t" style="left:1643.2px;top:268.3px;font-size:13px;line-height:16px;color:#8a8a8a;letter-spacing:-0.069px;">Actor</span>
<div style="left:1773px;top:31px;width:4px;height:1242px;background:#151515;"></div>
<div style="left:1264px;top:410px;width:509px;height:33px;background:#2f2f2f;"></div>
<span class="t" style="left:1278.3px;top:418.8px;font-size:13px;line-height:16px;color:#c0c0c0;letter-spacing:-0.066px;">7 actors (1 selected)</span>
<div style="left:1264px;top:448px;width:160px;height:25px;background:#242424;border-radius:4px 4px 0 0;"></div>
<div style="left:1266px;top:447.6px;width:156px;height:1.4px;background:linear-gradient(90deg,#0a64c8 0%,#0a64c8 50%,#242424 100%);"></div>
<div style="left:1264px;top:473px;width:509px;height:800px;background:#242424;"></div>
<svg style="left:1267px;top:451px;" width="18" height="18" viewBox="0 0 18 18"><path d="M3,12.2 L11.6,3.6 L14.4,6.4 L5.8,15 L2.2,15.8Z" fill="#c0c0c0"/><path d="M12.4,2.8 L13.6,1.6 Q14.2,1 14.8,1.6 L16.4,3.2 Q17,3.8 16.4,4.4 L15.2,5.6Z" fill="#c0c0c0"/><path d="M9,15.6 H16" stroke="#8a8a8a" stroke-width="1.3"/><path d="M2,4 H9 M2,6.8 H6.4" stroke="#6a6a6a" stroke-width="1.2"/></svg>
<span class="t" style="left:1291px;top:451.8px;font-size:13px;line-height:16px;color:#c0c0c0;letter-spacing:-0.064px;">Details</span>
<svg style="left:1398px;top:452px;" width="16" height="16" viewBox="0 0 16 16"><path d="M5.1,5.1 L10.9,10.9 M10.9,5.1 L5.1,10.9" stroke="#c0c0c0" stroke-width="1.7" fill="none"/></svg>
<div style="left:1268px;top:508px;width:501px;height:167px;background:#1a1a1a;border-radius:4px;"></div>
<div style="left:1272px;top:504.6px;width:481px;height:24px;background:#141414;"></div>
<svg style="left:1321px;top:508px;" width="18" height="18" viewBox="0 0 18 18"><path d="M1.57,6.47 L10.55,1.8 L16.77,4.57 L7.44,10.79Z" fill="#d4d4d4"/><path d="M4.68,7.08L6.92,5.92L9.32,7.32L7.08,8.48ZM8.18,4.68L10.42,3.52L12.82,4.92L10.58,6.08Z" fill="#141414"/><path d="M0.88,8.2 L6.92,11.65 V17 L0.88,12.7Z M7.96,11.65 L17.1,6.3 V10.44 L7.96,17Z" fill="#7e7e7e"/></svg>
<span class="t" style="left:1344.4px;top:508.6px;font-size:13px;line-height:16px;color:#c0c0c0;letter-spacing:-0.280px;">Object_978</span>
<span class="t" style="left:1660.8px;top:508.6px;font-size:13px;line-height:16px;color:#7fa8ee;text-decoration:underline dotted #7fa8ee;text-underline-offset:2px;letter-spacing:-0.221px;">Edit in Blueprint</span>
<svg style="left:1321px;top:532px;" width="18" height="18" viewBox="0 0 18 18"><path d="M1.57,6.47 L10.55,1.8 L16.77,4.57 L7.44,10.79Z" fill="#d4d4d4"/><path d="M4.68,7.08L6.92,5.92L9.32,7.32L7.08,8.48ZM8.18,4.68L10.42,3.52L12.82,4.92L10.58,6.08Z" fill="#1a1a1a"/><path d="M0.88,8.2 L6.92,11.65 V17 L0.88,12.7Z M7.96,11.65 L17.1,6.3 V10.44 L7.96,17Z" fill="#7e7e7e"/></svg>
<span class="t" style="left:1344.4px;top:532.6px;font-size:13px;line-height:16px;color:#c0c0c0;letter-spacing:-0.280px;">Object_979</span>
<span class="t" style="left:1660.8px;top:532.6px;font-size:13px;line-height:16px;color:#7fa8ee;text-decoration:underline dotted #7fa8ee;text-underline-offset:2px;letter-spacing:-0.221px;">Edit in Blueprint</span>
<div style="left:1272px;top:552.6px;width:481px;height:24px;background:#141414;"></div>
<svg style="left:1321px;top:556px;" width="18" height="18" viewBox="0 0 18 18"><path d="M1.57,6.47 L10.55,1.8 L16.77,4.57 L7.44,10.79Z" fill="#d4d4d4"/><path d="M4.68,7.08L6.92,5.92L9.32,7.32L7.08,8.48ZM8.18,4.68L10.42,3.52L12.82,4.92L10.58,6.08Z" fill="#141414"/><path d="M0.88,8.2 L6.92,11.65 V17 L0.88,12.7Z M7.96,11.65 L17.1,6.3 V10.44 L7.96,17Z" fill="#7e7e7e"/></svg>
<span class="t" style="left:1344.4px;top:556.6px;font-size:13px;line-height:16px;color:#c0c0c0;letter-spacing:-0.274px;">Object_98</span>
<span class="t" style="left:1660.8px;top:556.6px;font-size:13px;line-height:16px;color:#7fa8ee;text-decoration:underline dotted #7fa8ee;text-underline-offset:2px;letter-spacing:-0.221px;">Edit in Blueprint</span>
<svg style="left:1321px;top:580px;" width="18" height="18" viewBox="0 0 18 18"><path d="M1.57,6.47 L10.55,1.8 L16.77,4.57 L7.44,10.79Z" fill="#d4d4d4"/><path d="M4.68,7.08L6.92,5.92L9.32,7.32L7.08,8.48ZM8.18,4.68L10.42,3.52L12.82,4.92L10.58,6.08Z" fill="#1a1a1a"/><path d="M0.88,8.2 L6.92,11.65 V17 L0.88,12.7Z M7.96,11.65 L17.1,6.3 V10.44 L7.96,17Z" fill="#7e7e7e"/></svg>
<span class="t" style="left:1344.4px;top:580.6px;font-size:13px;line-height:16px;color:#c0c0c0;letter-spacing:-0.280px;">Object_980</span>
<span class="t" style="left:1660.8px;top:580.6px;font-size:13px;line-height:16px;color:#7fa8ee;text-decoration:underline dotted #7fa8ee;text-underline-offset:2px;letter-spacing:-0.221px;">Edit in Blueprint</span>
<div style="left:1272px;top:600.6px;width:481px;height:24px;background:#141414;"></div>
<svg style="left:1321px;top:604px;" width="18" height="18" viewBox="0 0 18 18"><path d="M1.57,6.47 L10.55,1.8 L16.77,4.57 L7.44,10.79Z" fill="#d4d4d4"/><path d="M4.68,7.08L6.92,5.92L9.32,7.32L7.08,8.48ZM8.18,4.68L10.42,3.52L12.82,4.92L10.58,6.08Z" fill="#141414"/><path d="M0.88,8.2 L6.92,11.65 V17 L0.88,12.7Z M7.96,11.65 L17.1,6.3 V10.44 L7.96,17Z" fill="#7e7e7e"/></svg>
<span class="t" style="left:1344.4px;top:604.6px;font-size:13px;line-height:16px;color:#c0c0c0;letter-spacing:-0.390px;">Object_981</span>
<span class="t" style="left:1660.8px;top:604.6px;font-size:13px;line-height:16px;color:#7fa8ee;text-decoration:underline dotted #7fa8ee;text-underline-offset:2px;letter-spacing:-0.221px;">Edit in Blueprint</span>
<svg style="left:1321px;top:628px;" width="18" height="18" viewBox="0 0 18 18"><path d="M1.57,6.47 L10.55,1.8 L16.77,4.57 L7.44,10.79Z" fill="#d4d4d4"/><path d="M4.68,7.08L6.92,5.92L9.32,7.32L7.08,8.48ZM8.18,4.68L10.42,3.52L12.82,4.92L10.58,6.08Z" fill="#1a1a1a"/><path d="M0.88,8.2 L6.92,11.65 V17 L0.88,12.7Z M7.96,11.65 L17.1,6.3 V10.44 L7.96,17Z" fill="#7e7e7e"/></svg>
<span class="t" style="left:1344.4px;top:628.6px;font-size:13px;line-height:16px;color:#c0c0c0;letter-spacing:-0.274px;">Object_99</span>
<span class="t" style="left:1660.8px;top:628.6px;font-size:13px;line-height:16px;color:#7fa8ee;text-decoration:underline dotted #7fa8ee;text-underline-offset:2px;letter-spacing:-0.221px;">Edit in Blueprint</span>
<div style="left:1272px;top:508px;width:481px;height:4px;background:#1a1a1a;"></div>
<div style="left:1268px;top:500px;width:501px;height:8px;background:#242424;"></div>
<svg style="left:1275px;top:482px;" width="18" height="18" viewBox="0 0 17 17"><circle cx="8.1" cy="6.05" r="5.5" fill="#6e6e6e"/><path d="M4.2,2.4 A5.4,5.4 0 1,0 13.4,7.6" fill="none" stroke="#b8b8b8" stroke-width="1.1"/><rect x="9" y="3.1" width="2.2" height="2" fill="#d0d0d0"/><path d="M3.1,10.6 L0.6,14 M13.1,10.6 L15.6,14" fill="none" stroke="#7c7c7c" stroke-width="1.2"/><rect x="0" y="13.6" width="16.2" height="2.4" fill="#7c7c7c"/></svg>
<span class="t" style="left:1300.2px;top:481.6px;font-size:15px;line-height:18px;color:#c0c0c0;letter-spacing:-0.140px;">FbxScene_HexStars</span>
<div style="left:1614px;top:479.6px;width:69px;height:22.6px;background:#363636;border:1px solid #181818;border-radius:4px;"></div>
<svg style="left:1627px;top:482.4px;" width="18" height="18" viewBox="0 0 18 18"><path d="M9,2.6 V14.8 M2.9,8.7 H15.1" stroke="#8bc24a" stroke-width="2.1"/></svg>
<span class="t" style="left:1647px;top:483.2px;font-size:13px;line-height:16px;color:#e0e0e0;letter-spacing:-0.447px;">Add</span>
<div style="left:1687px;top:478.6px;width:48px;height:25px;background:#363636;border:1px solid #181818;border-radius:4px;"></div>
<svg style="left:1690px;top:482px;" width="44" height="20" viewBox="0 0 44 20"><rect x="3.2" y="7" width="6.2" height="4.8" rx="1.6" fill="#f0f0f0"/><rect x="13.6" y="3.4" width="5.6" height="4.6" rx="1.6" fill="#f0f0f0"/><rect x="13.6" y="11.4" width="5.6" height="4.6" rx="1.6" fill="#f0f0f0"/><path d="M9,9.4 H11.4 M13.6,5.7 H11.4 V13.7 H13.6" stroke="#b0b0b0" stroke-width="1" fill="none"/><path d="M27.0,7.5 L31.5,12.5 L36.0,7.5" fill="none" stroke="#e0e0e0" stroke-width="1.7" stroke-linecap="round" stroke-linejoin="round"/></svg>
<svg style="left:1745px;top:480px;" width="20" height="22" viewBox="0 0 20 22"><rect x="2.2" y="10.4" width="11" height="6.6" rx="0.6" fill="#c0c0c0"/><path d="M9.2,10.4 V7 Q9.2,3.6 12.6,3.6 Q16,3.6 16,7 V8.2" fill="none" stroke="#c0c0c0" stroke-width="1.5"/><rect x="6.9" y="12.4" width="1.6" height="2.8" fill="#242424"/></svg>
<div style="left:1272px;top:649px;width:481px;height:23px;background:#0070e0;"></div>
<svg style="left:1302px;top:653px;" width="16" height="16" viewBox="0 0 16 16"><rect x="1" y="1.1" width="14" height="13.6" fill="#c9c9c9"/><path d="M10.6,4.9 A4,4 0 1,0 10.6,10.9" fill="none" stroke="#0070e0" stroke-width="2"/><rect x="10.4" y="1.1" width="1.9" height="5.3" fill="#0070e0"/><rect x="10.4" y="9.7" width="1.9" height="5" fill="#0070e0"/></svg>
<span class="t" style="left:1324.3px;top:653.0px;font-size:13px;line-height:16px;color:#ffffff;letter-spacing:-0.037px;">ScaleByMat</span>
<span class="t" style="left:1660.8px;top:653.0px;font-size:13px;line-height:16px;color:#8fb8f6;text-decoration:underline dotted #8fb8f6;text-underline-offset:2px;letter-spacing:-0.221px;">Edit in Blueprint</span>
<div style="left:1755.5px;top:634px;width:8px;height:35.5px;background:#575757;border-radius:4px;"></div>
<svg style="left:1276px;top:642px;" width="140" height="38" viewBox="0 0 140 38"><path d="M27.2,32.9C28.2,32.4 34.3,30.6 33.1,29.7C31.8,28.9 23.9,29.0 19.7,28.0C15.5,27.1 10.2,25.8 7.9,24.1C5.5,22.4 5.3,20.2 5.7,17.8C6.0,15.3 7.5,11.2 9.9,9.2C12.2,7.3 13.5,6.7 19.7,6.3C25.9,5.8 37.4,6.2 47.3,6.6C57.1,6.9 67.0,7.4 78.8,8.3C90.6,9.2 109.1,10.5 118.2,12.2C127.3,14.0 131.5,16.4 133.6,18.9C135.6,21.5 134.3,25.4 130.4,27.6C126.5,29.8 118.9,31.1 110.3,31.9C101.7,32.8 89.3,33.0 78.8,32.7C68.3,32.5 55.2,31.1 47.3,30.5C39.4,29.9 34.1,29.4 31.5,29.2" fill="none" stroke="#f20a0a" stroke-width="1.8" stroke-linecap="round" stroke-linejoin="round"/></svg>
<div style="left:1272px;top:684px;width:417px;height:22px;background:#0f0f0f;border:1px solid #353535;border-radius:11px;"></div>
<svg style="left:1275px;top:685px;" width="20" height="20" viewBox="0 0 20 20"><circle cx="9.2" cy="8.8" r="4.3" fill="none" stroke="#c0c0c0" stroke-width="1.35"/><path d="M12.296,11.896 L15.696,15.296000000000001" stroke="#c0c0c0" stroke-width="1.5" stroke-linecap="round"/></svg>
<span class="t" style="left:1299.3px;top:686.0px;font-size:13px;line-height:16px;color:#5c5c5c;letter-spacing:-0.084px;">Search</span>
<svg style="left:1700px;top:686px;" width="18" height="18" viewBox="0 0 18 18"><rect x="2" y="2" width="14" height="13.6" rx="1" fill="#c0c0c0"/><path d="M3.6,6.2 H8.2 V8.6 H3.6Z M9.8,6.2 H14.4 V8.6 H9.8Z M3.6,10.2 H8.2 V12.6 H3.6Z M9.8,10.2 H14.4 V12.6 H9.8Z" fill="#242424"/><path d="M3.6,13.8 H8.2 V14.2 H3.6Z M9.8,13.8 H14.4 V14.2 H9.8Z" fill="#242424"/></svg>
<svg style="left:1727px;top:685px;" width="20" height="20" viewBox="0 0 20 20"><polygon points="9.40,2.40 11.28,7.21 16.44,7.51 12.44,10.79 13.75,15.79 9.40,13.00 5.05,15.79 6.36,10.79 2.36,7.51 7.52,7.21" fill="#c0c0c0"/></svg>
<svg style="left:1750px;top:684px;" width="22" height="22" viewBox="0 0 22 22"><path d="M8.85,5.61 L9.85,5.30 L9.72,3.11 L12.28,3.11 L12.15,5.30 L13.15,5.61 L14.07,6.10 L15.54,4.45 L17.35,6.26 L15.70,7.73 L16.19,8.65 L16.50,9.65 L18.69,9.52 L18.69,12.08 L16.50,11.95 L16.19,12.95 L15.70,13.87 L17.35,15.34 L15.54,17.15 L14.07,15.50 L13.15,15.99 L12.15,16.30 L12.28,18.49 L9.72,18.49 L9.85,16.30 L8.85,15.99 L7.93,15.50 L6.46,17.15 L4.65,15.34 L6.30,13.87 L5.81,12.95 L5.50,11.95 L3.31,12.08 L3.31,9.52 L5.50,9.65 L5.81,8.65 L6.30,7.73 L4.65,6.26 L6.46,4.45 L7.93,6.10Z M7.57,10.80 a3.43,3.43 0 1,0 6.86,0 a3.43,3.43 0 1,0 -6.86,0Z" fill="#c0c0c0" fill-rule="evenodd"/><circle cx="11" cy="10.8" r="2.11" fill="none" stroke="#c0c0c0" stroke-width="0.94"/></svg>
<div style="left:1273.8px;top:714.5px;width:69.4px;height:20px;background:#2f2f2f;border:1px solid #191919;border-radius:3px;"></div>
<span class="t" style="left:1290px;top:716.9px;font-size:12px;line-height:16px;color:#c0c0c0;letter-spacing:-0.743px;">General</span>
<div style="left:1347.8px;top:714.5px;width:56.6px;height:20px;background:#2f2f2f;border:1px solid #191919;border-radius:3px;"></div>
<span class="t" style="left:1364.2px;top:716.9px;font-size:12px;line-height:16px;color:#c0c0c0;letter-spacing:-0.068px;">Misc</span>
<div style="left:1409.8px;top:714.5px;width:43.6px;height:20px;background:#0070e0;border:1px solid #0a58b0;border-radius:3px;"></div>
<span class="t" style="left:1425px;top:716.9px;font-size:12px;line-height:16px;color:#ffffff;letter-spacing:-0.281px;">All</span>
<div style="left:1266px;top:742px;width:505px;height:531px;background:#161616;"></div>
<div style="left:1266px;top:742px;width:505px;height:26px;background:#2f2f2f;"></div>
<svg style="left:1270px;top:748.3px;" width="12" height="12" viewBox="0 0 12 12"><path d="M1.4,3.4 H10.6 L6,9.4Z" fill="#9a9a9a"/></svg>
<span class="t" style="left:1288.2px;top:746.5px;font-size:12px;line-height:16px;color:#d4d4d4;font-weight:700;letter-spacing:-0.782px;">Default</span>
<div style="left:1266px;top:769px;width:505px;height:57px;background:#242424;"></div>
<div style="left:1470px;top:769px;width:1px;height:57px;background:#1a1a1a;"></div>
<div style="left:1749px;top:769px;width:1px;height:57px;background:#1a1a1a;"></div>
<span class="t" style="left:1288.2px;top:789.2px;font-size:12px;line-height:16px;color:#c0c0c0;letter-spacing:-0.249px;">Scaler Material</span>
<svg style="left:1753px;top:788.5px;" width="18" height="16" viewBox="0 0 18 16"><path d="M4,7 H11 Q14.4,7 14.4,10.2 Q14.4,12.4 12.6,13" fill="none" stroke="#c0c0c0" stroke-width="1.5"/><path d="M7.2,3.4 L3.6,7 L7.2,10.6" fill="none" stroke="#c0c0c0" stroke-width="1.5"/></svg>
<div style="left:1483.5px;top:773.3px;width:49px;height:49px;background:#000;border-radius:3px;box-shadow:0 1px 3px #000;"></div>
<div style="left:1483.5px;top:773.3px;width:49px;height:47px;background:repeating-conic-gradient(#161616 0% 25%,#0c0c0c 0% 50%) 0 0/10px 10px;border-radius:2px;"></div>
<div style="left:1483.5px;top:820.3px;width:49px;height:2px;background:#3fb63f;border-radius:0 0 3px 3px;"></div>
<div style="left:1542px;top:773.5px;width:191px;height:21.5px;background:#0f0f0f;border:1px solid #303030;border-radius:4px;"></div>
<span class="t" style="left:1550px;top:776.3px;font-size:12px;line-height:16px;color:#c0c0c0;letter-spacing:-0.303px;">ScalerMat</span>
<svg style="left:1705px;top:774px;" width="20" height="20" viewBox="0 0 20 20"><path d="M5.800000000000001,7.699999999999999 L10.3,12.7 L14.8,7.699999999999999" fill="none" stroke="#c0c0c0" stroke-width="1.9" stroke-linecap="round" stroke-linejoin="round"/></svg>
<svg style="left:1546px;top:799.1px;" width="18" height="18" viewBox="0 0 18 18"><path d="M13.8,3.8 A6.8,6.8 0 1,0 13.8,14.4" fill="none" stroke="#c0c0c0" stroke-width="1.7"/><path d="M5.4,9.1 H15.4 M9,5.4 L5.2,9.1 L9,12.8" fill="none" stroke="#c0c0c0" stroke-width="1.8"/></svg>
<svg style="left:1571px;top:798.1px;" width="20" height="20" viewBox="0 0 20 20"><path d="M2,2.6 H7 L8.6,4.6 H14.6 V9 A4.6,4.6 0 0,0 8.8,15.4 H2Z" fill="#c0c0c0"/><circle cx="13.2" cy="12.2" r="3" fill="none" stroke="#c0c0c0" stroke-width="1.4"/><path d="M11,14.6 L8.6,17.4" stroke="#c0c0c0" stroke-width="1.6"/></svg>
<div style="left:1266px;top:827px;width:505px;height:26px;background:#242424;"></div>
<div style="left:1470px;top:827px;width:1px;height:26px;background:#1a1a1a;"></div>
<div style="left:1749px;top:827px;width:1px;height:26px;background:#1a1a1a;"></div>
<svg style="left:1270px;top:834.3px;" width="12" height="12" viewBox="0 0 12 12"><path d="M3.4,1 V11 L9.6,6Z" fill="#9a9a9a"/></svg>
<span class="t" style="left:1288.2px;top:831.7px;font-size:12px;line-height:16px;color:#c0c0c0;letter-spacing:-0.767px;">Bounds</span>
<div style="left:1483px;top:829.5px;width:121px;height:21px;background:#000;border-radius:4px;"></div>
<div style="left:1483px;top:829.5px;width:61px;height:21px;background:repeating-conic-gradient(#d8d8d8 0% 25%,#a8a8a8 0% 50%) 0 0/8px 8px;border-radius:4px 0 0 4px;"></div>
<div style="left:1266px;top:854px;width:505px;height:26px;background:#242424;"></div>
<div style="left:1470px;top:854px;width:1px;height:26px;background:#1a1a1a;"></div>
<div style="left:1749px;top:854px;width:1px;height:26px;background:#1a1a1a;"></div>
<span class="t" style="left:1288.2px;top:858.7px;font-size:12px;line-height:16px;color:#c0c0c0;letter-spacing:-0.321px;">Scale Min</span>
<div style="left:1483px;top:857.7px;width:125px;height:18.6px;background:#0f0f0f;border:1px solid #303030;border-radius:4px;"></div>
<span class="t" style="left:1491.9px;top:858.6px;font-size:12px;line-height:16px;color:#e8e8e8;letter-spacing:-0.429px;">0.0</span>
<div style="left:1266px;top:881px;width:505px;height:26px;background:#242424;"></div>
<div style="left:1470px;top:881px;width:1px;height:26px;background:#1a1a1a;"></div>
<div style="left:1749px;top:881px;width:1px;height:26px;background:#1a1a1a;"></div>
<span class="t" style="left:1288.2px;top:885.7px;font-size:12px;line-height:16px;color:#c0c0c0;letter-spacing:-0.448px;">Scale Max</span>
<div style="left:1483px;top:884.7px;width:125px;height:18.6px;background:#0f0f0f;border:1px solid #303030;border-radius:4px;"></div>
<span class="t" style="left:1491.9px;top:885.6px;font-size:12px;line-height:16px;color:#e8e8e8;letter-spacing:-0.429px;">0.0</span>
<div style="left:1266px;top:908px;width:505px;height:57px;background:#242424;"></div>
<div style="left:1470px;top:908px;width:1px;height:57px;background:#1a1a1a;"></div>
<div style="left:1749px;top:908px;width:1px;height:57px;background:#1a1a1a;"></div>
<span class="t" style="left:1288.2px;top:928.2px;font-size:12px;line-height:16px;color:#c0c0c0;letter-spacing:-0.206px;">Input Texture</span>
<svg style="left:1753px;top:927.5px;" width="18" height="16" viewBox="0 0 18 16"><path d="M4,7 H11 Q14.4,7 14.4,10.2 Q14.4,12.4 12.6,13" fill="none" stroke="#c0c0c0" stroke-width="1.5"/><path d="M7.2,3.4 L3.6,7 L7.2,10.6" fill="none" stroke="#c0c0c0" stroke-width="1.5"/></svg>
<div style="left:1483.5px;top:912.3px;width:49px;height:49px;background:#000;border-radius:3px;box-shadow:0 1px 3px #000;"></div>
<div style="left:1506.8px;top:919.5px;width:15px;height:15px;background:radial-gradient(circle,#fff 0%,#fff 56%,rgba(255,255,255,0.4) 76%,rgba(255,255,255,0.0) 100%);border-radius:50%;"></div>
<div style="left:1483.5px;top:959.3px;width:49px;height:2px;background:#c04848;border-radius:0 0 3px 3px;"></div>
<div style="left:1542px;top:912.5px;width:191px;height:21.5px;background:#0f0f0f;border:1px solid #303030;border-radius:4px;"></div>
<span class="t" style="left:1550px;top:915.3px;font-size:12px;line-height:16px;color:#c0c0c0;letter-spacing:-1.117px;">RT_A</span>
<svg style="left:1705px;top:913px;" width="20" height="20" viewBox="0 0 20 20"><path d="M5.800000000000001,7.699999999999999 L10.3,12.7 L14.8,7.699999999999999" fill="none" stroke="#c0c0c0" stroke-width="1.9" stroke-linecap="round" stroke-linejoin="round"/></svg>
<svg style="left:1546px;top:938.1px;" width="18" height="18" viewBox="0 0 18 18"><path d="M13.8,3.8 A6.8,6.8 0 1,0 13.8,14.4" fill="none" stroke="#c0c0c0" stroke-width="1.7"/><path d="M5.4,9.1 H15.4 M9,5.4 L5.2,9.1 L9,12.8" fill="none" stroke="#c0c0c0" stroke-width="1.8"/></svg>
<svg style="left:1571px;top:937.1px;" width="20" height="20" viewBox="0 0 20 20"><path d="M2,2.6 H7 L8.6,4.6 H14.6 V9 A4.6,4.6 0 0,0 8.8,15.4 H2Z" fill="#c0c0c0"/><circle cx="13.2" cy="12.2" r="3" fill="none" stroke="#c0c0c0" stroke-width="1.4"/><path d="M11,14.6 L8.6,17.4" stroke="#c0c0c0" stroke-width="1.6"/></svg>
<div style="left:1266px;top:966px;width:505px;height:26px;background:#242424;"></div>
<div style="left:1470px;top:966px;width:1px;height:26px;background:#1a1a1a;"></div>
<div style="left:1749px;top:966px;width:1px;height:26px;background:#1a1a1a;"></div>
<svg style="left:1270px;top:973.3px;" width="12" height="12" viewBox="0 0 12 12"><path d="M3.4,1 V11 L9.6,6Z" fill="#9a9a9a"/></svg>
<span class="t" style="left:1288.2px;top:970.7px;font-size:12px;line-height:16px;color:#c0c0c0;letter-spacing:-0.551px;">Color A</span>
<div style="left:1483px;top:968.5px;width:121px;height:21px;background:#000;border-radius:4px;"></div>
<div style="left:1483px;top:968.5px;width:61px;height:21px;background:repeating-conic-gradient(#d8d8d8 0% 25%,#a8a8a8 0% 50%) 0 0/8px 8px;border-radius:4px 0 0 4px;"></div>
<div style="left:1266px;top:993px;width:505px;height:26px;background:#242424;"></div>
<div style="left:1470px;top:993px;width:1px;height:26px;background:#1a1a1a;"></div>
<div style="left:1749px;top:993px;width:1px;height:26px;background:#1a1a1a;"></div>
<svg style="left:1270px;top:1000.3px;" width="12" height="12" viewBox="0 0 12 12"><path d="M3.4,1 V11 L9.6,6Z" fill="#9a9a9a"/></svg>
<span class="t" style="left:1288.2px;top:997.7px;font-size:12px;line-height:16px;color:#c0c0c0;letter-spacing:-0.602px;">Color B</span>
<div style="left:1483px;top:995.5px;width:121px;height:21px;background:#000;border-radius:4px;"></div>
<div style="left:1483px;top:995.5px;width:61px;height:21px;background:repeating-conic-gradient(#d8d8d8 0% 25%,#a8a8a8 0% 50%) 0 0/8px 8px;border-radius:4px 0 0 4px;"></div>
<div style="left:1266px;top:1020px;width:505px;height:57px;background:#242424;"></div>
<div style="left:1470px;top:1020px;width:1px;height:57px;background:#1a1a1a;"></div>
<div style="left:1749px;top:1020px;width:1px;height:57px;background:#1a1a1a;"></div>
<span class="t" style="left:1288.2px;top:1040.2px;font-size:12px;line-height:16px;color:#c0c0c0;letter-spacing:-0.330px;">Color Tex</span>
<svg style="left:1753px;top:1039.5px;" width="18" height="16" viewBox="0 0 18 16"><path d="M4,7 H11 Q14.4,7 14.4,10.2 Q14.4,12.4 12.6,13" fill="none" stroke="#c0c0c0" stroke-width="1.5"/><path d="M7.2,3.4 L3.6,7 L7.2,10.6" fill="none" stroke="#c0c0c0" stroke-width="1.5"/></svg>
<div style="left:1483.5px;top:1024.3px;width:49px;height:49px;background:#000;border-radius:3px;box-shadow:0 1px 3px #000;"></div>
<div style="left:1483.5px;top:1024.3px;width:49px;height:47px;border-radius:3px 3px 0 0;background:repeating-linear-gradient(180deg,rgba(200,160,96,0) 0 2.6px,rgba(200,160,96,.85) 2.6px 5px,rgba(200,160,96,0) 5px 7.45px),repeating-linear-gradient(180deg,rgba(90,150,100,0) 0 6.4px,rgba(100,150,110,.75) 6.4px 7.45px),repeating-linear-gradient(90deg,rgba(255,255,255,0) 0 0.4px,rgba(62,104,120,.95) 0.4px 2.4px,rgba(255,255,255,0) 2.4px 4.6px),#fdfdfd;"></div>
<div style="left:1483.5px;top:1024.3px;width:49px;height:47px;border:1.5px solid #fdfdfd;border-bottom:none;border-radius:3px 3px 0 0;"></div>
<div style="left:1483.5px;top:1071.3px;width:49px;height:2px;background:#d83a3a;border-radius:0 0 3px 3px;"></div>
<div style="left:1542px;top:1024.5px;width:191px;height:21.5px;background:#0f0f0f;border:1px solid #303030;border-radius:4px;"></div>
<span class="t" style="left:1550px;top:1027.3px;font-size:12px;line-height:16px;color:#c0c0c0;letter-spacing:-0.266px;">colors_stars</span>
<svg style="left:1705px;top:1025px;" width="20" height="20" viewBox="0 0 20 20"><path d="M5.800000000000001,7.699999999999999 L10.3,12.7 L14.8,7.699999999999999" fill="none" stroke="#c0c0c0" stroke-width="1.9" stroke-linecap="round" stroke-linejoin="round"/></svg>
<svg style="left:1546px;top:1050.1px;" width="18" height="18" viewBox="0 0 18 18"><path d="M13.8,3.8 A6.8,6.8 0 1,0 13.8,14.4" fill="none" stroke="#c0c0c0" stroke-width="1.7"/><path d="M5.4,9.1 H15.4 M9,5.4 L5.2,9.1 L9,12.8" fill="none" stroke="#c0c0c0" stroke-width="1.8"/></svg>
<svg style="left:1571px;top:1049.1px;" width="20" height="20" viewBox="0 0 20 20"><path d="M2,2.6 H7 L8.6,4.6 H14.6 V9 A4.6,4.6 0 0,0 8.8,15.4 H2Z" fill="#c0c0c0"/><circle cx="13.2" cy="12.2" r="3" fill="none" stroke="#c0c0c0" stroke-width="1.4"/><path d="M11,14.6 L8.6,17.4" stroke="#c0c0c0" stroke-width="1.6"/></svg>
<div style="left:1266px;top:1078px;width:505px;height:26px;background:#2f2f2f;"></div>
<svg style="left:1270px;top:1084.3px;" width="12" height="12" viewBox="0 0 12 12"><path d="M1.4,3.4 H10.6 L6,9.4Z" fill="#9a9a9a"/></svg>
<span class="t" style="left:1288.2px;top:1082.5px;font-size:12px;line-height:16px;color:#d4d4d4;font-weight:700;letter-spacing:-0.906px;">Tags</span>
<div style="left:1266px;top:1105px;width:505px;height:26px;background:#242424;"></div>
<div style="left:1470px;top:1105px;width:1px;height:26px;background:#1a1a1a;"></div>
<div style="left:1749px;top:1105px;width:1px;height:26px;background:#1a1a1a;"></div>
<span class="t" style="left:1288.2px;top:1109.7px;font-size:12px;line-height:16px;color:#c0c0c0;letter-spacing:-0.430px;">Component Tags</span>
<span class="t" style="left:1483px;top:1109.8px;font-size:12px;line-height:16px;color:#c0c0c0;letter-spacing:-0.270px;">0 Array element</span>
<svg style="left:1606px;top:1109px;" width="20" height="20" viewBox="0 0 20 20"><circle cx="9.6" cy="9.6" r="7" fill="none" stroke="#c0c0c0" stroke-width="1.4"/><path d="M9.6,6 V13.2 M6,9.6 H13.2" stroke="#c0c0c0" stroke-width="1.8"/></svg>
<svg style="left:1632px;top:1108px;" width="20" height="20" viewBox="0 0 20 20"><path d="M3.2,5.4 H16.4" stroke="#c0c0c0" stroke-width="1.7"/><path d="M7,4.4 V2.6 H12.6 V4.4" fill="none" stroke="#c0c0c0" stroke-width="1.5"/><path d="M5.2,7.4 L5.8,16.6 H13.8 L14.4,7.4" fill="none" stroke="#c0c0c0" stroke-width="1.8"/></svg>
<div style="left:1266px;top:1132px;width:505px;height:26px;background:#2f2f2f;"></div>
<svg style="left:1270px;top:1138.3px;" width="12" height="12" viewBox="0 0 12 12"><path d="M1.4,3.4 H10.6 L6,9.4Z" fill="#9a9a9a"/></svg>
<span class="t" style="left:1288.2px;top:1136.5px;font-size:12px;line-height:16px;color:#d4d4d4;font-weight:700;letter-spacing:-0.682px;">Activation</span>
<div style="left:1266px;top:1159px;width:505px;height:26px;background:#242424;"></div>
<div style="left:1470px;top:1159px;width:1px;height:26px;background:#1a1a1a;"></div>
<div style="left:1749px;top:1159px;width:1px;height:26px;background:#1a1a1a;"></div>
<span class="t" style="left:1288.2px;top:1163.7px;font-size:12px;line-height:16px;color:#c0c0c0;letter-spacing:-0.196px;">Auto Activate</span>
<svg style="left:1753px;top:1163.0px;" width="18" height="16" viewBox="0 0 18 16"><path d="M4,7 H11 Q14.4,7 14.4,10.2 Q14.4,12.4 12.6,13" fill="none" stroke="#c0c0c0" stroke-width="1.5"/><path d="M7.2,3.4 L3.6,7 L7.2,10.6" fill="none" stroke="#c0c0c0" stroke-width="1.5"/></svg>
<div style="left:1483px;top:1163.2px;width:18px;height:18px;background:#0f0f0f;border:1px solid #353535;border-radius:3px;"></div>
<svg style="left:1483px;top:1163.2px;" width="18" height="18" viewBox="0 0 18 18"><path d="M4.6,9.4 L7.8,12.6 L13.8,5.8" fill="none" stroke="#0a7cf0" stroke-width="2"/></svg>
<div style="left:1266px;top:1186px;width:505px;height:26px;background:#2f2f2f;"></div>
<svg style="left:1270px;top:1192.3px;" width="12" height="12" viewBox="0 0 12 12"><path d="M1.4,3.4 H10.6 L6,9.4Z" fill="#9a9a9a"/></svg>
<span class="t" style="left:1288.2px;top:1190.5px;font-size:12px;line-height:16px;color:#d4d4d4;font-weight:700;letter-spacing:-1.100px;">Cooking</span>
<div style="left:1266px;top:1213px;width:505px;height:26px;background:#242424;"></div>
<div style="left:1470px;top:1213px;width:1px;height:26px;background:#1a1a1a;"></div>
<div style="left:1749px;top:1213px;width:1px;height:26px;background:#1a1a1a;"></div>
<span class="t" style="left:1288.2px;top:1217.7px;font-size:12px;line-height:16px;color:#c0c0c0;letter-spacing:-0.409px;">Is Editor Only</span>
<div style="left:1483px;top:1217.2px;width:18px;height:18px;background:#0f0f0f;border:1px solid #353535;border-radius:3px;"></div>
<div style="left:1266px;top:1240px;width:505px;height:26px;background:#2f2f2f;"></div>
<svg style="left:1270px;top:1246.3px;" width="12" height="12" viewBox="0 0 12 12"><path d="M3.4,1 V11 L9.6,6Z" fill="#9a9a9a"/></svg>
<span class="t" style="left:1288.2px;top:1244.5px;font-size:12px;line-height:16px;color:#d4d4d4;font-weight:700;letter-spacing:-0.683px;">Asset User Data</span>
<div style="left:1266px;top:1267px;width:505px;height:6px;background:#2f2f2f;"></div>
</div>
</body></html>
